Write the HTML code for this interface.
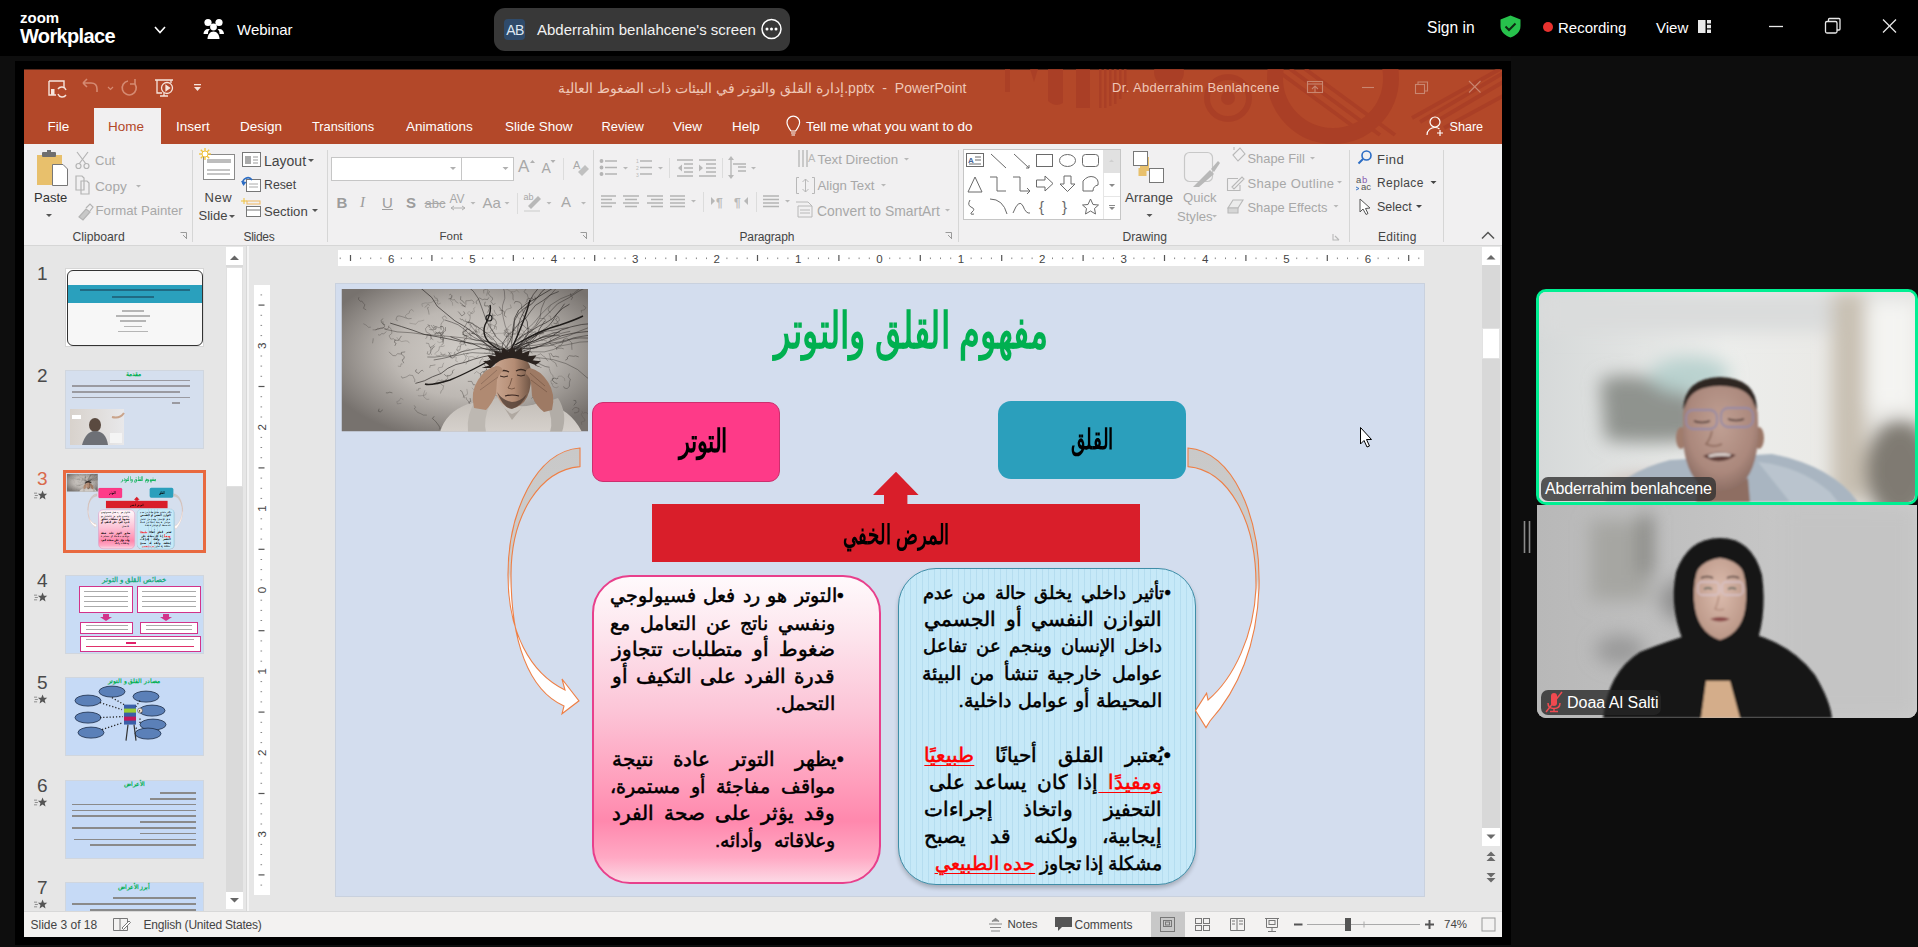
<!DOCTYPE html>
<html><head><meta charset="utf-8">
<style>
*{margin:0;padding:0;box-sizing:border-box}
html,body{width:1918px;height:947px;overflow:hidden;background:#0e0e0e;font-family:"Liberation Sans",sans-serif}
.a{position:absolute}
.t{position:absolute;white-space:nowrap;line-height:1}
svg{position:absolute;overflow:visible}
/* zoom top bar */
#top{left:0;top:0;width:1918px;height:56px;background:#000}
.zw{color:#fff}
/* share */
#share{left:15px;top:61px;width:1496px;height:884px;background:#000}
#ppt{left:24px;top:69px;width:1478px;height:868px;background:#e6e6e6;overflow:hidden}
.or{background:#b34829}
.tab{color:#fff;font-size:13.5px}
.rb{color:#444;font-size:13px}
.dis{color:#a8a8a8}
.gl{color:#444;font-size:13px}
.sep{position:absolute;width:1px;background:#d6d6d6}
.ar{position:absolute;direction:rtl;text-align:right;line-height:27px;height:27px;color:#000;white-space:nowrap;-webkit-text-stroke:0.55px currentColor;font-size:20px}
.rd{color:#f00;text-decoration:underline;text-decoration-thickness:1px;text-underline-offset:3px}
</style></head><body>
<!-- ============ ZOOM TOP BAR ============ -->
<div id="top" class="a"></div>
<div class="t zw" style="left:20px;top:10px;font-size:15px;font-weight:bold">zoom</div>
<div class="t zw" style="left:20px;top:25.5px;font-size:20px;font-weight:bold;letter-spacing:-0.65px">Workplace</div>
<svg style="left:0;top:0" width="10" height="10"><polyline points="155,27 160,32.5 165,27" fill="none" stroke="#fff" stroke-width="1.6"/></svg>
<svg style="left:0;top:0" width="10" height="10" fill="#fff">
 <circle cx="208" cy="22.5" r="3.6"/><circle cx="219" cy="22.5" r="3.6"/>
 <circle cx="213.5" cy="27" r="3.4"/>
 <path d="M203.5 34c0-3 2-5 4.5-5h2c-1 1-2 2.2-2 4v1z"/><path d="M224 34c0-3-2-5-4.5-5h-2c1 1 2 2.2 2 4v1z"/>
 <path d="M207.5 39c0-4 2.5-7.5 6-7.5s6 3.5 6 7.5z"/>
</svg>
<div class="t zw" style="left:237px;top:22px;font-size:15px;">Webinar</div>
<div class="a" style="left:494px;top:8px;width:296px;height:43px;background:#383838;border-radius:11px"></div>
<div class="a" style="left:504px;top:19px;width:21px;height:21px;background:#2f4b6b;border-radius:4px"></div>
<div class="t" style="left:505px;top:23px;font-size:14px;color:#dfe8f2;width:20px;text-align:center;letter-spacing:-0.5px">AB</div>
<div class="t zw" style="left:537px;top:22px;font-size:15px;color:#f2f2f2">Abderrahim benlahcene's screen</div>
<svg style="left:0;top:0" width="10" height="10"><circle cx="771.5" cy="29" r="9.5" fill="none" stroke="#fff" stroke-width="1.5"/><circle cx="767" cy="29" r="1.5" fill="#fff"/><circle cx="771.5" cy="29" r="1.5" fill="#fff"/><circle cx="776" cy="29" r="1.5" fill="#fff"/></svg>
<div class="t zw" style="left:1427px;top:19.5px;font-size:15.6px;">Sign in</div>
<svg style="left:0;top:0" width="10" height="10"><path d="M1510.5 15.5 L1520.5 19.5 V26 C1520.5 32 1516 35.5 1510.5 37.5 C1505 35.5 1500.5 32 1500.5 26 V19.5 Z" fill="#27c24c"/><polyline points="1505.5,26.5 1509,30 1515.5,23.5" fill="none" stroke="#0d2a12" stroke-width="2"/></svg>
<svg style="left:0;top:0" width="10" height="10"><circle cx="1548" cy="27" r="5" fill="#e8322f"/></svg>
<div class="t zw" style="left:1558px;top:20px;font-size:15px;">Recording</div>
<div class="t zw" style="left:1656px;top:20px;font-size:15px;">View</div>
<svg style="left:0;top:0" width="10" height="10" fill="#e8e8e8"><rect x="1698" y="20" width="7.5" height="13"/><rect x="1707" y="20" width="4" height="3.5"/><rect x="1707" y="24.8" width="4" height="3.5"/><rect x="1707" y="29.5" width="4" height="3.5"/></svg>
<svg style="left:0;top:0" width="10" height="10" fill="none" stroke="#e8e8e8" stroke-width="1.3">
 <line x1="1769" y1="26.5" x2="1783" y2="26.5"/>
 <rect x="1825.5" y="21.5" width="11.5" height="11.5" rx="1.5"/><path d="M1828.5 21.5 V19.5 Q1828.5 18.5 1829.5 18.5 H1839 Q1840 18.5 1840 19.5 V29 Q1840 30 1839 30 H1837"/>
 <line x1="1883" y1="19.5" x2="1896" y2="32.5"/><line x1="1896" y1="19.5" x2="1883" y2="32.5"/>
</svg>

<!-- ============ SHARE ============ -->
<div id="share" class="a"></div>
<div id="ppt" class="a"></div>
<!-- title bar + tabs -->
<div class="a or" style="left:24px;top:69px;width:1478px;height:76px;border-top:1px solid #5a2a1c"></div>
<svg style="left:0;top:0" width="10" height="10">
 <defs><clipPath id="tbclip"><rect x="24" y="69" width="1478" height="76"/></clipPath></defs>
 <g clip-path="url(#tbclip)" fill="#a83d25" opacity="0.75">
  <rect x="1005" y="69" width="5" height="23"/>
  <path d="M1030 69 H1038 L1034 82 Z"/>
  <path d="M1048 69 H1063 V103 Q1055.5 108 1048 101 Z"/>
  <rect x="1076" y="69" width="14" height="39"/>
  <rect x="1099" y="69" width="2.5" height="39"/><rect x="1104" y="69" width="2.5" height="39"/><rect x="1109" y="69" width="2.5" height="37"/><rect x="1114" y="69" width="2.5" height="35"/><rect x="1119" y="69" width="2.5" height="30"/><rect x="1124" y="69" width="2.5" height="24"/>
  <circle cx="1169" cy="72" r="15"/>
  <circle cx="1228" cy="98" r="21" fill="none" stroke="#a83d25" stroke-width="6"/>
  <circle cx="1228" cy="98" r="7"/>
  <circle cx="1333" cy="78" r="58" fill="none" stroke="#a83d25" stroke-width="16"/>
  <g stroke="#a83d25" stroke-width="4"><line x1="1275" y1="69" x2="1365" y2="135"/><line x1="1290" y1="69" x2="1380" y2="135"/><line x1="1305" y1="69" x2="1395" y2="135"/></g>
  <g stroke="#a83d25" stroke-width="4"><line x1="1510" y1="69" x2="1420" y2="122"/><line x1="1525" y1="69" x2="1432" y2="124"/><line x1="1540" y1="76" x2="1444" y2="128"/><line x1="1500" y1="69" x2="1412" y2="118"/></g>
 </g>
</svg>
<!-- QAT -->
<svg style="left:0;top:0" width="10" height="10" fill="none" stroke="#f6e4dc" stroke-width="1.4">
 <path d="M49 81 H64 V87 M49 81 V95 H56"/><rect x="51" y="89" width="3.5" height="6" fill="#f6e4dc" stroke="none"/>
 <path d="M58 89 a4.5 4.5 0 0 1 8 1 M66 95 a4.5 4.5 0 0 1 -8 -1" stroke="#f6e4dc"/>
</svg>
<svg style="left:0;top:0" width="10" height="10" fill="none" stroke="#d58a72" stroke-width="1.6">
 <path d="M83 83 L87 79 M83 83 L87 87 M83 83 H91 Q97 83 97 89 V92"/>
 <path d="M108 87 l2.5 2.5 l2.5 -2.5" stroke-width="1.2"/>
 <path d="M128 81 A7 7 0 1 0 135 84 M135 79 V84 H130"/>
</svg>
<svg style="left:0;top:0" width="10" height="10" fill="none" stroke="#f6e4dc" stroke-width="1.3">
 <path d="M155 80 H173 M157 80 V93 H162 M171 80 V83"/><circle cx="167" cy="88" r="5.5"/><path d="M166 85.5 L169.5 88 L166 90.5Z" fill="#f6e4dc"/><path d="M160 96 H168 M164 93 V96"/>
</svg>
<svg style="left:0;top:0" width="10" height="10" fill="#f6e4dc"><rect x="194" y="84" width="7" height="1.3"/><path d="M194 87 H201 L197.5 91Z"/></svg>
<div class="t" style="left:558px;top:81px;font-size:14px;color:#efc7b7;direction:ltr">إدارة القلق والتوتر في البيئات ذات الضغوط العالية.pptx&nbsp; - &nbsp;PowerPoint</div>
<div class="t" style="left:1112px;top:81px;font-size:13px;letter-spacing:0.35px;color:#efc7b7">Dr. Abderrahim Benlahcene</div>
<svg style="left:0;top:0" width="10" height="10" fill="none" stroke="#c98670" stroke-width="1.1">
 <rect x="1307.5" y="81.5" width="15" height="11"/><line x1="1307.5" y1="84" x2="1322.5" y2="84"/><path d="M1312 89 l3 -3 l3 3 M1315 86 V92"/>
 <line x1="1362" y1="87.5" x2="1374" y2="87.5"/>
 <rect x="1415.5" y="84.5" width="9" height="9"/><path d="M1418 84.5 V82 H1427.5 V91 H1424.5"/>
 <line x1="1469" y1="81" x2="1480.5" y2="92.5"/><line x1="1480.5" y1="81" x2="1469" y2="92.5"/>
</svg>
<!-- tabs -->
<div class="a" style="left:94px;top:108px;width:67px;height:37px;background:#f1f0f1"></div>
<div class="t tab" style="left:47.5px;top:119.5px">File</div>
<div class="t tab" style="left:108px;top:119.5px;color:#b34829">Home</div>
<div class="t tab" style="left:176px;top:119.5px">Insert</div>
<div class="t tab" style="left:240px;top:119.5px">Design</div>
<div class="t tab" style="left:312px;top:120.5px;font-size:12.8px">Transitions</div>
<div class="t tab" style="left:406px;top:119.5px">Animations</div>
<div class="t tab" style="left:505px;top:119.5px">Slide Show</div>
<div class="t tab" style="left:601.5px;top:120.5px;font-size:12.9px">Review</div>
<div class="t tab" style="left:673px;top:119.5px">View</div>
<div class="t tab" style="left:732px;top:119.5px">Help</div>
<svg style="left:0;top:0" width="10" height="10" fill="none" stroke="#fff" stroke-width="1.2"><path d="M791 131 C788 127 787 125 787 122.5 A6.3 6.3 0 0 1 799.6 122.5 C799.6 125 798.6 127 795.6 131 Z M791 133 H795.6 M791.5 135 H795"/></svg>
<div class="t tab" style="left:806px;top:119.5px">Tell me what you want to do</div>
<svg style="left:0;top:0" width="10" height="10" fill="none" stroke="#fff" stroke-width="1.2"><circle cx="1435" cy="122" r="5"/><path d="M1427 135 C1427 130 1431 127.5 1435 127.5 C1437 127.5 1438.5 128 1439.5 129 M1440 130 V136 M1437 133 H1443"/></svg>
<div class="t tab" style="left:1449.5px;top:120.5px;font-size:12.6px">Share</div>

<!-- ribbon -->
<div class="a" style="left:24px;top:144px;width:1478px;height:102px;background:#f1f0f1;border-bottom:1px solid #d6d6d6"></div>
<div class="sep" style="left:192px;top:150px;height:92px"></div>
<div class="sep" style="left:327px;top:150px;height:92px"></div>
<div class="sep" style="left:593px;top:150px;height:92px"></div>
<div class="sep" style="left:958px;top:150px;height:92px"></div>
<div class="sep" style="left:1349px;top:150px;height:92px"></div>
<div class="sep" style="left:1443px;top:150px;height:92px"></div>
<!-- Clipboard -->
<svg style="left:0;top:0" width="10" height="10">
 <rect x="37" y="155" width="25" height="30" fill="#e8c06c"/>
 <rect x="42" y="152" width="14" height="5" rx="1" fill="#6f6f6f"/><rect x="47" y="150" width="4" height="3" fill="#6f6f6f"/>
 <path d="M52.5 164.5 H63 L67.5 169 V185.5 H52.5 Z" fill="#fff" stroke="#777" stroke-width="1"/>
 <path d="M46 214 h6 l-3 3z" fill="#555"/>
</svg>
<div class="t rb" style="left:34px;top:190.5px;font-size:13px;color:#333">Paste</div>
<svg style="left:0;top:0" width="10" height="10" fill="none" stroke="#b4b4b4" stroke-width="1.2">
 <path d="M77 152 L86 164 M88 152 L79 164"/><circle cx="78.5" cy="166" r="2.5"/><circle cx="86.5" cy="166" r="2.5"/>
 <path d="M76 176 H82 L84 178 V190 H76Z M81 181 H87 L89 183 V194 H81Z"/>
 <path d="M79 217 L86 209 L90 212 L83 220Z" fill="#c8c8c8"/><path d="M86 208 L90 204 L93 207 L90 211" />
 <path d="M136 185 h5 l-2.5 2.5z" fill="#b4b4b4" stroke="none"/>
</svg>
<div class="t rb dis" style="left:95px;top:153.5px;font-size:13px">Cut</div>
<div class="t rb dis" style="left:95px;top:179.5px;font-size:13.6px">Copy</div>
<div class="t rb dis" style="left:95.5px;top:204px;font-size:13.2px">Format Painter</div>
<div class="t gl" style="left:72.5px;top:231px;font-size:12.2px">Clipboard</div>
<svg style="left:0;top:0" width="10" height="10" fill="none" stroke="#9a9a9a" stroke-width="1"><path d="M180.5 232.5 H186.5 V238.5 M183 235 L187 239"/></svg>
<!-- Slides -->
<svg style="left:0;top:0" width="10" height="10">
 <rect x="203.5" y="154.5" width="31" height="25" fill="#fff" stroke="#8a8a8a"/>
 <rect x="207" y="159" width="24" height="4" fill="#bdbdbd"/><line x1="207" y1="170" x2="230" y2="170" stroke="#8a8a8a"/><line x1="207" y1="174" x2="230" y2="174" stroke="#8a8a8a"/>
 <g stroke="#f0c23b" stroke-width="1.3"><line x1="205" y1="148" x2="205" y2="160"/><line x1="199" y1="154" x2="211" y2="154"/><line x1="200.8" y1="149.8" x2="209.2" y2="158.2"/><line x1="209.2" y1="149.8" x2="200.8" y2="158.2"/></g>
 <circle cx="205" cy="154" r="3" fill="#fff" stroke="#f0c23b"/>
 <path d="M229 215 h6 l-3 3z" fill="#555"/>
 <rect x="242.5" y="152.5" width="18" height="14" fill="#fff" stroke="#777"/><rect x="245" y="156" width="6" height="8" fill="#aaa"/><line x1="253" y1="157" x2="258" y2="157" stroke="#999"/><line x1="253" y1="160" x2="258" y2="160" stroke="#999"/><line x1="253" y1="163" x2="258" y2="163" stroke="#999"/>
 <path d="M308 159 h6 l-3 3z" fill="#555"/>
 <rect x="246.5" y="179.5" width="14" height="12" fill="#fff" stroke="#777"/><line x1="249" y1="184" x2="258" y2="184" stroke="#aaa"/><line x1="249" y1="187" x2="258" y2="187" stroke="#aaa"/>
 <path d="M243 184 A5 5 0 0 1 252 180" fill="none" stroke="#2b6cc4" stroke-width="1.6"/><path d="M241 181 L243.5 186 L246.5 182Z" fill="#2b6cc4"/>
 <rect x="246.5" y="206.5" width="14" height="10" fill="#fff" stroke="#777"/><line x1="246.5" y1="210" x2="260.5" y2="210" stroke="#777"/>
 <rect x="247" y="201" width="13" height="3" fill="none" stroke="#f0b860"/><g stroke="#f0c23b"><line x1="244" y1="198" x2="244" y2="204"/><line x1="241" y1="201" x2="247" y2="201"/></g>
 <path d="M312 209 h6 l-3 3z" fill="#555"/>
</svg>
<div class="t rb" style="left:204.5px;top:190.5px;font-size:13px;letter-spacing:0.6px">New</div>
<div class="t rb" style="left:198.5px;top:209px;font-size:13px">Slide</div>
<div class="t rb" style="left:264px;top:153.5px;font-size:14px">Layout</div>
<div class="t rb" style="left:264px;top:179px;font-size:12.3px">Reset</div>
<div class="t rb" style="left:264px;top:204.5px;font-size:13.1px">Section</div>
<div class="t gl" style="left:243.5px;top:231px;font-size:12px;letter-spacing:-0.3px">Slides</div>
<!-- Font -->
<div class="a" style="left:330.5px;top:156.5px;width:131px;height:24px;background:#fff;border:1px solid #c6c6c6"></div>
<div class="a" style="left:461px;top:156.5px;width:53px;height:24px;background:#fff;border:1px solid #c6c6c6"></div>
<svg style="left:0;top:0" width="10" height="10" fill="#b0b0b0">
 <path d="M450 167 h6 l-3 3z"/><path d="M502.5 167 h6 l-3 3z"/>
</svg>
<div class="t dis" style="left:518px;top:158px;font-size:17px">A</div>
<svg style="left:0;top:0" width="10" height="10" fill="#b0b0b0"><path d="M530 163 l2.5 -3 l2.5 3z"/><path d="M550.5 160 h5 l-2.5 3z"/></svg>
<div class="t dis" style="left:541.5px;top:161px;font-size:14px">A</div>
<div class="a" style="left:563px;top:158px;width:1px;height:22px;background:#dcdcdc"></div>
<div class="t dis" style="left:573px;top:160px;font-size:11px">A</div>
<svg style="left:0;top:0" width="10" height="10"><path d="M578 172 L585 165 L589 169 L582 176Z" fill="#c0c0c0"/></svg>
<div class="t dis" style="left:336.5px;top:195px;font-size:15px;font-weight:bold;color:#9c9c9c">B</div>
<div class="t dis" style="left:360px;top:195px;font-size:15px;font-style:italic;font-family:'Liberation Serif',serif;color:#9c9c9c">I</div>
<div class="t dis" style="left:382px;top:195px;font-size:15px;text-decoration:underline;color:#9c9c9c">U</div>
<div class="t dis" style="left:406px;top:195px;font-size:15px;font-weight:bold;color:#9c9c9c">S</div>
<div class="t dis" style="left:424.5px;top:197px;font-size:13px;text-decoration:line-through">abc</div>
<div class="t dis" style="left:449.5px;top:193px;font-size:12px">AV</div>
<svg style="left:0;top:0" width="10" height="10" fill="none" stroke="#b0b0b0" stroke-width="1"><path d="M451 208 H465 M451 208 l3 -2 M451 208 l3 2 M465 208 l-3 -2 M465 208 l-3 2"/></svg>
<svg style="left:0;top:0" width="10" height="10" fill="#b8b8b8"><path d="M470.5 202 h5 l-2.5 2.5z"/><path d="M504.5 202 h5 l-2.5 2.5z"/><path d="M546.5 202 h5 l-2.5 2.5z"/><path d="M581 202 h5 l-2.5 2.5z"/></svg>
<div class="t dis" style="left:482.5px;top:195px;font-size:15px">Aa</div>
<div class="a" style="left:517px;top:193px;width:1px;height:21px;background:#dcdcdc"></div>
<div class="t dis" style="left:523.5px;top:193px;font-size:9px">ab</div>
<svg style="left:0;top:0" width="10" height="10"><path d="M528 206 L538 196 L541 199 L531 209Z" fill="#b8b8b8"/><rect x="524" y="210" width="16" height="2" fill="#dedede"/></svg>
<div class="t dis" style="left:561px;top:194px;font-size:15px">A</div>
<div class="t gl" style="left:439.5px;top:231px;font-size:11.5px">Font</div>
<svg style="left:0;top:0" width="10" height="10" fill="none" stroke="#9a9a9a" stroke-width="1"><path d="M580.5 232.5 H586.5 V238.5 M583 235 L587 239"/></svg>
<!-- Paragraph -->
<svg style="left:0;top:0" width="10" height="10" fill="none" stroke="#b4b4b4" stroke-width="1.3">
 <circle cx="601.5" cy="161" r="1.3" fill="#b4b4b4"/><circle cx="601.5" cy="167.5" r="1.3" fill="#b4b4b4"/><circle cx="601.5" cy="174" r="1.3" fill="#b4b4b4"/>
 <path d="M605 161 H617 M605 167.5 H617 M605 174 H617"/>
 <path d="M640 161 H652 M640 167.5 H652 M640 174 H652"/>
 <path d="M677 160 H693 M684 164 H693 M684 168 H693 M684 172 H693 M677 176 H693"/>
 <path d="M699 160 H716 M706 164 H716 M706 168 H716 M706 172 H716 M699 176 H716"/>
 <path d="M731 158 V177 M733 164 H746 M738 167 H746 M738 171 H746"/>
 <path d="M601 196 H616 M601 199.5 H612 M601 203 H616 M601 206.5 H612"/>
 <path d="M623 196 H639 M625 199.5 H637 M623 203 H639 M625 206.5 H637"/>
 <path d="M647 196 H663 M651 199.5 H663 M647 203 H663 M651 206.5 H663"/>
 <path d="M670 196 H685 M670 199.5 H685 M670 203 H685 M670 206.5 H685"/>
 <path d="M763 196 H779 M763 199.5 H779 M763 203 H779 M763 206.5 H779"/>
 <path d="M799 150 V167 M803 150 V167 M807 150 V167"/>
</svg>
<svg style="left:0;top:0" width="10" height="10" fill="#b8b8b8">
 <text x="636" y="163" font-size="5">1</text><text x="636" y="170" font-size="5">2</text><text x="636" y="177" font-size="5">3</text>
 <path d="M623 167 h5 l-2.5 2.5z"/><path d="M658 167 h5 l-2.5 2.5z"/><path d="M751 167 h5 l-2.5 2.5z"/>
 <path d="M678 168 l4 -3.5 v7z"/><path d="M703 168 l-4 -3.5 v7z"/>
 <path d="M731 156 l-3 4 h6z"/><path d="M731 179 l-3 -4 h6z"/>
 <path d="M691 200 h5 l-2.5 2.5z"/><path d="M785 200 h5 l-2.5 2.5z"/>
 <path d="M711 197 l4 4 l-4 4z"/><path d="M748 197 l-4 4 l4 4z"/>
 <text x="716" y="207" font-size="12" font-weight="bold">¶</text><text x="734" y="207" font-size="12" font-weight="bold">¶</text>
 <text x="808" y="162" font-size="11">A</text>
 <path d="M904 158 h5 l-2.5 2.5z"/><path d="M881 184 h5 l-2.5 2.5z"/><path d="M945 209 h5 l-2.5 2.5z"/>
</svg>
<div class="a" style="left:669px;top:158px;width:1px;height:20px;background:#dcdcdc"></div>
<div class="a" style="left:722px;top:158px;width:1px;height:20px;background:#dcdcdc"></div>
<div class="a" style="left:703px;top:192px;width:1px;height:20px;background:#dcdcdc"></div>
<div class="a" style="left:756px;top:192px;width:1px;height:20px;background:#dcdcdc"></div>
<svg style="left:0;top:0" width="10" height="10" fill="none" stroke="#b8b8b8" stroke-width="1">
 <path d="M796.5 177.5 V193.5 H799 M796.5 177.5 H799 M814.5 177.5 V193.5 H812 M814.5 177.5 H812 M805.5 179 V192 M802.5 182 l3 -3 l3 3 M802.5 189 l3 3 l3 -3"/>
 <path d="M796 202 H808 L812 206 M798 206 H812 V217 H798Z M800 210 H810 M800 213 H810"/>
</svg>
<div class="t rb dis" style="left:817.5px;top:153px;font-size:13.3px">Text Direction</div>
<div class="t rb dis" style="left:817.5px;top:179px;font-size:13.2px">Align Text</div>
<div class="t rb dis" style="left:817px;top:204.5px;font-size:13.9px">Convert to SmartArt</div>
<div class="t gl" style="left:739.5px;top:231px;font-size:12px;letter-spacing:-0.15px">Paragraph</div>
<svg style="left:0;top:0" width="10" height="10" fill="none" stroke="#9a9a9a" stroke-width="1"><path d="M945.5 232.5 H951.5 V238.5 M948 235 L952 239"/></svg>
<!-- Drawing -->
<div class="a" style="left:963px;top:149px;width:158px;height:71px;background:#fff;border:1px solid #c6c6c6"></div>
<div class="a" style="left:1103px;top:150px;width:17px;height:23px;background:#e1e1e1"></div>
<div class="a" style="left:1103px;top:173px;width:1px;height:46px;background:#e6e6e6"></div>
<div class="a" style="left:1103px;top:196px;width:17px;height:1px;background:#e6e6e6"></div>
<svg style="left:0;top:0" width="10" height="10" fill="none" stroke="#6a6a6a" stroke-width="1">
 <rect x="966.5" y="153.5" width="17" height="13"/><text x="968" y="163" font-size="8" fill="#4a6a9a" stroke="none" font-weight="bold">A</text><path d="M975 157 H981 M975 160 H981 M969 164 H981"/>
 <line x1="991" y1="154" x2="1006" y2="168"/>
 <line x1="1014" y1="154" x2="1029" y2="168"/><path d="M1026 168 L1029 168 L1029 165" />
 <rect x="1036.5" y="154.5" width="16" height="12"/>
 <ellipse cx="1067.5" cy="160.5" rx="8" ry="6"/>
 <rect x="1082.5" y="154.5" width="16" height="12" rx="3"/>
 <path d="M975 177 L968 192 H982Z"/>
 <path d="M990 177 H997 V191 H1006"/>
 <path d="M1013 177 H1020 V191 H1030 M1027 188 L1030 191 L1027 194"/>
 <path d="M1036.5 180 H1045 V176 L1053 183.5 L1045 191 V187 H1036.5Z"/>
 <path d="M1064 176 H1071 V184 H1075 L1067.5 191.5 L1060 184 H1064Z"/>
 <path d="M1083 181 Q1088 175 1094 177 Q1099 179 1098 185 Q1093 186 1093 191 H1083Z"/>
 <path d="M970 200 Q967 205 971 207 Q976 209 972 212 Q969 215 974 214"/>
 <path d="M990 199 Q1003 199 1007 214"/>
 <path d="M1013 213 Q1019 198 1023 206 Q1026 214 1030 213"/>
 <text x="1039" y="212" font-size="15" fill="#6a6a6a" stroke="none">{</text><text x="1062" y="212" font-size="15" fill="#6a6a6a" stroke="none">}</text>
 <path d="M1090.5 199 L1093 204.5 L1098.5 205 L1094.5 208.5 L1095.5 214 L1090.5 211 L1085.5 214 L1086.5 208.5 L1082.5 205 L1088 204.5Z"/>
</svg>
<svg style="left:0;top:0" width="10" height="10" fill="#8a8a8a"><path d="M1109 162 h5 l-2.5 -2.5z" fill="#cfcfcf"/><path d="M1109 184 h6 l-3 3z"/><rect x="1109" y="205" width="6" height="1"/><path d="M1109 207 h6 l-3 3z"/></svg>
<svg style="left:0;top:0" width="10" height="10">
 <rect x="1140" y="157" width="9" height="14" fill="#e8c06c"/><rect x="1138.5" y="168" width="8" height="8" fill="#e8c06c"/>
 <rect x="1133.5" y="151.5" width="14" height="14" fill="#fff" stroke="#777"/>
 <rect x="1149.5" y="168.5" width="14" height="14" fill="#fff" stroke="#777"/>
 <path d="M1146.5 214 h6 l-3 3z" fill="#555"/>
 <rect x="1184.5" y="152.5" width="28" height="29" rx="5" fill="none" stroke="#c8c8c8" stroke-width="1.2"/>
 <path d="M1193 187 L1210 170 L1214 174 L1199 187Z" fill="#b8b8b8"/><path d="M1211 169 L1218 161 L1220 163 L1214 172Z" fill="#b8b8b8"/>
 <path d="M1212 215 h5 l-2.5 2.5z" fill="#b8b8b8"/>
</svg>
<div class="t rb" style="left:1125px;top:191px;font-size:13.5px">Arrange</div>
<div class="t rb dis" style="left:1183px;top:190.5px;font-size:13.1px">Quick</div>
<div class="t rb dis" style="left:1177px;top:209.5px;font-size:13.1px">Styles</div>
<div class="t gl" style="left:1122.5px;top:231px;font-size:12.1px">Drawing</div>
<svg style="left:0;top:0" width="10" height="10" fill="none" stroke="#b8b8b8" stroke-width="1.1">
 <path d="M1233 155 L1240 148 L1245 154 L1238 161Z M1234 150 V147"/>
 <path d="M1227.5 178.5 H1238 M1227.5 178.5 V190.5 H1240 V185 M1232 187 L1242 177 L1244 179 L1234 189Z"/>
 <path d="M1228 208 L1233 200 H1243 L1238 208Z" fill="#ececec"/><path d="M1228 208 H1238 V213 H1228Z" fill="#d6d6d6"/>
 <path d="M1339 240 h-6 v-6 M1335 236 l4 4"/>
</svg>
<svg style="left:0;top:0" width="10" height="10" fill="#b8b8b8"><path d="M1310 157 h5 l-2.5 2.5z"/><path d="M1337 181 h5 l-2.5 2.5z"/><path d="M1333.5 205 h5 l-2.5 2.5z"/></svg>
<div class="t rb dis" style="left:1247.5px;top:153px;font-size:12.9px">Shape Fill</div>
<div class="t rb dis" style="left:1247.5px;top:177px;font-size:13px;letter-spacing:0.35px">Shape Outline</div>
<div class="t rb dis" style="left:1247.5px;top:201.5px;font-size:12.9px">Shape Effects</div>
<!-- Editing -->
<svg style="left:0;top:0" width="10" height="10" fill="none">
 <circle cx="1366.5" cy="155.5" r="4.5" stroke="#2b6cc4" stroke-width="1.6"/><line x1="1363" y1="159" x2="1358.5" y2="163.5" stroke="#2b6cc4" stroke-width="2"/>
 <text x="1356" y="183" font-size="9.5" fill="#555">a</text><text x="1362" y="183" font-size="9.5" fill="#8a5ab0">b</text><text x="1361" y="190" font-size="9.5" fill="#555">ac</text><path d="M1356 187 l3 1.5 l-3 1.5" stroke="#2b6cc4" stroke-width="0.9"/>
 <path d="M1360 199 V212 L1363 209 L1366 214.5 L1368 213.5 L1365.5 208.5 L1370 208Z" stroke="#555" stroke-width="1" fill="#fff"/>
 <path d="M1430.5 181 h6 l-3 3z" fill="#444"/><path d="M1416 205 h6 l-3 3z" fill="#444"/>
 <path d="M1482 238.5 L1488 232.5 L1494 238.5" stroke="#555" stroke-width="1.5"/>
</svg>
<div class="t rb" style="left:1377px;top:153px;font-size:13px;letter-spacing:0.5px">Find</div>
<div class="t rb" style="left:1377px;top:176.5px;font-size:12px;letter-spacing:0.4px">Replace</div>
<div class="t rb" style="left:1377px;top:201px;font-size:12.5px">Select</div>
<div class="t gl" style="left:1378px;top:231px;font-size:12px;letter-spacing:0.3px">Editing</div>

<!-- pane + edit area -->
<div class="a" style="left:24px;top:246px;width:1478px;height:666px;background:#e6e6e6"></div>
<div class="a" style="left:246.5px;top:246px;width:2px;height:665px;background:#f4f4f4"></div>
<div class="a" style="left:245.5px;top:246px;width:1px;height:665px;background:#d8d8d8"></div>
<!-- thumbnail scrollbar -->
<div class="a" style="left:226px;top:247px;width:17px;height:662px;background:#dadada"></div>
<div class="a" style="left:226px;top:247px;width:17px;height:18px;background:#fff"></div>
<div class="a" style="left:226px;top:266.5px;width:17px;height:220px;background:#fff;border:1px solid #e0e0e0"></div>
<div class="a" style="left:226px;top:892px;width:17px;height:17px;background:#fff"></div>
<svg style="left:0;top:0" width="10" height="10" fill="#666"><path d="M230 260 h9 l-4.5 -4.5z"/><path d="M230 898 h9 l-4.5 4.5z"/></svg>
<!-- main scrollbar -->
<div class="a" style="left:1482px;top:247px;width:18px;height:599px;background:#d8d8d8"></div>
<div class="a" style="left:1482px;top:247px;width:18px;height:18px;background:#fff"></div>
<div class="a" style="left:1482px;top:328px;width:18px;height:31px;background:#fff;border:1px solid #e2e2e2"></div>
<div class="a" style="left:1482px;top:828px;width:18px;height:18px;background:#fff"></div>
<svg style="left:0;top:0" width="10" height="10" fill="#6a6a6a"><path d="M1486.5 259.5 h9 l-4.5 -4.5z"/><path d="M1486.5 834.5 h9 l-4.5 4.5z"/>
 <path d="M1486.5 856 h9 l-4.5 -4.5z"/><path d="M1486.5 861 h9 l-4.5 -4.5z"/>
 <path d="M1486.5 873 h9 l-4.5 4.5z"/><path d="M1486.5 878 h9 l-4.5 4.5z"/>
</svg>
<!-- rulers -->
<div class="a" style="left:337.5px;top:250px;width:1086px;height:16px;background:#fff"></div>
<div class="a" style="left:253.5px;top:285px;width:16px;height:610px;background:#fff"></div>
<svg style="left:0;top:0" width="10" height="10" id="rulers" font-family="Liberation Sans, sans-serif"><rect x="339.7" y="257.5" width="1" height="1.6" fill="#888"/><rect x="349.9" y="255" width="1.2" height="6" fill="#555"/><rect x="360.1" y="257.5" width="1" height="1.6" fill="#888"/><rect x="370.2" y="257.5" width="1" height="1.6" fill="#888"/><rect x="380.4" y="257.5" width="1" height="1.6" fill="#888"/><text x="391.1" y="262.5" font-size="11.5" text-anchor="middle" fill="#444">6</text><rect x="400.8" y="257.5" width="1" height="1.6" fill="#888"/><rect x="410.9" y="257.5" width="1" height="1.6" fill="#888"/><rect x="421.1" y="257.5" width="1" height="1.6" fill="#888"/><rect x="431.3" y="255" width="1.2" height="6" fill="#555"/><rect x="441.5" y="257.5" width="1" height="1.6" fill="#888"/><rect x="451.6" y="257.5" width="1" height="1.6" fill="#888"/><rect x="461.8" y="257.5" width="1" height="1.6" fill="#888"/><text x="472.5" y="262.5" font-size="11.5" text-anchor="middle" fill="#444">5</text><rect x="482.2" y="257.5" width="1" height="1.6" fill="#888"/><rect x="492.3" y="257.5" width="1" height="1.6" fill="#888"/><rect x="502.5" y="257.5" width="1" height="1.6" fill="#888"/><rect x="512.7" y="255" width="1.2" height="6" fill="#555"/><rect x="522.9" y="257.5" width="1" height="1.6" fill="#888"/><rect x="533.0" y="257.5" width="1" height="1.6" fill="#888"/><rect x="543.2" y="257.5" width="1" height="1.6" fill="#888"/><text x="553.9" y="262.5" font-size="11.5" text-anchor="middle" fill="#444">4</text><rect x="563.6" y="257.5" width="1" height="1.6" fill="#888"/><rect x="573.8" y="257.5" width="1" height="1.6" fill="#888"/><rect x="583.9" y="257.5" width="1" height="1.6" fill="#888"/><rect x="594.1" y="255" width="1.2" height="6" fill="#555"/><rect x="604.3" y="257.5" width="1" height="1.6" fill="#888"/><rect x="614.5" y="257.5" width="1" height="1.6" fill="#888"/><rect x="624.6" y="257.5" width="1" height="1.6" fill="#888"/><text x="635.3" y="262.5" font-size="11.5" text-anchor="middle" fill="#444">3</text><rect x="645.0" y="257.5" width="1" height="1.6" fill="#888"/><rect x="655.1" y="257.5" width="1" height="1.6" fill="#888"/><rect x="665.3" y="257.5" width="1" height="1.6" fill="#888"/><rect x="675.5" y="255" width="1.2" height="6" fill="#555"/><rect x="685.7" y="257.5" width="1" height="1.6" fill="#888"/><rect x="695.9" y="257.5" width="1" height="1.6" fill="#888"/><rect x="706.0" y="257.5" width="1" height="1.6" fill="#888"/><text x="716.7" y="262.5" font-size="11.5" text-anchor="middle" fill="#444">2</text><rect x="726.4" y="257.5" width="1" height="1.6" fill="#888"/><rect x="736.5" y="257.5" width="1" height="1.6" fill="#888"/><rect x="746.7" y="257.5" width="1" height="1.6" fill="#888"/><rect x="756.9" y="255" width="1.2" height="6" fill="#555"/><rect x="767.1" y="257.5" width="1" height="1.6" fill="#888"/><rect x="777.2" y="257.5" width="1" height="1.6" fill="#888"/><rect x="787.4" y="257.5" width="1" height="1.6" fill="#888"/><text x="798.1" y="262.5" font-size="11.5" text-anchor="middle" fill="#444">1</text><rect x="807.8" y="257.5" width="1" height="1.6" fill="#888"/><rect x="818.0" y="257.5" width="1" height="1.6" fill="#888"/><rect x="828.1" y="257.5" width="1" height="1.6" fill="#888"/><rect x="838.3" y="255" width="1.2" height="6" fill="#555"/><rect x="848.5" y="257.5" width="1" height="1.6" fill="#888"/><rect x="858.6" y="257.5" width="1" height="1.6" fill="#888"/><rect x="868.8" y="257.5" width="1" height="1.6" fill="#888"/><text x="879.5" y="262.5" font-size="11.5" text-anchor="middle" fill="#444">0</text><rect x="889.2" y="257.5" width="1" height="1.6" fill="#888"/><rect x="899.4" y="257.5" width="1" height="1.6" fill="#888"/><rect x="909.5" y="257.5" width="1" height="1.6" fill="#888"/><rect x="919.7" y="255" width="1.2" height="6" fill="#555"/><rect x="929.9" y="257.5" width="1" height="1.6" fill="#888"/><rect x="940.0" y="257.5" width="1" height="1.6" fill="#888"/><rect x="950.2" y="257.5" width="1" height="1.6" fill="#888"/><text x="960.9" y="262.5" font-size="11.5" text-anchor="middle" fill="#444">1</text><rect x="970.6" y="257.5" width="1" height="1.6" fill="#888"/><rect x="980.8" y="257.5" width="1" height="1.6" fill="#888"/><rect x="990.9" y="257.5" width="1" height="1.6" fill="#888"/><rect x="1001.1" y="255" width="1.2" height="6" fill="#555"/><rect x="1011.3" y="257.5" width="1" height="1.6" fill="#888"/><rect x="1021.5" y="257.5" width="1" height="1.6" fill="#888"/><rect x="1031.6" y="257.5" width="1" height="1.6" fill="#888"/><text x="1042.3" y="262.5" font-size="11.5" text-anchor="middle" fill="#444">2</text><rect x="1052.0" y="257.5" width="1" height="1.6" fill="#888"/><rect x="1062.2" y="257.5" width="1" height="1.6" fill="#888"/><rect x="1072.3" y="257.5" width="1" height="1.6" fill="#888"/><rect x="1082.5" y="255" width="1.2" height="6" fill="#555"/><rect x="1092.7" y="257.5" width="1" height="1.6" fill="#888"/><rect x="1102.8" y="257.5" width="1" height="1.6" fill="#888"/><rect x="1113.0" y="257.5" width="1" height="1.6" fill="#888"/><text x="1123.7" y="262.5" font-size="11.5" text-anchor="middle" fill="#444">3</text><rect x="1133.4" y="257.5" width="1" height="1.6" fill="#888"/><rect x="1143.5" y="257.5" width="1" height="1.6" fill="#888"/><rect x="1153.7" y="257.5" width="1" height="1.6" fill="#888"/><rect x="1163.9" y="255" width="1.2" height="6" fill="#555"/><rect x="1174.1" y="257.5" width="1" height="1.6" fill="#888"/><rect x="1184.2" y="257.5" width="1" height="1.6" fill="#888"/><rect x="1194.4" y="257.5" width="1" height="1.6" fill="#888"/><text x="1205.1" y="262.5" font-size="11.5" text-anchor="middle" fill="#444">4</text><rect x="1214.8" y="257.5" width="1" height="1.6" fill="#888"/><rect x="1225.0" y="257.5" width="1" height="1.6" fill="#888"/><rect x="1235.1" y="257.5" width="1" height="1.6" fill="#888"/><rect x="1245.3" y="255" width="1.2" height="6" fill="#555"/><rect x="1255.5" y="257.5" width="1" height="1.6" fill="#888"/><rect x="1265.7" y="257.5" width="1" height="1.6" fill="#888"/><rect x="1275.8" y="257.5" width="1" height="1.6" fill="#888"/><text x="1286.5" y="262.5" font-size="11.5" text-anchor="middle" fill="#444">5</text><rect x="1296.2" y="257.5" width="1" height="1.6" fill="#888"/><rect x="1306.3" y="257.5" width="1" height="1.6" fill="#888"/><rect x="1316.5" y="257.5" width="1" height="1.6" fill="#888"/><rect x="1326.7" y="255" width="1.2" height="6" fill="#555"/><rect x="1336.9" y="257.5" width="1" height="1.6" fill="#888"/><rect x="1347.0" y="257.5" width="1" height="1.6" fill="#888"/><rect x="1357.2" y="257.5" width="1" height="1.6" fill="#888"/><text x="1367.9" y="262.5" font-size="11.5" text-anchor="middle" fill="#444">6</text><rect x="1377.6" y="257.5" width="1" height="1.6" fill="#888"/><rect x="1387.8" y="257.5" width="1" height="1.6" fill="#888"/><rect x="1397.9" y="257.5" width="1" height="1.6" fill="#888"/><rect x="1408.1" y="255" width="1.2" height="6" fill="#555"/><rect x="1418.3" y="257.5" width="1" height="1.6" fill="#888"/><rect x="260.5" y="294.4" width="1.6" height="1" fill="#888"/><rect x="258.5" y="304.5" width="6" height="1.2" fill="#555"/><rect x="260.5" y="314.8" width="1.6" height="1" fill="#888"/><rect x="260.5" y="324.9" width="1.6" height="1" fill="#888"/><rect x="260.5" y="335.1" width="1.6" height="1" fill="#888"/><text x="261.5" y="350.0" font-size="11.5" text-anchor="middle" fill="#444" transform="rotate(-90 261.5 345.8)">3</text><rect x="260.5" y="355.5" width="1.6" height="1" fill="#888"/><rect x="260.5" y="365.6" width="1.6" height="1" fill="#888"/><rect x="260.5" y="375.8" width="1.6" height="1" fill="#888"/><rect x="258.5" y="385.9" width="6" height="1.2" fill="#555"/><rect x="260.5" y="396.2" width="1.6" height="1" fill="#888"/><rect x="260.5" y="406.4" width="1.6" height="1" fill="#888"/><rect x="260.5" y="416.5" width="1.6" height="1" fill="#888"/><text x="261.5" y="431.4" font-size="11.5" text-anchor="middle" fill="#444" transform="rotate(-90 261.5 427.2)">2</text><rect x="260.5" y="436.9" width="1.6" height="1" fill="#888"/><rect x="260.5" y="447.0" width="1.6" height="1" fill="#888"/><rect x="260.5" y="457.2" width="1.6" height="1" fill="#888"/><rect x="258.5" y="467.3" width="6" height="1.2" fill="#555"/><rect x="260.5" y="477.6" width="1.6" height="1" fill="#888"/><rect x="260.5" y="487.8" width="1.6" height="1" fill="#888"/><rect x="260.5" y="497.9" width="1.6" height="1" fill="#888"/><text x="261.5" y="512.8" font-size="11.5" text-anchor="middle" fill="#444" transform="rotate(-90 261.5 508.6)">1</text><rect x="260.5" y="518.3" width="1.6" height="1" fill="#888"/><rect x="260.5" y="528.5" width="1.6" height="1" fill="#888"/><rect x="260.5" y="538.6" width="1.6" height="1" fill="#888"/><rect x="258.5" y="548.7" width="6" height="1.2" fill="#555"/><rect x="260.5" y="559.0" width="1.6" height="1" fill="#888"/><rect x="260.5" y="569.1" width="1.6" height="1" fill="#888"/><rect x="260.5" y="579.3" width="1.6" height="1" fill="#888"/><text x="261.5" y="594.2" font-size="11.5" text-anchor="middle" fill="#444" transform="rotate(-90 261.5 590.0)">0</text><rect x="260.5" y="599.7" width="1.6" height="1" fill="#888"/><rect x="260.5" y="609.9" width="1.6" height="1" fill="#888"/><rect x="260.5" y="620.0" width="1.6" height="1" fill="#888"/><rect x="258.5" y="630.1" width="6" height="1.2" fill="#555"/><rect x="260.5" y="640.4" width="1.6" height="1" fill="#888"/><rect x="260.5" y="650.5" width="1.6" height="1" fill="#888"/><rect x="260.5" y="660.7" width="1.6" height="1" fill="#888"/><text x="261.5" y="675.6" font-size="11.5" text-anchor="middle" fill="#444" transform="rotate(-90 261.5 671.4)">1</text><rect x="260.5" y="681.1" width="1.6" height="1" fill="#888"/><rect x="260.5" y="691.2" width="1.6" height="1" fill="#888"/><rect x="260.5" y="701.4" width="1.6" height="1" fill="#888"/><rect x="258.5" y="711.5" width="6" height="1.2" fill="#555"/><rect x="260.5" y="721.8" width="1.6" height="1" fill="#888"/><rect x="260.5" y="732.0" width="1.6" height="1" fill="#888"/><rect x="260.5" y="742.1" width="1.6" height="1" fill="#888"/><text x="261.5" y="757.0" font-size="11.5" text-anchor="middle" fill="#444" transform="rotate(-90 261.5 752.8)">2</text><rect x="260.5" y="762.5" width="1.6" height="1" fill="#888"/><rect x="260.5" y="772.6" width="1.6" height="1" fill="#888"/><rect x="260.5" y="782.8" width="1.6" height="1" fill="#888"/><rect x="258.5" y="792.9" width="6" height="1.2" fill="#555"/><rect x="260.5" y="803.2" width="1.6" height="1" fill="#888"/><rect x="260.5" y="813.4" width="1.6" height="1" fill="#888"/><rect x="260.5" y="823.5" width="1.6" height="1" fill="#888"/><text x="261.5" y="838.4" font-size="11.5" text-anchor="middle" fill="#444" transform="rotate(-90 261.5 834.2)">3</text><rect x="260.5" y="843.9" width="1.6" height="1" fill="#888"/><rect x="260.5" y="854.0" width="1.6" height="1" fill="#888"/><rect x="260.5" y="864.2" width="1.6" height="1" fill="#888"/><rect x="258.5" y="874.3" width="6" height="1.2" fill="#555"/><rect x="260.5" y="884.6" width="1.6" height="1" fill="#888"/></svg>
<!-- slide -->
<div class="a" style="left:335px;top:283px;width:1090px;height:614px;background:#d3ddee;border:1px solid #c9d1de"></div>
<!-- slide content -->
<svg style="left:0;top:0" width="10" height="10" id="photo"><defs><radialGradient id="pbg" cx="0.52" cy="0.45" r="0.62"><stop offset="0" stop-color="#d2cec9"/><stop offset="0.5" stop-color="#bdb8b3"/><stop offset="1" stop-color="#77726e"/></radialGradient><clipPath id="pclip"><rect x="341.5" y="289" width="246.5" height="142.5"/></clipPath><radialGradient id="skin" cx="0.5" cy="0.4" r="0.6"><stop offset="0" stop-color="#c9a28a"/><stop offset="1" stop-color="#8f6f5c"/></radialGradient><linearGradient id="shirt" x1="0" y1="0" x2="0" y2="1"><stop offset="0" stop-color="#c2bdb7"/><stop offset="1" stop-color="#d6d1cc"/></linearGradient></defs><g clip-path="url(#pclip)"><rect x="341.5" y="289" width="246.5" height="142.5" fill="url(#pbg)"/><path d="M465.9 364.4 L466.6 362.8 L469.0 359.9 L468.5 358.2" fill="none" stroke="#3a3633" stroke-width="0.6" opacity="0.49"/><path d="M484.1 393.0 L485.5 391.5 L489.0 389.9 L491.4 389.5 L491.8 391.0 L490.0 392.4 L490.4 394.1 L493.0 396.5" fill="none" stroke="#3a3633" stroke-width="0.6" opacity="0.38"/><path d="M411.6 318.4 L408.7 318.8 L406.1 318.1 L402.8 316.8 L399.1 315.9 L397.1 316.3 L395.9 319.5 L397.7 320.8" fill="none" stroke="#3a3633" stroke-width="0.6" opacity="0.52"/><path d="M446.7 379.5 L444.5 380.8 L442.7 380.3 L441.2 379.9" fill="none" stroke="#3a3633" stroke-width="0.6" opacity="0.60"/><path d="M486.6 295.6 L487.2 293.3 L488.1 290.0 L486.6 289.2 L483.5 290.1 L483.8 293.4" fill="none" stroke="#3a3633" stroke-width="0.6" opacity="0.44"/><path d="M406.6 318.0 L405.1 316.1 L406.7 314.3 L409.2 313.1 L409.6 310.9 L411.6 309.5 L413.7 311.3" fill="none" stroke="#3a3633" stroke-width="0.6" opacity="0.37"/><path d="M443.8 362.8 L442.9 364.7 L442.4 367.1 L438.6 367.7 L438.0 369.6 L439.1 371.3 L440.8 373.8" fill="none" stroke="#3a3633" stroke-width="0.6" opacity="0.42"/><path d="M537.3 346.0 L537.0 347.8 L533.2 348.8 L530.0 348.0 L526.3 347.6 L526.3 344.4 L526.7 341.9 L526.2 339.3" fill="none" stroke="#3a3633" stroke-width="0.6" opacity="0.48"/><path d="M455.3 351.7 L454.2 353.2 L455.7 355.1 L458.7 353.0" fill="none" stroke="#3a3633" stroke-width="0.6" opacity="0.58"/><path d="M505.0 368.3 L504.1 369.8 L502.2 373.3 L501.2 375.4 L503.4 377.9 L503.3 380.6" fill="none" stroke="#3a3633" stroke-width="0.6" opacity="0.61"/><path d="M442.9 342.4 L443.3 339.5 L440.5 339.0 L441.1 335.4 L442.6 333.8 L443.3 332.0" fill="none" stroke="#3a3633" stroke-width="0.6" opacity="0.65"/><path d="M386.4 331.6 L383.8 333.8 L381.8 333.6 L379.9 335.2 L378.0 334.7" fill="none" stroke="#3a3633" stroke-width="0.6" opacity="0.52"/><path d="M495.5 303.4 L493.2 304.6 L490.8 301.4 L492.6 299.7 L492.4 297.7 L490.7 296.7 L488.4 293.7 L489.6 291.2" fill="none" stroke="#3a3633" stroke-width="0.6" opacity="0.59"/><path d="M487.1 329.8 L488.2 326.6 L488.8 324.7 L490.9 323.9 L494.2 326.0 L496.6 326.7 L496.2 330.0" fill="none" stroke="#3a3633" stroke-width="0.6" opacity="0.38"/><path d="M502.0 360.6 L504.9 359.9 L508.5 358.6 L508.9 355.8 L505.5 355.2" fill="none" stroke="#3a3633" stroke-width="0.6" opacity="0.63"/><path d="M553.1 383.0 L552.4 385.0 L553.4 387.0 L556.2 387.8 L558.5 386.7" fill="none" stroke="#3a3633" stroke-width="0.6" opacity="0.36"/><path d="M523.4 326.0 L521.3 324.1 L522.2 320.5 L520.6 319.4 L517.7 317.2 L517.5 314.2 L518.9 312.9 L518.0 310.0" fill="none" stroke="#3a3633" stroke-width="0.6" opacity="0.35"/><path d="M557.1 366.8 L556.3 365.2 L555.7 363.2 L552.9 361.3 L550.5 359.6 L550.0 355.9 L549.0 353.0" fill="none" stroke="#3a3633" stroke-width="0.6" opacity="0.53"/><path d="M395.8 340.5 L393.6 338.8 L390.8 339.1 L389.0 335.8 L391.9 333.3 L391.6 330.7 L390.8 328.4 L388.2 326.5" fill="none" stroke="#3a3633" stroke-width="0.6" opacity="0.49"/><path d="M490.9 376.4 L489.1 378.9 L488.7 381.0 L490.9 382.5 L491.3 384.2" fill="none" stroke="#3a3633" stroke-width="0.6" opacity="0.70"/><path d="M522.5 393.2 L520.1 393.5 L517.9 394.5 L518.2 396.9 L519.8 399.0 L519.8 401.4 L519.7 403.7" fill="none" stroke="#3a3633" stroke-width="0.6" opacity="0.73"/><path d="M573.5 400.4 L575.7 400.6 L576.0 402.6 L573.8 405.4" fill="none" stroke="#3a3633" stroke-width="0.6" opacity="0.68"/><path d="M423.4 371.3 L422.1 370.1 L419.6 372.1 L418.6 373.5 L415.8 372.0 L415.6 370.3 L417.0 369.5" fill="none" stroke="#3a3633" stroke-width="0.6" opacity="0.69"/><path d="M432.0 354.9 L430.8 353.8 L430.2 350.1 L432.2 349.5 L433.4 345.9 L435.2 343.7" fill="none" stroke="#3a3633" stroke-width="0.6" opacity="0.39"/><path d="M402.6 364.0 L401.0 363.8 L400.6 366.5 L397.8 366.1" fill="none" stroke="#3a3633" stroke-width="0.6" opacity="0.41"/><path d="M403.8 363.2 L402.1 359.9 L404.0 358.7 L404.3 356.6 L401.5 354.2 L401.3 352.4 L405.2 351.9" fill="none" stroke="#3a3633" stroke-width="0.6" opacity="0.68"/><path d="M556.8 349.8 L556.3 348.1 L559.0 345.6 L561.2 345.2 L562.4 343.3 L563.1 341.6 L563.7 339.5" fill="none" stroke="#3a3633" stroke-width="0.6" opacity="0.73"/><path d="M548.2 336.8 L549.8 338.0 L551.5 338.2 L554.1 336.4 L554.6 333.0 L551.4 331.5" fill="none" stroke="#3a3633" stroke-width="0.6" opacity="0.36"/><path d="M432.9 325.3 L436.3 327.3 L436.0 329.2 L432.7 329.9 L429.3 329.5" fill="none" stroke="#3a3633" stroke-width="0.6" opacity="0.62"/><path d="M435.1 346.1 L432.3 348.5 L429.7 346.9 L428.7 343.5 L425.9 343.1" fill="none" stroke="#3a3633" stroke-width="0.6" opacity="0.53"/><path d="M513.6 300.4 L513.0 298.9 L513.0 295.0 L512.0 292.6 L510.5 293.0" fill="none" stroke="#3a3633" stroke-width="0.6" opacity="0.54"/><path d="M481.5 374.7 L479.1 373.3 L476.6 371.5 L474.1 373.8" fill="none" stroke="#3a3633" stroke-width="0.6" opacity="0.41"/><path d="M518.6 358.5 L516.0 356.8 L512.7 355.2 L510.4 358.1 L510.4 359.8" fill="none" stroke="#3a3633" stroke-width="0.6" opacity="0.58"/><path d="M503.8 393.7 L502.3 394.9 L500.3 396.7 L499.1 395.4 L496.3 395.7 L494.5 394.6" fill="none" stroke="#3a3633" stroke-width="0.6" opacity="0.51"/><path d="M434.7 335.0 L436.1 332.8 L440.0 332.9 L442.2 332.6 L444.0 329.2 L442.8 326.5 L440.0 326.5" fill="none" stroke="#3a3633" stroke-width="0.6" opacity="0.73"/><path d="M548.5 397.1 L546.9 395.8 L548.0 393.3 L546.7 392.6" fill="none" stroke="#3a3633" stroke-width="0.6" opacity="0.52"/><path d="M435.6 354.8 L437.2 355.7 L439.5 355.5 L441.6 354.2 L442.9 355.7 L445.4 353.4" fill="none" stroke="#3a3633" stroke-width="0.6" opacity="0.41"/><path d="M530.2 360.0 L531.0 357.6 L530.3 356.1 L526.8 356.5" fill="none" stroke="#3a3633" stroke-width="0.6" opacity="0.43"/><path d="M518.3 333.7 L519.9 336.7 L518.9 339.0 L521.9 340.6 L525.5 341.2 L527.4 341.9 L529.5 338.7 L530.3 335.7" fill="none" stroke="#3a3633" stroke-width="0.6" opacity="0.36"/><path d="M523.3 313.0 L522.8 310.3 L521.4 308.6 L521.7 304.6 L519.8 302.2 L517.0 301.5 L515.1 301.6 L514.3 303.5" fill="none" stroke="#3a3633" stroke-width="0.6" opacity="0.71"/><path d="M441.2 345.5 L443.2 343.4 L443.1 341.5 L443.3 339.2 L442.2 335.8 L440.7 335.4 L440.6 332.9" fill="none" stroke="#3a3633" stroke-width="0.6" opacity="0.64"/><path d="M490.9 374.2 L488.3 371.2 L485.7 372.1 L482.1 371.8 L480.6 373.4 L480.7 375.9 L481.6 379.6" fill="none" stroke="#3a3633" stroke-width="0.6" opacity="0.68"/><path d="M488.1 339.3 L487.7 342.0 L491.3 343.2 L490.9 346.0 L490.9 348.7 L489.2 349.9 L489.9 353.7" fill="none" stroke="#3a3633" stroke-width="0.6" opacity="0.35"/><path d="M519.0 292.5 L516.7 289.9 L515.4 291.1 L514.0 291.9 L510.2 291.3 L507.8 289.7 L504.6 288.5" fill="none" stroke="#3a3633" stroke-width="0.6" opacity="0.34"/><path d="M495.3 372.6 L493.1 372.0 L489.3 371.5 L486.2 369.4" fill="none" stroke="#3a3633" stroke-width="0.6" opacity="0.51"/><path d="M484.0 373.5 L483.8 371.5 L486.6 370.2 L486.2 368.2 L485.1 366.0 L483.6 363.1" fill="none" stroke="#3a3633" stroke-width="0.6" opacity="0.62"/><path d="M444.2 374.1 L446.1 376.1 L450.0 375.5 L452.6 373.1 L452.5 371.1 L454.1 369.5" fill="none" stroke="#3a3633" stroke-width="0.6" opacity="0.73"/><path d="M444.6 345.7 L443.1 346.3 L439.3 346.8 L439.3 348.3 L438.5 350.7 L436.8 351.8 L434.4 354.0" fill="none" stroke="#3a3633" stroke-width="0.6" opacity="0.44"/><path d="M496.9 355.1 L500.8 355.2 L501.9 356.4 L502.4 358.8 L503.8 360.7" fill="none" stroke="#3a3633" stroke-width="0.6" opacity="0.38"/><path d="M524.6 345.6 L522.0 347.8 L520.6 350.9 L521.1 354.4" fill="none" stroke="#3a3633" stroke-width="0.6" opacity="0.34"/><path d="M469.9 320.9 L468.1 322.5 L466.8 321.7 L463.4 320.8 L462.7 319.3 L461.1 319.9 L459.9 318.1" fill="none" stroke="#3a3633" stroke-width="0.6" opacity="0.64"/><path d="M520.2 324.4 L523.5 325.3 L526.0 328.1 L529.2 328.8 L532.3 330.5 L531.7 332.1 L529.9 332.4 L527.6 331.0" fill="none" stroke="#3a3633" stroke-width="0.6" opacity="0.65"/><path d="M491.6 326.4 L489.7 323.7 L491.0 320.5 L492.6 318.8" fill="none" stroke="#3a3633" stroke-width="0.6" opacity="0.44"/><path d="M417.9 395.6 L419.8 395.9 L422.9 395.5 L425.7 394.9 L426.4 392.4" fill="none" stroke="#3a3633" stroke-width="0.6" opacity="0.35"/><path d="M549.2 368.3 L550.1 371.5 L551.0 373.4 L552.9 375.7 L553.4 379.0 L550.8 380.8 L551.7 384.3" fill="none" stroke="#3a3633" stroke-width="0.6" opacity="0.43"/><path d="M431.5 330.0 L431.0 328.1 L429.0 327.2 L429.4 325.2 L427.4 324.5" fill="none" stroke="#3a3633" stroke-width="0.6" opacity="0.41"/><path d="M401.4 335.9 L400.4 337.4 L398.5 340.4 L394.8 340.1 L394.4 342.3 L396.1 343.3 L394.8 345.9" fill="none" stroke="#3a3633" stroke-width="0.6" opacity="0.72"/><path d="M403.4 399.8 L400.7 398.1 L399.1 400.8 L396.8 401.6 L397.4 403.9 L401.4 403.3" fill="none" stroke="#3a3633" stroke-width="0.6" opacity="0.32"/><path d="M435.4 364.8 L432.0 365.5 L430.3 365.5 L429.7 367.9" fill="none" stroke="#3a3633" stroke-width="0.6" opacity="0.55"/><path d="M464.6 332.3 L466.2 333.7 L470.1 334.2 L472.7 332.9 L474.2 330.8 L478.0 331.8" fill="none" stroke="#3a3633" stroke-width="0.6" opacity="0.46"/><path d="M508.9 403.0 L509.8 404.6 L511.5 404.3 L513.9 404.5" fill="none" stroke="#3a3633" stroke-width="0.6" opacity="0.65"/><path d="M492.3 354.0 L495.1 352.8 L496.9 350.7 L496.1 348.7 L494.8 345.1 L492.1 345.1 L489.9 341.9" fill="none" stroke="#3a3633" stroke-width="0.6" opacity="0.39"/><path d="M572.1 410.0 L574.4 407.9 L576.0 407.4 L579.0 408.6 L578.8 411.7 L576.0 412.8 L574.0 412.8" fill="none" stroke="#3a3633" stroke-width="0.6" opacity="0.51"/><path d="M465.3 340.6 L466.6 339.3 L466.6 336.0 L468.1 335.5 L471.5 335.2" fill="none" stroke="#3a3633" stroke-width="0.6" opacity="0.32"/><path d="M494.5 328.8 L495.1 325.4 L496.4 323.6 L496.1 321.2 L494.6 318.9 L493.0 318.9 L492.9 316.3 L492.2 313.3" fill="none" stroke="#3a3633" stroke-width="0.6" opacity="0.67"/><path d="M463.4 353.3 L464.9 355.4 L465.8 356.7 L466.1 358.4 L464.1 361.3 L463.2 362.6" fill="none" stroke="#3a3633" stroke-width="0.6" opacity="0.53"/><path d="M382.8 409.8 L380.3 411.9 L378.4 411.3 L379.1 408.7" fill="none" stroke="#3a3633" stroke-width="0.6" opacity="0.73"/><path d="M508.5 333.5 L506.4 332.5 L505.8 330.7 L507.5 329.4 L509.3 330.1" fill="none" stroke="#3a3633" stroke-width="0.6" opacity="0.53"/><path d="M512.9 332.5 L514.6 334.2 L517.1 333.9 L519.2 334.5 L521.5 333.8 L523.2 335.2 L523.3 336.8 L519.8 338.6" fill="none" stroke="#3a3633" stroke-width="0.6" opacity="0.50"/><path d="M396.7 337.2 L398.6 339.7 L401.5 341.6 L405.4 340.9 L407.8 341.1 L409.4 343.2" fill="none" stroke="#3a3633" stroke-width="0.6" opacity="0.38"/><path d="M479.3 333.1 L478.6 329.2 L481.9 327.2 L484.4 329.4 L484.6 331.4 L486.6 333.7" fill="none" stroke="#3a3633" stroke-width="0.6" opacity="0.49"/><path d="M468.7 354.0 L467.3 353.3 L466.3 355.5 L468.2 357.1 L471.1 356.6 L473.1 356.8 L475.4 358.1 L478.5 355.7" fill="none" stroke="#3a3633" stroke-width="0.6" opacity="0.41"/><path d="M494.6 358.8 L492.8 357.6 L491.1 360.2 L489.5 362.0 L487.0 362.8 L485.4 359.9" fill="none" stroke="#3a3633" stroke-width="0.6" opacity="0.41"/><path d="M493.6 338.5 L492.2 339.9 L490.7 339.0 L488.7 336.6 L486.2 336.9 L483.1 337.0 L480.8 335.9" fill="none" stroke="#3a3633" stroke-width="0.6" opacity="0.58"/><path d="M460.1 344.3 L459.9 342.7 L462.8 341.0 L465.4 338.9 L466.8 337.4 L465.8 335.6 L463.7 336.5" fill="none" stroke="#3a3633" stroke-width="0.6" opacity="0.64"/><path d="M469.7 316.0 L467.4 312.9 L469.1 311.5 L472.1 313.8 L474.3 312.1 L473.7 308.4 L475.4 307.2" fill="none" stroke="#3a3633" stroke-width="0.6" opacity="0.37"/><path d="M510.9 332.4 L510.8 336.1 L509.3 339.0 L506.1 341.2 L503.3 343.5 L499.6 343.7 L496.4 344.5 L494.2 344.6" fill="none" stroke="#3a3633" stroke-width="0.6" opacity="0.40"/><path d="M464.1 334.3 L463.3 332.8 L463.1 330.9 L466.3 330.4 L466.2 328.6" fill="none" stroke="#3a3633" stroke-width="0.6" opacity="0.59"/><path d="M499.9 348.8 L500.7 350.6 L498.3 352.1 L494.6 352.2 L492.3 349.9 L490.4 349.0 L489.0 349.8 L486.7 346.8" fill="none" stroke="#3a3633" stroke-width="0.6" opacity="0.64"/><path d="M558.3 378.1 L556.7 378.9 L554.8 378.1 L552.3 378.7 L552.7 380.8 L555.2 382.9 L557.4 383.6" fill="none" stroke="#3a3633" stroke-width="0.6" opacity="0.73"/><path d="M372.6 343.3 L372.8 341.7 L373.1 340.0 L373.2 338.3" fill="none" stroke="#3a3633" stroke-width="0.6" opacity="0.55"/><path d="M439.6 330.9 L438.9 334.2 L437.4 334.0 L434.7 333.6 L433.8 331.8 L432.7 329.7 L433.8 327.9 L435.9 328.8" fill="none" stroke="#3a3633" stroke-width="0.6" opacity="0.40"/><path d="M459.8 302.6 L463.0 305.0 L464.1 306.4 L465.8 306.9" fill="none" stroke="#3a3633" stroke-width="0.6" opacity="0.72"/><path d="M550.7 305.5 L549.3 307.3 L548.1 309.9 L550.4 313.1" fill="none" stroke="#3a3633" stroke-width="0.6" opacity="0.58"/><path d="M506.9 338.2 L505.7 336.1 L504.1 335.2 L504.2 332.0 L505.6 330.7 L507.5 327.9 L508.9 326.7 L511.4 324.0" fill="none" stroke="#3a3633" stroke-width="0.6" opacity="0.41"/><path d="M496.7 375.0 L494.9 374.7 L493.0 376.1 L491.4 377.1 L490.5 378.9 L487.5 377.6 L485.0 380.6 L486.3 382.6" fill="none" stroke="#3a3633" stroke-width="0.6" opacity="0.74"/><path d="M446.6 355.0 L443.0 354.4 L441.5 354.3 L440.5 351.9" fill="none" stroke="#3a3633" stroke-width="0.6" opacity="0.40"/><path d="M525.8 341.2 L528.0 342.3 L529.2 345.9 L530.8 348.4 L530.1 350.9 L532.1 353.5" fill="none" stroke="#3a3633" stroke-width="0.6" opacity="0.70"/><path d="M529.8 299.1 L528.1 297.8 L527.2 294.2 L525.0 293.0 L524.2 291.3 L526.0 289.2 L523.4 286.7" fill="none" stroke="#3a3633" stroke-width="0.6" opacity="0.53"/><path d="M518.7 324.1 L519.0 325.9 L520.7 327.0 L521.9 330.7 L524.1 331.4 L524.5 334.0 L526.9 335.3" fill="none" stroke="#3a3633" stroke-width="0.6" opacity="0.31"/><path d="M494.0 309.8 L495.1 312.8 L497.2 315.4 L501.0 314.2 L502.1 313.0 L502.3 310.5 L499.7 310.3" fill="none" stroke="#3a3633" stroke-width="0.6" opacity="0.49"/><path d="M463.6 311.4 L464.9 313.6 L461.8 316.0 L459.4 312.9 L458.1 311.5" fill="none" stroke="#3a3633" stroke-width="0.6" opacity="0.72"/><path d="M569.4 373.5 L568.1 376.9 L570.4 379.1 L569.4 382.5 L569.4 386.4 L567.1 388.6 L564.5 388.1 L563.5 386.3" fill="none" stroke="#3a3633" stroke-width="0.6" opacity="0.62"/><path d="M452.7 305.7 L452.4 302.6 L450.7 300.5 L450.2 298.9 L451.8 297.8 L452.6 295.5" fill="none" stroke="#3a3633" stroke-width="0.6" opacity="0.34"/><path d="M435.2 331.7 L437.6 333.7 L438.6 332.5 L441.2 334.3 L442.9 333.9 L443.4 331.9 L445.5 330.8 L445.5 327.1" fill="none" stroke="#3a3633" stroke-width="0.6" opacity="0.66"/><path d="M537.1 414.6 L535.8 411.1 L537.8 408.1 L536.5 405.1" fill="none" stroke="#3a3633" stroke-width="0.6" opacity="0.54"/><path d="M477.0 304.2 L476.0 301.9 L477.7 299.7 L479.7 297.9 L482.4 299.7 L484.3 299.2 L487.6 299.5 L488.8 297.5" fill="none" stroke="#3a3633" stroke-width="0.6" opacity="0.61"/><path d="M433.8 345.5 L430.4 347.3 L431.2 350.2 L430.9 351.8 L429.3 354.6 L427.1 353.8 L427.9 351.2" fill="none" stroke="#3a3633" stroke-width="0.6" opacity="0.52"/><path d="M491.6 339.0 L489.2 336.3 L486.7 335.1 L483.7 333.5 L481.3 334.5" fill="none" stroke="#3a3633" stroke-width="0.6" opacity="0.49"/><path d="M382.9 321.3 L383.0 324.1 L384.9 326.1 L382.8 328.3 L380.5 328.1 L378.5 329.1 L375.4 329.7" fill="none" stroke="#3a3633" stroke-width="0.6" opacity="0.65"/><path d="M565.3 360.2 L567.5 359.0 L567.3 357.4 L569.3 355.7 L570.9 355.9 L573.8 356.3 L575.6 355.9 L578.7 356.9" fill="none" stroke="#3a3633" stroke-width="0.6" opacity="0.69"/><path d="M493.5 350.4 L491.8 351.2 L492.9 354.4 L490.3 356.2 L488.4 359.2" fill="none" stroke="#3a3633" stroke-width="0.6" opacity="0.65"/><path d="M440.7 333.8 L442.1 334.4 L444.5 336.2 L443.5 338.7 L442.0 341.9 L439.5 342.6 L437.2 341.6" fill="none" stroke="#3a3633" stroke-width="0.6" opacity="0.33"/><path d="M448.5 298.8 L451.1 298.5 L451.6 295.5 L450.3 294.1 L449.2 295.1" fill="none" stroke="#3a3633" stroke-width="0.6" opacity="0.61"/><path d="M583.4 413.5 L584.6 412.6 L586.7 412.7 L588.1 414.2" fill="none" stroke="#3a3633" stroke-width="0.6" opacity="0.32"/><path d="M534.7 296.5 L535.7 299.0 L533.9 300.2 L531.9 297.5 L530.7 298.4 L527.2 299.0 L527.0 301.2 L525.6 302.6" fill="none" stroke="#3a3633" stroke-width="0.6" opacity="0.69"/><path d="M460.8 346.1 L458.1 346.4 L456.6 350.0 L459.4 352.7 L462.7 351.5 L465.9 350.2 L467.8 349.0 L470.0 349.6" fill="none" stroke="#3a3633" stroke-width="0.6" opacity="0.43"/><path d="M422.5 306.8 L421.8 303.8 L425.3 302.9 L427.6 303.1 L431.2 302.5 L434.0 300.8 L437.6 300.0 L439.2 301.5" fill="none" stroke="#3a3633" stroke-width="0.6" opacity="0.30"/><path d="M475.3 384.7 L473.4 384.9 L471.7 381.4 L467.8 381.4" fill="none" stroke="#3a3633" stroke-width="0.6" opacity="0.66"/><path d="M389.0 325.5 L388.3 328.3 L386.4 329.0 L382.9 327.5 L380.2 328.7 L377.6 328.3 L376.1 329.9 L372.6 329.8" fill="none" stroke="#3a3633" stroke-width="0.6" opacity="0.51"/><path d="M564.9 381.1 L564.4 378.3 L561.5 376.2 L558.7 376.1 L557.5 377.7" fill="none" stroke="#3a3633" stroke-width="0.6" opacity="0.34"/><path d="M495.6 315.5 L492.9 315.0 L492.0 316.3 L490.0 314.8 L487.5 316.6 L485.7 316.0" fill="none" stroke="#3a3633" stroke-width="0.6" opacity="0.57"/><path d="M442.6 383.1 L445.1 380.4 L447.6 378.7 L447.7 374.9" fill="none" stroke="#3a3633" stroke-width="0.6" opacity="0.43"/><path d="M529.1 368.7 L530.1 366.8 L528.4 365.7 L526.9 366.4 L527.7 369.2 L525.7 370.9 L522.9 368.3 L520.5 370.1" fill="none" stroke="#3a3633" stroke-width="0.6" opacity="0.48"/><path d="M581.5 410.8 L582.7 412.0 L581.3 414.4 L583.0 417.6 L584.6 418.9 L585.0 420.8 L581.3 422.1 L581.9 424.9" fill="none" stroke="#3a3633" stroke-width="0.6" opacity="0.31"/><path d="M517.1 330.7 L516.7 332.5 L513.3 334.4 L511.1 334.3 L507.9 333.2 L506.5 335.1 L506.7 336.9" fill="none" stroke="#3a3633" stroke-width="0.6" opacity="0.52"/><path d="M499.9 369.5 L502.5 372.2 L502.2 374.0 L500.6 374.6" fill="none" stroke="#3a3633" stroke-width="0.6" opacity="0.58"/><path d="M416.1 390.2 L418.6 390.1 L418.6 388.5 L420.9 388.3" fill="none" stroke="#3a3633" stroke-width="0.6" opacity="0.41"/><path d="M519.3 369.1 L520.5 371.4 L518.8 373.3 L519.7 375.7" fill="none" stroke="#3a3633" stroke-width="0.6" opacity="0.41"/><path d="M550.6 352.9 L551.5 354.4 L553.0 356.7 L555.8 356.2 L559.1 357.1" fill="none" stroke="#3a3633" stroke-width="0.6" opacity="0.72"/><path d="M382.9 318.5 L381.2 320.5 L381.4 322.5 L383.4 324.1 L385.1 324.8" fill="none" stroke="#3a3633" stroke-width="0.6" opacity="0.67"/><path d="M510.4 342.1 L511.1 339.9 L510.0 338.9 L510.5 336.2 L508.7 334.4 L509.7 332.6 L510.9 331.2" fill="none" stroke="#3a3633" stroke-width="0.6" opacity="0.38"/><path d="M487.3 359.6 L488.3 362.9 L490.1 363.3 L492.2 365.5 L494.5 365.1 L493.9 361.9 L493.4 358.3 L496.0 357.3" fill="none" stroke="#3a3633" stroke-width="0.6" opacity="0.46"/><path d="M464.4 398.2 L463.2 394.6 L461.8 391.2 L460.0 390.4" fill="none" stroke="#3a3633" stroke-width="0.6" opacity="0.67"/><path d="M457.9 361.8 L455.7 361.0 L456.3 357.2 L454.0 356.4 L450.8 358.0 L448.6 355.4 L449.9 352.7 L452.1 353.1" fill="none" stroke="#3a3633" stroke-width="0.6" opacity="0.35"/><path d="M472.9 304.0 L474.0 302.2 L471.9 300.0 L469.7 300.5 L465.8 300.8 L465.9 304.6 L464.5 306.2 L461.5 305.5" fill="none" stroke="#3a3633" stroke-width="0.6" opacity="0.51"/><path d="M484.4 386.1 L482.8 386.5 L482.5 389.2 L482.2 391.4" fill="none" stroke="#3a3633" stroke-width="0.6" opacity="0.35"/><path d="M455.2 356.5 L452.7 358.1 L450.9 357.6 L449.8 353.9 L448.3 351.9" fill="none" stroke="#3a3633" stroke-width="0.6" opacity="0.68"/><path d="M425.5 338.9 L426.8 337.3 L427.3 334.7 L430.7 335.1 L431.2 338.7 L429.8 339.6" fill="none" stroke="#3a3633" stroke-width="0.6" opacity="0.53"/><path d="M480.3 384.8 L478.5 385.6 L477.3 387.3 L475.5 388.1 L473.6 389.7 L471.9 387.7" fill="none" stroke="#3a3633" stroke-width="0.6" opacity="0.32"/><path d="M424.8 307.6 L426.2 306.0 L428.1 304.2 L429.8 305.6" fill="none" stroke="#3a3633" stroke-width="0.6" opacity="0.44"/><path d="M463.3 329.6 L463.8 328.0 L465.9 324.8 L467.0 322.2 L470.8 322.5 L472.9 323.2 L474.5 326.1 L476.9 327.1" fill="none" stroke="#3a3633" stroke-width="0.6" opacity="0.61"/><path d="M489.6 382.0 L486.8 381.5 L484.5 380.1 L482.4 380.2 L480.8 382.5 L480.1 385.4" fill="none" stroke="#3a3633" stroke-width="0.6" opacity="0.31"/><path d="M414.2 405.4 L415.5 407.2 L414.4 408.9 L415.5 409.9 L417.4 412.3 L420.3 413.5 L423.5 415.1 L426.9 415.1" fill="none" stroke="#3a3633" stroke-width="0.6" opacity="0.53"/><path d="M562.6 341.2 L564.0 339.2 L566.8 338.1 L569.4 340.5 L571.8 342.9 L571.7 346.3 L572.0 349.8" fill="none" stroke="#3a3633" stroke-width="0.6" opacity="0.62"/><path d="M504.7 334.9 L506.0 332.3 L504.3 330.5 L505.7 329.2" fill="none" stroke="#3a3633" stroke-width="0.6" opacity="0.68"/><path d="M466.0 397.1 L466.5 399.2 L468.1 401.0 L469.9 403.4 L470.2 404.9 L467.9 408.1 L467.3 410.3" fill="none" stroke="#3a3633" stroke-width="0.6" opacity="0.54"/><path d="M499.2 306.6 L501.1 309.9 L504.3 311.6 L504.3 315.5 L506.4 317.0" fill="none" stroke="#3a3633" stroke-width="0.6" opacity="0.71"/><path d="M497.1 345.8 L494.3 346.5 L492.3 348.7 L490.5 351.8 L488.0 352.5 L486.6 353.2 L483.9 352.8" fill="none" stroke="#3a3633" stroke-width="0.6" opacity="0.30"/><path d="M516.1 356.4 L514.3 358.7 L511.3 360.9 L509.5 358.9 L507.0 357.0 L508.5 355.2 L510.9 352.6 L510.3 350.4" fill="none" stroke="#3a3633" stroke-width="0.6" opacity="0.74"/><path d="M510.3 304.5 L511.3 308.0 L507.7 309.0 L506.0 309.9 L505.0 312.5 L504.3 314.3" fill="none" stroke="#3a3633" stroke-width="0.6" opacity="0.38"/><path d="M428.8 307.3 L427.4 307.8 L428.5 310.9 L429.1 314.6" fill="none" stroke="#3a3633" stroke-width="0.6" opacity="0.48"/><path d="M487.9 348.9 L490.7 349.4 L493.4 347.7 L496.9 345.9 L499.4 345.3" fill="none" stroke="#3a3633" stroke-width="0.6" opacity="0.35"/><path d="M531.3 398.5 L534.3 396.0 L536.3 394.3 L538.4 391.4" fill="none" stroke="#3a3633" stroke-width="0.6" opacity="0.59"/><path d="M451.1 299.2 L452.8 300.0 L454.5 299.5 L456.1 301.9 L458.4 303.2" fill="none" stroke="#3a3633" stroke-width="0.6" opacity="0.47"/><path d="M359.0 297.2 L358.3 299.1 L360.3 301.3 L361.8 301.0 L363.3 303.2 L364.9 304.6 L363.5 308.3 L366.2 309.9" fill="none" stroke="#3a3633" stroke-width="0.6" opacity="0.60"/><path d="M431.1 325.1 L433.1 328.1 L434.9 327.4 L436.1 326.4 L438.3 327.6 L440.6 327.7 L441.3 330.0" fill="none" stroke="#3a3633" stroke-width="0.6" opacity="0.59"/><path d="M535.9 335.4 L536.3 333.5 L535.3 331.6 L532.4 332.8 L531.3 334.3 L529.6 334.8 L527.6 337.8 L529.1 339.9" fill="none" stroke="#3a3633" stroke-width="0.6" opacity="0.68"/><path d="M491.0 323.9 L490.0 327.7 L492.4 330.7 L493.7 332.4 L495.0 333.6 L495.4 335.7 L492.7 337.0" fill="none" stroke="#3a3633" stroke-width="0.6" opacity="0.47"/><path d="M481.8 397.0 L481.2 398.6 L477.9 399.0 L476.7 398.0" fill="none" stroke="#3a3633" stroke-width="0.6" opacity="0.62"/><path d="M485.9 350.2 L487.1 348.6 L485.8 345.1 L482.0 345.7 L479.7 343.3" fill="none" stroke="#3a3633" stroke-width="0.6" opacity="0.39"/><path d="M475.4 329.0 L476.5 331.3 L473.9 333.5 L470.7 331.7 L469.0 333.1 L470.8 335.7 L471.0 338.1" fill="none" stroke="#3a3633" stroke-width="0.6" opacity="0.49"/><path d="M433.9 295.5 L435.3 298.2 L437.1 298.3 L437.7 301.6 L436.9 303.0 L438.5 304.1 L440.6 303.2" fill="none" stroke="#3a3633" stroke-width="0.6" opacity="0.47"/><path d="M526.0 353.0 L525.0 351.2 L523.7 348.7 L526.1 346.7 L529.5 344.9" fill="none" stroke="#3a3633" stroke-width="0.6" opacity="0.35"/><path d="M571.2 299.9 L572.7 297.0 L570.8 295.8 L570.5 293.4" fill="none" stroke="#3a3633" stroke-width="0.6" opacity="0.71"/><path d="M401.2 376.2 L402.3 378.1 L406.1 377.0 L409.4 375.1 L412.7 375.5 L414.0 378.3 L414.8 379.7 L414.7 382.2" fill="none" stroke="#3a3633" stroke-width="0.6" opacity="0.53"/><path d="M505.9 336.3 L509.4 336.2 L511.3 336.4 L513.4 333.7" fill="none" stroke="#3a3633" stroke-width="0.6" opacity="0.41"/><path d="M505.0 375.5 L507.7 373.8 L509.9 372.2 L511.4 372.3 L512.9 373.4 L514.4 376.3" fill="none" stroke="#3a3633" stroke-width="0.6" opacity="0.36"/><path d="M460.8 296.2 L460.5 299.6 L463.1 301.4 L464.6 303.5" fill="none" stroke="#3a3633" stroke-width="0.6" opacity="0.64"/><path d="M493.2 328.6 L492.9 330.2 L490.7 330.4 L490.2 332.7 L488.3 332.4 L485.4 332.5" fill="none" stroke="#3a3633" stroke-width="0.6" opacity="0.43"/><path d="M464.3 340.9 L464.1 344.2 L461.2 344.2 L460.4 346.7 L460.1 348.7 L459.8 350.2 L456.6 350.1" fill="none" stroke="#3a3633" stroke-width="0.6" opacity="0.58"/><path d="M553.5 323.1 L556.7 323.9 L557.4 321.5 L555.6 319.9 L557.2 317.6" fill="none" stroke="#3a3633" stroke-width="0.6" opacity="0.70"/><path d="M469.4 328.9 L470.7 327.0 L469.2 323.8 L467.2 322.5 L465.4 320.8 L465.8 318.8" fill="none" stroke="#3a3633" stroke-width="0.6" opacity="0.32"/><path d="M409.4 323.2 L413.2 323.8 L415.9 324.2 L417.2 322.4 L418.5 321.3 L420.4 321.1 L424.2 320.1" fill="none" stroke="#3a3633" stroke-width="0.6" opacity="0.34"/><path d="M537.3 355.2 L540.7 353.8 L543.2 356.1 L545.1 357.2 L546.6 359.6 L548.3 361.2" fill="none" stroke="#3a3633" stroke-width="0.6" opacity="0.50"/><path d="M507.2 332.1 L504.1 333.1 L501.5 333.3 L498.7 333.2 L495.9 333.7 L494.0 333.3 L491.0 333.6" fill="none" stroke="#3a3633" stroke-width="0.6" opacity="0.34"/><path d="M440.5 393.5 L441.2 391.0 L442.8 389.3 L443.7 385.7 L441.9 385.1 L440.2 383.1 L437.4 384.4" fill="none" stroke="#3a3633" stroke-width="0.6" opacity="0.47"/><path d="M430.1 325.8 L428.0 325.8 L425.4 328.8 L426.3 332.1 L429.6 333.6 L430.8 335.1 L431.2 338.4 L433.4 339.8" fill="none" stroke="#3a3633" stroke-width="0.6" opacity="0.54"/><path d="M539.9 318.5 L541.7 318.5 L544.5 318.6 L546.2 322.1" fill="none" stroke="#3a3633" stroke-width="0.6" opacity="0.58"/><path d="M544.1 333.7 L540.2 334.2 L539.0 336.6 L540.8 338.2 L541.9 340.5 L543.4 340.0 L547.1 341.2" fill="none" stroke="#3a3633" stroke-width="0.6" opacity="0.51"/><path d="M501.6 359.1 L505.2 358.4 L509.0 358.5 L509.7 360.3" fill="none" stroke="#3a3633" stroke-width="0.6" opacity="0.64"/><path d="M429.3 399.2 L426.8 399.4 L423.8 396.9 L423.6 395.3 L423.8 393.6 L424.9 390.3" fill="none" stroke="#3a3633" stroke-width="0.6" opacity="0.35"/><path d="M553.6 319.2 L552.6 320.5 L550.6 318.9 L550.6 316.2 L548.5 315.8" fill="none" stroke="#3a3633" stroke-width="0.6" opacity="0.37"/><path d="M581.6 312.6 L581.1 310.5 L584.4 309.8 L586.0 307.7 L582.9 305.2" fill="none" stroke="#3a3633" stroke-width="0.6" opacity="0.52"/><path d="M466.1 346.0 L464.5 342.8 L464.8 340.3 L464.8 338.4" fill="none" stroke="#3a3633" stroke-width="0.6" opacity="0.68"/><path d="M392.4 392.9 L389.7 392.2 L387.9 392.9 L385.9 392.8" fill="none" stroke="#3a3633" stroke-width="0.6" opacity="0.67"/><path d="M473.0 311.3 L471.3 312.9 L470.0 314.5 L470.2 318.1 L469.4 321.1 L467.9 322.1" fill="none" stroke="#3a3633" stroke-width="0.6" opacity="0.47"/><path d="M435.3 383.8 L436.1 382.5 L438.4 379.9 L441.7 381.1 L443.9 383.3" fill="none" stroke="#3a3633" stroke-width="0.6" opacity="0.46"/><path d="M460.7 411.4 L462.9 410.9 L465.6 412.8 L468.1 414.7 L470.9 415.2" fill="none" stroke="#3a3633" stroke-width="0.6" opacity="0.48"/><path d="M526.3 357.8 L524.6 361.1 L520.7 361.5 L520.0 363.4 L516.8 363.4 L514.4 364.1 L511.2 362.0" fill="none" stroke="#3a3633" stroke-width="0.6" opacity="0.56"/><path d="M534.3 392.6 L533.6 396.4 L534.9 400.0 L535.0 401.7 L537.6 403.0 L536.5 405.2 L534.0 405.8 L533.0 404.4" fill="none" stroke="#3a3633" stroke-width="0.6" opacity="0.52"/><path d="M515.6 326.9 L513.3 328.9 L513.2 330.4 L515.8 330.8" fill="none" stroke="#3a3633" stroke-width="0.6" opacity="0.70"/><path d="M466.8 388.9 L467.5 392.8 L467.3 394.4 L464.0 396.1 L463.0 397.6" fill="none" stroke="#3a3633" stroke-width="0.6" opacity="0.38"/><path d="M370.8 327.2 L368.4 327.3 L366.2 325.1 L363.3 323.7" fill="none" stroke="#3a3633" stroke-width="0.6" opacity="0.45"/><path d="M533.2 358.9 L535.9 358.2 L538.0 358.4 L539.5 358.3 L540.3 361.1 L538.7 361.5 L535.4 361.2 L533.9 362.0" fill="none" stroke="#3a3633" stroke-width="0.6" opacity="0.37"/><path d="M538.6 395.7 L541.3 396.6 L543.7 398.2 L545.1 400.9 L547.9 402.7 L551.1 402.0" fill="none" stroke="#3a3633" stroke-width="0.6" opacity="0.64"/><path d="M487.7 312.7 L488.5 310.5 L489.4 308.5 L488.3 305.8 L484.8 306.0 L484.6 304.2 L485.3 301.8" fill="none" stroke="#3a3633" stroke-width="0.6" opacity="0.74"/><path d="M551.0 324.5 L553.1 326.5 L556.8 325.6 L558.3 324.4 L557.8 321.1 L559.6 320.4 L558.6 317.1 L555.1 315.4" fill="none" stroke="#3a3633" stroke-width="0.6" opacity="0.52"/><path d="M446.9 318.7 L444.9 315.8 L442.2 317.4 L444.0 320.5 L441.7 322.7 L441.0 324.7 L441.3 328.4" fill="none" stroke="#3a3633" stroke-width="0.6" opacity="0.47"/><path d="M491.1 346.5 L489.3 345.6 L488.4 342.6 L485.2 340.3 L482.4 341.0" fill="none" stroke="#3a3633" stroke-width="0.6" opacity="0.37"/><path d="M470.1 408.0 L468.9 407.1 L469.6 405.0 L468.9 402.1 L470.8 401.4 L470.0 398.0" fill="none" stroke="#3a3633" stroke-width="0.6" opacity="0.68"/><path d="M478.5 333.4 L475.7 331.0 L477.1 329.3 L475.9 328.1 L476.9 326.9 L478.5 327.7 L479.2 329.4" fill="none" stroke="#3a3633" stroke-width="0.6" opacity="0.38"/><path d="M470.2 329.9 L466.3 329.1 L465.7 331.1 L462.7 332.2 L463.4 334.9 L465.7 336.0 L466.8 334.9" fill="none" stroke="#3a3633" stroke-width="0.6" opacity="0.75"/><path d="M434.2 416.3 L432.4 418.5 L434.0 419.8 L436.1 422.0 L438.5 425.2 L440.3 428.3 L438.9 429.3" fill="none" stroke="#3a3633" stroke-width="0.6" opacity="0.74"/><path d="M483.5 359.5 L482.0 358.7 L480.4 360.9 L479.4 363.7" fill="none" stroke="#3a3633" stroke-width="0.6" opacity="0.46"/><path d="M563.8 348.9 L561.5 348.2 L557.5 348.3 L556.0 346.8 L553.5 345.4 L551.6 345.2 L549.6 342.1 L550.9 338.6" fill="none" stroke="#3a3633" stroke-width="0.6" opacity="0.59"/><path d="M484.4 389.7 L487.6 392.2 L487.1 395.3 L490.0 396.4 L491.4 393.5 L491.9 390.6 L493.7 388.7 L496.2 388.0" fill="none" stroke="#3a3633" stroke-width="0.6" opacity="0.56"/><path d="M401.7 354.1 L397.7 353.7 L395.5 355.7 L393.0 355.6 L391.1 354.0 L389.0 351.8" fill="none" stroke="#3a3633" stroke-width="0.6" opacity="0.60"/><path d="M508.7 350.3 L503.1 343.3 L496.1 337.0 L491.7 329.5 L487.1 322.1 L484.1 314.2 L481.3 306.3 L478.3 298.5 L473.3 291.2 L466.0 285.0 L461.5 277.6" fill="none" stroke="#2a2624" stroke-width="0.66" opacity="0.8"/><path d="M513.0 350.4 L511.6 343.2 L512.4 335.8 L512.9 328.5 L514.3 321.2 L517.9 314.4 L523.9 308.6 L531.6 304.1 L537.1 298.0 L541.9 291.5 L548.5 286.1" fill="none" stroke="#2a2624" stroke-width="0.81" opacity="0.8"/><path d="M504.0 349.6 L498.4 348.9 L493.1 347.3 L487.9 345.7 L482.5 344.2 L476.9 343.9 L471.2 343.9 L465.8 342.4 L460.8 340.4 L455.7 338.6 L450.5 336.8" fill="none" stroke="#2a2624" stroke-width="0.80" opacity="0.8"/><path d="M510.9 351.2 L515.3 348.6 L519.1 345.4 L522.4 342.0 L525.3 338.3 L527.7 334.5 L528.2 330.3 L527.6 326.1 L527.3 321.9 L525.3 317.9 L522.1 314.4" fill="none" stroke="#2a2624" stroke-width="0.76" opacity="0.8"/><path d="M503.9 354.0 L497.3 351.3 L491.0 348.0 L486.0 343.8 L480.0 340.4 L473.7 337.2 L468.4 333.2 L463.6 328.8 L458.2 324.8 L451.5 322.2 L444.6 319.9" fill="none" stroke="#2a2624" stroke-width="0.58" opacity="0.8"/><path d="M506.5 352.9 L512.4 349.7 L517.9 346.1 L522.9 342.2 L528.2 338.5 L534.8 336.2 L540.5 332.8 L547.3 331.0 L554.4 330.0 L561.4 328.5 L568.5 327.7" fill="none" stroke="#2a2624" stroke-width="0.56" opacity="0.8"/><path d="M506.1 352.2 L493.8 351.4 L482.3 348.1 L471.8 343.3 L459.7 341.3 L447.9 338.8 L436.0 336.5 L424.0 334.4 L413.0 330.3 L401.6 326.6 L390.2 323.1" fill="none" stroke="#2a2624" stroke-width="0.85" opacity="0.8"/><path d="M508.2 353.9 L507.4 346.9 L508.1 339.9 L508.2 332.8 L505.3 326.1 L503.6 319.2 L502.2 312.2 L502.6 305.2 L504.8 298.3 L504.4 291.3 L502.2 284.4" fill="none" stroke="#2a2624" stroke-width="0.44" opacity="0.8"/><path d="M501.4 353.5 L506.1 351.9 L509.8 349.3 L514.0 347.1 L518.6 345.4 L523.2 343.6 L526.8 340.9 L530.8 338.6 L534.7 336.1 L538.7 333.7 L543.6 332.6" fill="none" stroke="#2a2624" stroke-width="0.81" opacity="0.8"/><path d="M505.3 352.1 L509.9 349.6 L515.2 348.4 L520.3 346.6 L524.9 344.2 L529.0 341.4 L532.4 338.0 L536.8 335.4 L541.4 333.0 L545.9 330.5 L550.3 327.9" fill="none" stroke="#2a2624" stroke-width="0.43" opacity="0.8"/><path d="M512.8 354.1 L502.7 347.4 L490.9 342.4 L477.7 340.3 L464.5 338.0 L451.1 336.6 L437.6 335.5 L424.2 334.4 L410.8 332.7 L397.3 331.9 L384.4 329.1" fill="none" stroke="#2a2624" stroke-width="0.50" opacity="0.8"/><path d="M500.8 350.9 L510.9 350.1 L520.9 348.9 L530.9 348.0 L540.7 346.2 L550.1 343.3 L560.0 341.8 L569.6 339.3 L579.5 337.9 L589.6 338.1 L599.7 338.7" fill="none" stroke="#2a2624" stroke-width="0.63" opacity="0.8"/><path d="M514.0 349.3 L522.9 348.6 L531.8 348.5 L540.2 346.3 L549.0 345.8 L557.3 343.3 L565.8 341.3 L573.4 337.9 L582.1 336.3 L590.8 335.0 L599.7 335.1" fill="none" stroke="#2a2624" stroke-width="0.65" opacity="0.8"/><path d="M504.7 350.3 L513.2 344.5 L519.6 337.4 L528.4 332.0 L535.5 325.3 L540.0 317.4 L541.3 308.9 L544.8 300.7 L551.5 293.8 L557.7 286.6 L564.8 279.9" fill="none" stroke="#2a2624" stroke-width="0.53" opacity="0.8"/><path d="M502.5 349.3 L514.0 349.1 L524.9 346.1 L536.3 345.1 L547.5 342.8 L557.9 339.1 L568.6 335.8 L578.6 331.5 L588.9 327.5 L597.5 321.8 L608.0 318.2" fill="none" stroke="#2a2624" stroke-width="0.56" opacity="0.8"/><path d="M512.8 354.9 L517.9 353.0 L521.8 349.9 L525.4 346.7 L529.5 343.7 L532.7 340.2 L536.0 336.7 L537.9 332.7 L539.7 328.7 L542.3 324.9 L544.7 321.0" fill="none" stroke="#2a2624" stroke-width="0.74" opacity="0.8"/><path d="M502.0 354.5 L491.0 349.1 L482.8 341.4 L474.8 333.7 L465.3 326.9 L454.9 320.8 L446.1 313.6 L437.3 306.3 L431.7 297.4 L423.0 290.0 L414.3 282.7" fill="none" stroke="#2a2624" stroke-width="0.83" opacity="0.8"/><path d="M501.4 349.8 L503.2 342.5 L507.5 335.8 L513.9 330.1 L518.7 323.5 L525.8 318.3 L530.4 311.7 L535.5 305.3 L543.1 300.5 L550.0 295.1 L558.7 291.5" fill="none" stroke="#2a2624" stroke-width="0.73" opacity="0.8"/><path d="M507.2 350.5 L499.7 349.4 L492.0 349.6 L484.4 348.7 L476.8 348.6 L469.4 350.2 L462.0 351.6 L455.3 354.4 L448.5 357.1 L441.2 358.7 L433.7 360.0" fill="none" stroke="#2a2624" stroke-width="0.63" opacity="0.8"/><path d="M501.6 352.9 L492.3 355.0 L483.0 356.8 L473.9 359.2 L465.1 362.3 L456.0 364.5 L447.8 368.3 L441.0 373.5 L432.4 376.8 L424.4 380.8 L415.4 383.4" fill="none" stroke="#2a2624" stroke-width="0.84" opacity="0.8"/><path d="M501.5 354.3 L499.6 350.3 L497.8 346.3 L496.0 342.3 L492.9 338.7 L489.7 335.3 L485.5 332.4 L481.4 329.5 L477.3 326.6 L472.9 324.0 L467.9 322.1" fill="none" stroke="#2a2624" stroke-width="0.60" opacity="0.8"/><path d="M503.8 354.2 L499.2 352.1 L495.5 349.2 L490.8 347.3 L487.0 344.4 L483.1 341.5 L480.2 338.2 L477.4 334.7 L475.3 331.0 L472.3 327.6 L470.1 323.9" fill="none" stroke="#2a2624" stroke-width="0.48" opacity="0.8"/><path d="M506.3 352.1 L502.7 350.2 L500.0 347.7 L496.4 345.9 L492.9 343.9 L489.0 342.5 L485.3 340.9 L482.0 338.7 L479.3 336.2 L475.6 334.4 L471.6 333.2" fill="none" stroke="#2a2624" stroke-width="0.70" opacity="0.8"/><path d="M509.9 353.2 L514.1 354.2 L518.5 354.9 L522.5 356.3 L526.6 357.6 L530.1 359.7 L534.2 360.8 L537.8 362.9 L541.5 364.8 L545.3 366.5 L549.6 367.3" fill="none" stroke="#2a2624" stroke-width="0.52" opacity="0.8"/><path d="M502.4 351.1 L508.5 343.8 L512.3 335.7 L514.0 327.2 L514.4 318.6 L518.5 310.5 L526.0 304.0 L535.1 298.8 L544.0 293.4 L553.0 288.1 L563.2 284.2" fill="none" stroke="#2a2624" stroke-width="0.85" opacity="0.8"/><path d="M503.2 352.8 L513.0 349.1 L523.7 347.0 L533.1 342.7 L543.2 339.5 L552.9 335.6 L561.1 330.1 L571.2 326.8 L581.7 324.5 L592.7 323.5 L602.9 320.5" fill="none" stroke="#2a2624" stroke-width="0.81" opacity="0.8"/><path d="M511.9 354.0 L525.7 355.6 L539.3 357.8 L553.1 359.6 L566.0 363.6 L577.5 369.5 L586.7 377.4 L597.2 384.2 L604.3 393.3 L611.1 402.4 L613.9 412.6" fill="none" stroke="#2a2624" stroke-width="0.46" opacity="0.8"/><path d="M504.0 354.0 L516.6 352.7 L528.5 349.4 L540.2 345.9 L550.9 340.8 L561.6 335.7 L573.7 333.1 L586.2 331.6 L598.9 331.5 L611.5 330.7 L624.1 331.8" fill="none" stroke="#2a2624" stroke-width="0.80" opacity="0.8"/><path d="M513.2 351.4 L518.0 341.3 L524.3 331.6 L533.4 323.3 L541.1 314.2 L549.7 305.6 L560.7 298.7 L573.4 293.6 L583.0 285.6 L592.5 277.5 L597.9 267.5" fill="none" stroke="#2a2624" stroke-width="0.46" opacity="0.8"/><path d="M509.7 351.7 L516.7 348.1 L522.7 343.4 L528.0 338.3 L534.7 334.3 L541.9 330.8 L548.3 326.4 L552.8 321.0 L556.1 315.0 L560.5 309.4 L564.6 303.7" fill="none" stroke="#2a2624" stroke-width="0.73" opacity="0.8"/><path d="M510.9 349.2 L516.0 348.1 L520.7 346.2 L524.9 343.7 L529.9 342.4 L534.7 340.7 L539.0 338.3 L544.0 336.9 L549.1 335.8 L554.5 335.8 L559.8 335.4" fill="none" stroke="#2a2624" stroke-width="0.65" opacity="0.8"/><path d="M515.8 350.1 L525.1 351.8 L534.7 351.8 L544.3 351.9 L553.3 349.6 L561.4 345.8 L570.7 344.0 L579.9 342.1 L589.5 341.6 L598.8 339.9 L607.8 337.5" fill="none" stroke="#2a2624" stroke-width="0.45" opacity="0.8"/><path d="M508.2 351.3 L514.5 342.3 L523.7 335.0 L534.1 328.5 L541.4 320.0 L549.8 312.0 L557.6 303.8 L568.6 297.9 L578.7 291.2 L589.8 285.4 L601.5 280.4" fill="none" stroke="#2a2624" stroke-width="0.59" opacity="0.8"/><path d="M514.5 352.0 L514.3 343.4 L517.8 335.2 L517.9 326.7 L520.6 318.3 L524.7 310.3 L529.2 302.4 L533.4 294.4 L539.3 287.1 L547.7 281.3 L557.2 276.5" fill="none" stroke="#2a2624" stroke-width="0.77" opacity="0.8"/><path d="M502.2 354.7 L494.8 353.4 L487.3 353.4 L479.7 353.1 L472.1 352.6 L464.7 353.8 L457.5 355.4 L450.0 356.0 L442.4 356.1 L434.9 357.1 L427.3 357.0" fill="none" stroke="#2a2624" stroke-width="0.55" opacity="0.8"/><path d="M515.7 352.9 L518.7 346.9 L522.8 341.1 L526.2 335.2 L532.0 330.4 L538.6 326.2 L545.9 322.8 L552.4 318.6 L557.4 313.3 L562.8 308.2 L569.5 304.2" fill="none" stroke="#2a2624" stroke-width="0.80" opacity="0.8"/><path d="M508.3 354.3 L504.4 351.3 L501.3 347.8 L497.2 345.0 L492.7 342.6 L487.4 341.4 L481.9 340.8 L476.4 340.5 L471.3 338.8 L467.2 336.1 L462.3 334.1" fill="none" stroke="#2a2624" stroke-width="0.55" opacity="0.8"/><path d="M505.1 351.6 L511.0 350.2 L516.5 348.1 L521.7 345.6 L526.7 342.9 L532.6 341.5 L538.1 339.4 L542.9 336.5 L548.6 334.7 L554.2 332.8 L560.2 331.9" fill="none" stroke="#2a2624" stroke-width="0.72" opacity="0.8"/><path d="M502.4 353.5 L508.5 350.3 L514.7 347.1 L521.3 344.6 L528.5 343.0 L535.2 340.6 L541.6 337.7 L548.8 336.3 L556.1 335.0 L563.0 332.9 L570.2 331.3" fill="none" stroke="#2a2624" stroke-width="0.53" opacity="0.8"/><path d="M513.2 352.4 L516.5 350.2 L520.6 348.8 L524.3 346.9 L527.5 344.6 L529.6 341.6 L531.9 338.8 L534.8 336.2 L538.1 334.0 L541.2 331.6 L544.9 329.8" fill="none" stroke="#2a2624" stroke-width="0.46" opacity="0.8"/><path d="M500 350 Q480 340 485 325 Q492 312 490 305 M505 352 Q470 372 450 380 Q430 386 425 384 M515 345 Q540 330 560 325 Q575 320 583 316 M512 348 Q525 320 530 300" fill="none" stroke="#1f1c1a" stroke-width="1.4"/><circle cx="489" cy="318" r="3" fill="none" stroke="#222" stroke-width="1.2"/><path d="M440 432 Q446 412 468 404 L498 398 Q516 412 542 402 Q570 408 582 432 Z" fill="url(#shirt)"/><path d="M498 398 L512 420 L528 400 Q520 412 512 414 Q504 410 498 398Z" fill="#9c948c" opacity="0.6"/><path d="M468 432 Q466 414 476 400 L490 404 Q483 420 486 432Z" fill="#bdb8b2"/><path d="M562 432 Q568 414 558 398 L546 402 Q554 420 550 432Z" fill="#b2ada7"/><defs><linearGradient id="fsh" x1="0" x2="1"><stop offset="0" stop-color="#c9a690"/><stop offset="0.55" stop-color="#b48c74"/><stop offset="1" stop-color="#6e5444"/></linearGradient></defs><path d="M494 372 Q494 356 512 355 Q530 356 531 372 Q532 392 524 402 Q516 410 508 408 Q498 402 495 390 Z" fill="url(#fsh)"/><path d="M497 392 Q503 408 512 409 Q522 406 527 394 Q520 402 512 402 Q503 401 497 392Z" fill="#4a3a32" opacity="0.75"/><path d="M499 372 Q504 369 509 372 M516 371 Q521 368 526 371" stroke="#3b2a22" stroke-width="1.3" fill="none"/><path d="M500 376 Q504 378 508 376 M517 375 Q521 377 525 375" stroke="#3b2a22" stroke-width="1" fill="none"/><path d="M512 378 Q510 386 508 388 Q512 390 515 388" stroke="#7a5a48" stroke-width="1" fill="none"/><path d="M505 396 Q512 394 519 396" stroke="#3a2620" stroke-width="1.2" fill="none"/><path d="M481.6 368.0 L489.2 365.4 L483.0 361.3 L491.4 360.5 L487.4 355.2 L495.7 356.3 L494.1 350.4 L501.5 353.3 L502.6 347.3 L508.4 351.7 L512.0 346.2 L515.6 351.7 L521.4 347.3 L522.5 353.3 L529.9 350.4 L528.3 356.3 L536.6 355.2 L532.6 360.5 L541.0 361.3 L534.8 365.4 L542.5 368.0 Q520 358 512 358 Q500 358 491 368Z" fill="#2a221e"/><path d="M474 408 Q470 392 478 380 Q486 368 496 366 Q502 366 503 371 Q499 374 497 380 L496 394 Q492 404 486 410Z" fill="#b08a72"/><path d="M481 384 L497 370 M480 390 L498 377" stroke="#8a6a58" stroke-width="0.8"/><path d="M552 410 Q556 394 548 382 Q540 370 530 368 Q525 369 526 374 Q530 377 531 383 L532 396 Q536 406 544 412Z" fill="#9e7a64"/><path d="M545 386 L530 373 M547 392 L531 380" stroke="#7a5a48" stroke-width="0.8"/></g></svg>
<div class="t" style="left:911px;top:329.5px;width:0;height:0;"><div class="t" style="left:-250px;top:-35px;width:500px;height:70px;line-height:70px;text-align:center;direction:rtl;font-size:40px;font-weight:bold;color:#00b050;transform:scale(0.844,1.25)">مفهوم القلق والتوتر</div></div>
<div class="a" style="left:591.5px;top:402px;width:188.5px;height:79.5px;background:#fe3a88;border:1.5px solid #cc2f6e;border-radius:11px"></div>
<div class="t" style="left:703.4px;top:440.5px;width:0;height:0;"><div class="t" style="left:-100px;top:-18px;width:200px;height:36px;line-height:36px;text-align:center;direction:rtl;font-size:26px;font-weight:bold;color:#000;transform:scale(0.857,1.22)">التوتر</div></div>
<div class="a" style="left:998px;top:400.5px;width:187.5px;height:78px;background:#2b9fbc;border-radius:13px"></div>
<div class="t" style="left:1092.2px;top:438.5px;width:0;height:0;"><div class="t" style="left:-100px;top:-18px;width:200px;height:36px;line-height:36px;text-align:center;direction:rtl;font-size:23px;font-weight:bold;color:#000;transform:scale(0.81,1.22)">القلق</div></div>
<div class="a" style="left:651.5px;top:503.5px;width:488.5px;height:58.5px;background:#d91e2a"></div>
<svg style="left:0;top:0" width="10" height="10"><path d="M896 471.8 L918.6 495 H907.4 V504 H884 V495 H873 Z" fill="#d91e2a"/></svg>
<div class="t" style="left:895.8px;top:534.5px;width:0;height:0;"><div class="t" style="left:-150px;top:-18px;width:300px;height:36px;line-height:36px;text-align:center;direction:rtl;font-size:21px;font-weight:bold;color:#000;transform:scale(0.874,1.3)">المرض الخفي</div></div>
<!-- text boxes -->
<div class="a" style="left:592px;top:574.5px;width:289px;height:309px;border:2px solid #e8408c;border-radius:38px;background:linear-gradient(180deg,#fffafc 0%,#fde6ee 18%,#fcc3d6 45%,#ff9dbb 68%,#ff88ad 80%,#ffa9c4 92%,#fcd9e5 100%)"></div>
<div class="a" style="left:898px;top:568px;width:298px;height:317px;border:1.5px solid #3f8ea8;border-radius:38px;box-shadow:0 3px 4px rgba(0,0,0,0.22);background:#c6e9f8;background-image:repeating-linear-gradient(90deg,rgba(255,255,255,0.0) 0px,rgba(255,255,255,0) 5px,rgba(150,200,225,0.35) 5px,rgba(150,200,225,0.35) 6px)"></div>
<div id="pinktext"></div>
<div class="ar" style="left:443.7px;top:582.4px;width:400px;font-size:19px;word-spacing:2.35px">•التوتر هو رد فعل فسيولوجي</div>
<div class="ar" style="left:434.7px;top:610.4px;width:400px;font-size:19px;word-spacing:4.30px">ونفسي ناتج عن التعامل مع</div>
<div class="ar" style="left:434.7px;top:636.3px;width:400px;font-size:20px;word-spacing:4.07px">ضغوط أو متطلبات تتجاوز</div>
<div class="ar" style="left:434.7px;top:663.2px;width:400px;font-size:20px;word-spacing:2.30px">قدرة الفرد على التكيف أو</div>
<div class="ar" style="left:434.7px;top:690.1px;width:400px;font-size:19px">التحمل.</div>
<div class="ar" style="left:443.7px;top:745.8px;width:400px;font-size:20px;word-spacing:14.07px">•يظهر التوتر عادة نتيجة</div>
<div class="ar" style="left:434.7px;top:772.7px;width:400px;font-size:19px;word-spacing:5.73px">مواقف مفاجئة أو مستمرة،</div>
<div class="ar" style="left:434.7px;top:799.6px;width:400px;font-size:20px;word-spacing:4.30px">وقد يؤثر على صحة الفرد</div>
<div class="ar" style="left:434.7px;top:826.6px;width:400px;font-size:19px;word-spacing:6.20px">وعلاقاته وأدائه.</div>
<!--/pt-->
<div id="bluetext"></div>
<div class="ar" style="left:770.8px;top:579.5px;width:400px;font-size:18px;word-spacing:3.56px">•تأثير داخلي يخلق حالة من عدم</div>
<div class="ar" style="left:761.9px;top:605.7px;width:400px;font-size:20px;word-spacing:3.63px">التوازن النفسي أو الجسمي</div>
<div class="ar" style="left:761.9px;top:632.7px;width:400px;font-size:18px;word-spacing:3.73px">داخل الإنسان وينجم عن تفاعل</div>
<div class="ar" style="left:761.9px;top:659.6px;width:400px;font-size:19px;word-spacing:4.23px">عوامل خارجية تنشأ من البيئة</div>
<div class="ar" style="left:761.9px;top:686.5px;width:400px;font-size:19px;word-spacing:1.73px">المحيطة أو عوامل داخلية.</div>
<div class="ar" style="left:770.8px;top:742.2px;width:400px;font-size:20px;word-spacing:15.27px">•يُعتبر القلق أحيانًا <u class='rd'>طبيعيًا</u></div>
<div class="ar" style="left:761.9px;top:769.1px;width:400px;font-size:20px;word-spacing:3.98px"><u class='rd'>ومفيدًا </u> إذا كان يساعد على</div>
<div class="ar" style="left:761.9px;top:796.1px;width:400px;font-size:20px;word-spacing:24.95px">التحفيز واتخاذ إجراءات</div>
<div class="ar" style="left:761.9px;top:823.0px;width:400px;font-size:20px;word-spacing:17.97px">إيجابية، ولكنه قد يصبح</div>
<div class="ar" style="left:761.9px;top:849.9px;width:400px;font-size:19px;word-spacing:-0.70px">مشكلة إذا تجاوز <u class='rd'>حده الطبيعي</u></div>
<!--/bt-->
<!-- curved arrows -->
<svg style="left:0;top:0" width="10" height="10">
 <defs>
  <linearGradient id="ag" x1="0" y1="0" x2="0" y2="1"><stop offset="0" stop-color="#c9c9c9"/><stop offset="0.47" stop-color="#cdcdcd"/><stop offset="0.53" stop-color="#ffffff"/><stop offset="1" stop-color="#ffffff"/></linearGradient>
 </defs>
 <path d="M1188 448 C1232 451 1261 515 1259 588 C1257 645 1238 690 1210 721 L1206 727.6 L1195.5 710.6 L1206.6 693.2 L1208 700 C1234 678 1254 635 1256 588 C1257 520 1228 470 1188 466.6 Z" fill="url(#ag)" stroke="#ee7f45" stroke-width="1.1"/>
 <path d="M580 448 C536 451 508 512 508 575 C508 632 530 673 565 690 L562 679 L579 700.8 L562 713.8 L564 706 C528 690 511 640 511 575 C511 515 540 470 580 466.6 Z" fill="url(#ag)" stroke="#ee7f45" stroke-width="1.1"/>
</svg>
<!-- cursor -->
<svg style="left:0;top:0" width="10" height="10"><path d="M1360.5 427.5 V444 L1364 440.5 L1367 447 L1369.5 446 L1366.5 439.5 L1371.5 439.5 Z" fill="#fff" stroke="#000" stroke-width="1"/></svg>

<!-- THUMBS -->
<div class="a" style="left:24px;top:246px;width:202px;height:665px;overflow:hidden"><div class="t" style="left:13.0px;top:18.3px;font-size:19px;color:#4a4a4a">1</div><div class="t" style="left:13.0px;top:120.1px;font-size:19px;color:#4a4a4a">2</div><div class="t" style="left:13.0px;top:223.3px;font-size:19px;color:#d9694a">3</div><svg style="left:10px;top:244px" width="14" height="11" viewBox="0 0 18 14"><path d="M11 0.5 L12.7 4.6 L17 4.9 L13.7 7.7 L14.8 12 L11 9.6 L7.2 12 L8.3 7.7 L5 4.9 L9.3 4.6Z" fill="#555"/><path d="M0 4 H4 M1 7 H5 M0 10 H4" stroke="#777" stroke-width="1"/></svg><div class="t" style="left:13.0px;top:324.9px;font-size:19px;color:#4a4a4a">4</div><svg style="left:10px;top:345.6px" width="14" height="11" viewBox="0 0 18 14"><path d="M11 0.5 L12.7 4.6 L17 4.9 L13.7 7.7 L14.8 12 L11 9.6 L7.2 12 L8.3 7.7 L5 4.9 L9.3 4.6Z" fill="#555"/><path d="M0 4 H4 M1 7 H5 M0 10 H4" stroke="#777" stroke-width="1"/></svg><div class="t" style="left:13.0px;top:426.9px;font-size:19px;color:#4a4a4a">5</div><svg style="left:10px;top:447.6px" width="14" height="11" viewBox="0 0 18 14"><path d="M11 0.5 L12.7 4.6 L17 4.9 L13.7 7.7 L14.8 12 L11 9.6 L7.2 12 L8.3 7.7 L5 4.9 L9.3 4.6Z" fill="#555"/><path d="M0 4 H4 M1 7 H5 M0 10 H4" stroke="#777" stroke-width="1"/></svg><div class="t" style="left:13.0px;top:530.0px;font-size:19px;color:#4a4a4a">6</div><svg style="left:10px;top:550.7px" width="14" height="11" viewBox="0 0 18 14"><path d="M11 0.5 L12.7 4.6 L17 4.9 L13.7 7.7 L14.8 12 L11 9.6 L7.2 12 L8.3 7.7 L5 4.9 L9.3 4.6Z" fill="#555"/><path d="M0 4 H4 M1 7 H5 M0 10 H4" stroke="#777" stroke-width="1"/></svg><div class="t" style="left:13.0px;top:632.3px;font-size:19px;color:#4a4a4a">7</div><svg style="left:10px;top:653px" width="14" height="11" viewBox="0 0 18 14"><path d="M11 0.5 L12.7 4.6 L17 4.9 L13.7 7.7 L14.8 12 L11 9.6 L7.2 12 L8.3 7.7 L5 4.9 L9.3 4.6Z" fill="#555"/><path d="M0 4 H4 M1 7 H5 M0 10 H4" stroke="#777" stroke-width="1"/></svg><div class="a" style="left:40.7px;top:22.0px;width:139.3px;height:79.0px;background:#fff;border:1px solid #d6d6d6"></div><div class="a" style="left:42.5px;top:23.5px;width:136.5px;height:76.5px;border:1.6px solid #333;border-radius:6px;background:#f7f7f7"></div><div class="a" style="left:43.5px;top:39.0px;width:134.5px;height:18.0px;background:#2aa0bd"></div><div class="a" style="left:56.0px;top:42.5px;width:110.0px;height:2.2px;background:rgba(20,40,60,0.45)"></div><div class="a" style="left:88.0px;top:49.5px;width:42.0px;height:2.2px;background:rgba(20,40,60,0.45)"></div><div class="a" style="left:98.0px;top:64.0px;width:22.0px;height:1.6px;background:#b5b5b5"></div><div class="a" style="left:92.0px;top:69.2px;width:34.0px;height:1.6px;background:#b5b5b5"></div><div class="a" style="left:96.0px;top:74.4px;width:26.0px;height:1.6px;background:#b5b5b5"></div><div class="a" style="left:100.0px;top:79.6px;width:18.0px;height:1.6px;background:#b5b5b5"></div><div class="a" style="left:94.0px;top:84.8px;width:30.0px;height:1.6px;background:#b5b5b5"></div><div class="a" style="left:40.7px;top:123.8px;width:139.3px;height:79.0px;background:#d5dfee;border:1px solid #d0d6de"></div><div class="t" style="left:76.0px;top:125.3px;width:66px;text-align:center;direction:rtl;font-size:6px;font-weight:bold;color:#00b050">مقدمة</div><div class="a" style="left:86.0px;top:133.8px;width:80.0px;height:1.6px;background:#9a9aa0"></div><div class="a" style="left:48.0px;top:139.4px;width:118.0px;height:1.6px;background:#9a9aa0"></div><div class="a" style="left:48.0px;top:145.0px;width:108.0px;height:1.6px;background:#9a9aa0"></div><div class="a" style="left:48.0px;top:150.6px;width:118.0px;height:1.6px;background:#9a9aa0"></div><div class="a" style="left:148.0px;top:156.2px;width:8.0px;height:1.6px;background:#9a9aa0"></div><svg style="left:46px;top:162.60000000000002px" width="54" height="36"><defs><linearGradient id="tg2" x1="0" x2="1"><stop offset="0" stop-color="#d8d2cc"/><stop offset="1" stop-color="#e8e8ea"/></linearGradient></defs><rect width="54" height="36" fill="url(#tg2)"/><ellipse cx="25" cy="16" rx="6" ry="7" fill="#5a4a40"/><path d="M12 36 Q16 22 25 22 Q36 22 38 36Z" fill="#6e7076"/><rect x="2" y="6" width="9" height="4" fill="#fff"/><rect x="40" y="24" width="12" height="10" fill="#f4f4f4"/><path d="M42 8 Q50 10 54 4" stroke="#c9a38a" stroke-width="2" fill="none"/></svg><div class="a" style="left:38.7px;top:224.1px;width:143.0px;height:82.8px;background:#e8693f"></div><div class="a" style="left:41.5px;top:227.0px;width:137.5px;height:77.2px;overflow:hidden;background:#d5dfee"><!--MINI--><div class="a" style="left:0;top:0;width:1089px;height:613px;transform-origin:0 0;transform:scale(0.12626) translate(-335.5px,-283.5px)">
<svg style="left:0;top:0" width="10" height="10" ><defs><radialGradient id="mpbg" cx="0.52" cy="0.45" r="0.62"><stop offset="0" stop-color="#d2cec9"/><stop offset="0.5" stop-color="#bdb8b3"/><stop offset="1" stop-color="#77726e"/></radialGradient><clipPath id="mpclip"><rect x="341.5" y="289" width="246.5" height="142.5"/></clipPath><radialGradient id="mskin" cx="0.5" cy="0.4" r="0.6"><stop offset="0" stop-color="#c9a28a"/><stop offset="1" stop-color="#8f6f5c"/></radialGradient><linearGradient id="mshirt" x1="0" y1="0" x2="0" y2="1"><stop offset="0" stop-color="#c2bdb7"/><stop offset="1" stop-color="#d6d1cc"/></linearGradient></defs><g clip-path="url(#mpclip)"><rect x="341.5" y="289" width="246.5" height="142.5" fill="url(#mpbg)"/><path d="M465.9 364.4 L466.6 362.8 L469.0 359.9 L468.5 358.2" fill="none" stroke="#3a3633" stroke-width="0.6" opacity="0.49"/><path d="M484.1 393.0 L485.5 391.5 L489.0 389.9 L491.4 389.5 L491.8 391.0 L490.0 392.4 L490.4 394.1 L493.0 396.5" fill="none" stroke="#3a3633" stroke-width="0.6" opacity="0.38"/><path d="M411.6 318.4 L408.7 318.8 L406.1 318.1 L402.8 316.8 L399.1 315.9 L397.1 316.3 L395.9 319.5 L397.7 320.8" fill="none" stroke="#3a3633" stroke-width="0.6" opacity="0.52"/><path d="M446.7 379.5 L444.5 380.8 L442.7 380.3 L441.2 379.9" fill="none" stroke="#3a3633" stroke-width="0.6" opacity="0.60"/><path d="M486.6 295.6 L487.2 293.3 L488.1 290.0 L486.6 289.2 L483.5 290.1 L483.8 293.4" fill="none" stroke="#3a3633" stroke-width="0.6" opacity="0.44"/><path d="M406.6 318.0 L405.1 316.1 L406.7 314.3 L409.2 313.1 L409.6 310.9 L411.6 309.5 L413.7 311.3" fill="none" stroke="#3a3633" stroke-width="0.6" opacity="0.37"/><path d="M443.8 362.8 L442.9 364.7 L442.4 367.1 L438.6 367.7 L438.0 369.6 L439.1 371.3 L440.8 373.8" fill="none" stroke="#3a3633" stroke-width="0.6" opacity="0.42"/><path d="M537.3 346.0 L537.0 347.8 L533.2 348.8 L530.0 348.0 L526.3 347.6 L526.3 344.4 L526.7 341.9 L526.2 339.3" fill="none" stroke="#3a3633" stroke-width="0.6" opacity="0.48"/><path d="M455.3 351.7 L454.2 353.2 L455.7 355.1 L458.7 353.0" fill="none" stroke="#3a3633" stroke-width="0.6" opacity="0.58"/><path d="M505.0 368.3 L504.1 369.8 L502.2 373.3 L501.2 375.4 L503.4 377.9 L503.3 380.6" fill="none" stroke="#3a3633" stroke-width="0.6" opacity="0.61"/><path d="M442.9 342.4 L443.3 339.5 L440.5 339.0 L441.1 335.4 L442.6 333.8 L443.3 332.0" fill="none" stroke="#3a3633" stroke-width="0.6" opacity="0.65"/><path d="M386.4 331.6 L383.8 333.8 L381.8 333.6 L379.9 335.2 L378.0 334.7" fill="none" stroke="#3a3633" stroke-width="0.6" opacity="0.52"/><path d="M495.5 303.4 L493.2 304.6 L490.8 301.4 L492.6 299.7 L492.4 297.7 L490.7 296.7 L488.4 293.7 L489.6 291.2" fill="none" stroke="#3a3633" stroke-width="0.6" opacity="0.59"/><path d="M487.1 329.8 L488.2 326.6 L488.8 324.7 L490.9 323.9 L494.2 326.0 L496.6 326.7 L496.2 330.0" fill="none" stroke="#3a3633" stroke-width="0.6" opacity="0.38"/><path d="M502.0 360.6 L504.9 359.9 L508.5 358.6 L508.9 355.8 L505.5 355.2" fill="none" stroke="#3a3633" stroke-width="0.6" opacity="0.63"/><path d="M553.1 383.0 L552.4 385.0 L553.4 387.0 L556.2 387.8 L558.5 386.7" fill="none" stroke="#3a3633" stroke-width="0.6" opacity="0.36"/><path d="M523.4 326.0 L521.3 324.1 L522.2 320.5 L520.6 319.4 L517.7 317.2 L517.5 314.2 L518.9 312.9 L518.0 310.0" fill="none" stroke="#3a3633" stroke-width="0.6" opacity="0.35"/><path d="M557.1 366.8 L556.3 365.2 L555.7 363.2 L552.9 361.3 L550.5 359.6 L550.0 355.9 L549.0 353.0" fill="none" stroke="#3a3633" stroke-width="0.6" opacity="0.53"/><path d="M395.8 340.5 L393.6 338.8 L390.8 339.1 L389.0 335.8 L391.9 333.3 L391.6 330.7 L390.8 328.4 L388.2 326.5" fill="none" stroke="#3a3633" stroke-width="0.6" opacity="0.49"/><path d="M490.9 376.4 L489.1 378.9 L488.7 381.0 L490.9 382.5 L491.3 384.2" fill="none" stroke="#3a3633" stroke-width="0.6" opacity="0.70"/><path d="M522.5 393.2 L520.1 393.5 L517.9 394.5 L518.2 396.9 L519.8 399.0 L519.8 401.4 L519.7 403.7" fill="none" stroke="#3a3633" stroke-width="0.6" opacity="0.73"/><path d="M573.5 400.4 L575.7 400.6 L576.0 402.6 L573.8 405.4" fill="none" stroke="#3a3633" stroke-width="0.6" opacity="0.68"/><path d="M423.4 371.3 L422.1 370.1 L419.6 372.1 L418.6 373.5 L415.8 372.0 L415.6 370.3 L417.0 369.5" fill="none" stroke="#3a3633" stroke-width="0.6" opacity="0.69"/><path d="M432.0 354.9 L430.8 353.8 L430.2 350.1 L432.2 349.5 L433.4 345.9 L435.2 343.7" fill="none" stroke="#3a3633" stroke-width="0.6" opacity="0.39"/><path d="M402.6 364.0 L401.0 363.8 L400.6 366.5 L397.8 366.1" fill="none" stroke="#3a3633" stroke-width="0.6" opacity="0.41"/><path d="M403.8 363.2 L402.1 359.9 L404.0 358.7 L404.3 356.6 L401.5 354.2 L401.3 352.4 L405.2 351.9" fill="none" stroke="#3a3633" stroke-width="0.6" opacity="0.68"/><path d="M556.8 349.8 L556.3 348.1 L559.0 345.6 L561.2 345.2 L562.4 343.3 L563.1 341.6 L563.7 339.5" fill="none" stroke="#3a3633" stroke-width="0.6" opacity="0.73"/><path d="M548.2 336.8 L549.8 338.0 L551.5 338.2 L554.1 336.4 L554.6 333.0 L551.4 331.5" fill="none" stroke="#3a3633" stroke-width="0.6" opacity="0.36"/><path d="M432.9 325.3 L436.3 327.3 L436.0 329.2 L432.7 329.9 L429.3 329.5" fill="none" stroke="#3a3633" stroke-width="0.6" opacity="0.62"/><path d="M435.1 346.1 L432.3 348.5 L429.7 346.9 L428.7 343.5 L425.9 343.1" fill="none" stroke="#3a3633" stroke-width="0.6" opacity="0.53"/><path d="M513.6 300.4 L513.0 298.9 L513.0 295.0 L512.0 292.6 L510.5 293.0" fill="none" stroke="#3a3633" stroke-width="0.6" opacity="0.54"/><path d="M481.5 374.7 L479.1 373.3 L476.6 371.5 L474.1 373.8" fill="none" stroke="#3a3633" stroke-width="0.6" opacity="0.41"/><path d="M518.6 358.5 L516.0 356.8 L512.7 355.2 L510.4 358.1 L510.4 359.8" fill="none" stroke="#3a3633" stroke-width="0.6" opacity="0.58"/><path d="M503.8 393.7 L502.3 394.9 L500.3 396.7 L499.1 395.4 L496.3 395.7 L494.5 394.6" fill="none" stroke="#3a3633" stroke-width="0.6" opacity="0.51"/><path d="M434.7 335.0 L436.1 332.8 L440.0 332.9 L442.2 332.6 L444.0 329.2 L442.8 326.5 L440.0 326.5" fill="none" stroke="#3a3633" stroke-width="0.6" opacity="0.73"/><path d="M548.5 397.1 L546.9 395.8 L548.0 393.3 L546.7 392.6" fill="none" stroke="#3a3633" stroke-width="0.6" opacity="0.52"/><path d="M435.6 354.8 L437.2 355.7 L439.5 355.5 L441.6 354.2 L442.9 355.7 L445.4 353.4" fill="none" stroke="#3a3633" stroke-width="0.6" opacity="0.41"/><path d="M530.2 360.0 L531.0 357.6 L530.3 356.1 L526.8 356.5" fill="none" stroke="#3a3633" stroke-width="0.6" opacity="0.43"/><path d="M518.3 333.7 L519.9 336.7 L518.9 339.0 L521.9 340.6 L525.5 341.2 L527.4 341.9 L529.5 338.7 L530.3 335.7" fill="none" stroke="#3a3633" stroke-width="0.6" opacity="0.36"/><path d="M523.3 313.0 L522.8 310.3 L521.4 308.6 L521.7 304.6 L519.8 302.2 L517.0 301.5 L515.1 301.6 L514.3 303.5" fill="none" stroke="#3a3633" stroke-width="0.6" opacity="0.71"/><path d="M441.2 345.5 L443.2 343.4 L443.1 341.5 L443.3 339.2 L442.2 335.8 L440.7 335.4 L440.6 332.9" fill="none" stroke="#3a3633" stroke-width="0.6" opacity="0.64"/><path d="M490.9 374.2 L488.3 371.2 L485.7 372.1 L482.1 371.8 L480.6 373.4 L480.7 375.9 L481.6 379.6" fill="none" stroke="#3a3633" stroke-width="0.6" opacity="0.68"/><path d="M488.1 339.3 L487.7 342.0 L491.3 343.2 L490.9 346.0 L490.9 348.7 L489.2 349.9 L489.9 353.7" fill="none" stroke="#3a3633" stroke-width="0.6" opacity="0.35"/><path d="M519.0 292.5 L516.7 289.9 L515.4 291.1 L514.0 291.9 L510.2 291.3 L507.8 289.7 L504.6 288.5" fill="none" stroke="#3a3633" stroke-width="0.6" opacity="0.34"/><path d="M495.3 372.6 L493.1 372.0 L489.3 371.5 L486.2 369.4" fill="none" stroke="#3a3633" stroke-width="0.6" opacity="0.51"/><path d="M484.0 373.5 L483.8 371.5 L486.6 370.2 L486.2 368.2 L485.1 366.0 L483.6 363.1" fill="none" stroke="#3a3633" stroke-width="0.6" opacity="0.62"/><path d="M444.2 374.1 L446.1 376.1 L450.0 375.5 L452.6 373.1 L452.5 371.1 L454.1 369.5" fill="none" stroke="#3a3633" stroke-width="0.6" opacity="0.73"/><path d="M444.6 345.7 L443.1 346.3 L439.3 346.8 L439.3 348.3 L438.5 350.7 L436.8 351.8 L434.4 354.0" fill="none" stroke="#3a3633" stroke-width="0.6" opacity="0.44"/><path d="M496.9 355.1 L500.8 355.2 L501.9 356.4 L502.4 358.8 L503.8 360.7" fill="none" stroke="#3a3633" stroke-width="0.6" opacity="0.38"/><path d="M524.6 345.6 L522.0 347.8 L520.6 350.9 L521.1 354.4" fill="none" stroke="#3a3633" stroke-width="0.6" opacity="0.34"/><path d="M469.9 320.9 L468.1 322.5 L466.8 321.7 L463.4 320.8 L462.7 319.3 L461.1 319.9 L459.9 318.1" fill="none" stroke="#3a3633" stroke-width="0.6" opacity="0.64"/><path d="M520.2 324.4 L523.5 325.3 L526.0 328.1 L529.2 328.8 L532.3 330.5 L531.7 332.1 L529.9 332.4 L527.6 331.0" fill="none" stroke="#3a3633" stroke-width="0.6" opacity="0.65"/><path d="M491.6 326.4 L489.7 323.7 L491.0 320.5 L492.6 318.8" fill="none" stroke="#3a3633" stroke-width="0.6" opacity="0.44"/><path d="M417.9 395.6 L419.8 395.9 L422.9 395.5 L425.7 394.9 L426.4 392.4" fill="none" stroke="#3a3633" stroke-width="0.6" opacity="0.35"/><path d="M549.2 368.3 L550.1 371.5 L551.0 373.4 L552.9 375.7 L553.4 379.0 L550.8 380.8 L551.7 384.3" fill="none" stroke="#3a3633" stroke-width="0.6" opacity="0.43"/><path d="M431.5 330.0 L431.0 328.1 L429.0 327.2 L429.4 325.2 L427.4 324.5" fill="none" stroke="#3a3633" stroke-width="0.6" opacity="0.41"/><path d="M401.4 335.9 L400.4 337.4 L398.5 340.4 L394.8 340.1 L394.4 342.3 L396.1 343.3 L394.8 345.9" fill="none" stroke="#3a3633" stroke-width="0.6" opacity="0.72"/><path d="M403.4 399.8 L400.7 398.1 L399.1 400.8 L396.8 401.6 L397.4 403.9 L401.4 403.3" fill="none" stroke="#3a3633" stroke-width="0.6" opacity="0.32"/><path d="M435.4 364.8 L432.0 365.5 L430.3 365.5 L429.7 367.9" fill="none" stroke="#3a3633" stroke-width="0.6" opacity="0.55"/><path d="M464.6 332.3 L466.2 333.7 L470.1 334.2 L472.7 332.9 L474.2 330.8 L478.0 331.8" fill="none" stroke="#3a3633" stroke-width="0.6" opacity="0.46"/><path d="M508.9 403.0 L509.8 404.6 L511.5 404.3 L513.9 404.5" fill="none" stroke="#3a3633" stroke-width="0.6" opacity="0.65"/><path d="M492.3 354.0 L495.1 352.8 L496.9 350.7 L496.1 348.7 L494.8 345.1 L492.1 345.1 L489.9 341.9" fill="none" stroke="#3a3633" stroke-width="0.6" opacity="0.39"/><path d="M572.1 410.0 L574.4 407.9 L576.0 407.4 L579.0 408.6 L578.8 411.7 L576.0 412.8 L574.0 412.8" fill="none" stroke="#3a3633" stroke-width="0.6" opacity="0.51"/><path d="M465.3 340.6 L466.6 339.3 L466.6 336.0 L468.1 335.5 L471.5 335.2" fill="none" stroke="#3a3633" stroke-width="0.6" opacity="0.32"/><path d="M494.5 328.8 L495.1 325.4 L496.4 323.6 L496.1 321.2 L494.6 318.9 L493.0 318.9 L492.9 316.3 L492.2 313.3" fill="none" stroke="#3a3633" stroke-width="0.6" opacity="0.67"/><path d="M463.4 353.3 L464.9 355.4 L465.8 356.7 L466.1 358.4 L464.1 361.3 L463.2 362.6" fill="none" stroke="#3a3633" stroke-width="0.6" opacity="0.53"/><path d="M382.8 409.8 L380.3 411.9 L378.4 411.3 L379.1 408.7" fill="none" stroke="#3a3633" stroke-width="0.6" opacity="0.73"/><path d="M508.5 333.5 L506.4 332.5 L505.8 330.7 L507.5 329.4 L509.3 330.1" fill="none" stroke="#3a3633" stroke-width="0.6" opacity="0.53"/><path d="M512.9 332.5 L514.6 334.2 L517.1 333.9 L519.2 334.5 L521.5 333.8 L523.2 335.2 L523.3 336.8 L519.8 338.6" fill="none" stroke="#3a3633" stroke-width="0.6" opacity="0.50"/><path d="M396.7 337.2 L398.6 339.7 L401.5 341.6 L405.4 340.9 L407.8 341.1 L409.4 343.2" fill="none" stroke="#3a3633" stroke-width="0.6" opacity="0.38"/><path d="M479.3 333.1 L478.6 329.2 L481.9 327.2 L484.4 329.4 L484.6 331.4 L486.6 333.7" fill="none" stroke="#3a3633" stroke-width="0.6" opacity="0.49"/><path d="M468.7 354.0 L467.3 353.3 L466.3 355.5 L468.2 357.1 L471.1 356.6 L473.1 356.8 L475.4 358.1 L478.5 355.7" fill="none" stroke="#3a3633" stroke-width="0.6" opacity="0.41"/><path d="M494.6 358.8 L492.8 357.6 L491.1 360.2 L489.5 362.0 L487.0 362.8 L485.4 359.9" fill="none" stroke="#3a3633" stroke-width="0.6" opacity="0.41"/><path d="M493.6 338.5 L492.2 339.9 L490.7 339.0 L488.7 336.6 L486.2 336.9 L483.1 337.0 L480.8 335.9" fill="none" stroke="#3a3633" stroke-width="0.6" opacity="0.58"/><path d="M460.1 344.3 L459.9 342.7 L462.8 341.0 L465.4 338.9 L466.8 337.4 L465.8 335.6 L463.7 336.5" fill="none" stroke="#3a3633" stroke-width="0.6" opacity="0.64"/><path d="M469.7 316.0 L467.4 312.9 L469.1 311.5 L472.1 313.8 L474.3 312.1 L473.7 308.4 L475.4 307.2" fill="none" stroke="#3a3633" stroke-width="0.6" opacity="0.37"/><path d="M510.9 332.4 L510.8 336.1 L509.3 339.0 L506.1 341.2 L503.3 343.5 L499.6 343.7 L496.4 344.5 L494.2 344.6" fill="none" stroke="#3a3633" stroke-width="0.6" opacity="0.40"/><path d="M464.1 334.3 L463.3 332.8 L463.1 330.9 L466.3 330.4 L466.2 328.6" fill="none" stroke="#3a3633" stroke-width="0.6" opacity="0.59"/><path d="M499.9 348.8 L500.7 350.6 L498.3 352.1 L494.6 352.2 L492.3 349.9 L490.4 349.0 L489.0 349.8 L486.7 346.8" fill="none" stroke="#3a3633" stroke-width="0.6" opacity="0.64"/><path d="M558.3 378.1 L556.7 378.9 L554.8 378.1 L552.3 378.7 L552.7 380.8 L555.2 382.9 L557.4 383.6" fill="none" stroke="#3a3633" stroke-width="0.6" opacity="0.73"/><path d="M372.6 343.3 L372.8 341.7 L373.1 340.0 L373.2 338.3" fill="none" stroke="#3a3633" stroke-width="0.6" opacity="0.55"/><path d="M439.6 330.9 L438.9 334.2 L437.4 334.0 L434.7 333.6 L433.8 331.8 L432.7 329.7 L433.8 327.9 L435.9 328.8" fill="none" stroke="#3a3633" stroke-width="0.6" opacity="0.40"/><path d="M459.8 302.6 L463.0 305.0 L464.1 306.4 L465.8 306.9" fill="none" stroke="#3a3633" stroke-width="0.6" opacity="0.72"/><path d="M550.7 305.5 L549.3 307.3 L548.1 309.9 L550.4 313.1" fill="none" stroke="#3a3633" stroke-width="0.6" opacity="0.58"/><path d="M506.9 338.2 L505.7 336.1 L504.1 335.2 L504.2 332.0 L505.6 330.7 L507.5 327.9 L508.9 326.7 L511.4 324.0" fill="none" stroke="#3a3633" stroke-width="0.6" opacity="0.41"/><path d="M496.7 375.0 L494.9 374.7 L493.0 376.1 L491.4 377.1 L490.5 378.9 L487.5 377.6 L485.0 380.6 L486.3 382.6" fill="none" stroke="#3a3633" stroke-width="0.6" opacity="0.74"/><path d="M446.6 355.0 L443.0 354.4 L441.5 354.3 L440.5 351.9" fill="none" stroke="#3a3633" stroke-width="0.6" opacity="0.40"/><path d="M525.8 341.2 L528.0 342.3 L529.2 345.9 L530.8 348.4 L530.1 350.9 L532.1 353.5" fill="none" stroke="#3a3633" stroke-width="0.6" opacity="0.70"/><path d="M529.8 299.1 L528.1 297.8 L527.2 294.2 L525.0 293.0 L524.2 291.3 L526.0 289.2 L523.4 286.7" fill="none" stroke="#3a3633" stroke-width="0.6" opacity="0.53"/><path d="M518.7 324.1 L519.0 325.9 L520.7 327.0 L521.9 330.7 L524.1 331.4 L524.5 334.0 L526.9 335.3" fill="none" stroke="#3a3633" stroke-width="0.6" opacity="0.31"/><path d="M494.0 309.8 L495.1 312.8 L497.2 315.4 L501.0 314.2 L502.1 313.0 L502.3 310.5 L499.7 310.3" fill="none" stroke="#3a3633" stroke-width="0.6" opacity="0.49"/><path d="M463.6 311.4 L464.9 313.6 L461.8 316.0 L459.4 312.9 L458.1 311.5" fill="none" stroke="#3a3633" stroke-width="0.6" opacity="0.72"/><path d="M569.4 373.5 L568.1 376.9 L570.4 379.1 L569.4 382.5 L569.4 386.4 L567.1 388.6 L564.5 388.1 L563.5 386.3" fill="none" stroke="#3a3633" stroke-width="0.6" opacity="0.62"/><path d="M452.7 305.7 L452.4 302.6 L450.7 300.5 L450.2 298.9 L451.8 297.8 L452.6 295.5" fill="none" stroke="#3a3633" stroke-width="0.6" opacity="0.34"/><path d="M435.2 331.7 L437.6 333.7 L438.6 332.5 L441.2 334.3 L442.9 333.9 L443.4 331.9 L445.5 330.8 L445.5 327.1" fill="none" stroke="#3a3633" stroke-width="0.6" opacity="0.66"/><path d="M537.1 414.6 L535.8 411.1 L537.8 408.1 L536.5 405.1" fill="none" stroke="#3a3633" stroke-width="0.6" opacity="0.54"/><path d="M477.0 304.2 L476.0 301.9 L477.7 299.7 L479.7 297.9 L482.4 299.7 L484.3 299.2 L487.6 299.5 L488.8 297.5" fill="none" stroke="#3a3633" stroke-width="0.6" opacity="0.61"/><path d="M433.8 345.5 L430.4 347.3 L431.2 350.2 L430.9 351.8 L429.3 354.6 L427.1 353.8 L427.9 351.2" fill="none" stroke="#3a3633" stroke-width="0.6" opacity="0.52"/><path d="M491.6 339.0 L489.2 336.3 L486.7 335.1 L483.7 333.5 L481.3 334.5" fill="none" stroke="#3a3633" stroke-width="0.6" opacity="0.49"/><path d="M382.9 321.3 L383.0 324.1 L384.9 326.1 L382.8 328.3 L380.5 328.1 L378.5 329.1 L375.4 329.7" fill="none" stroke="#3a3633" stroke-width="0.6" opacity="0.65"/><path d="M565.3 360.2 L567.5 359.0 L567.3 357.4 L569.3 355.7 L570.9 355.9 L573.8 356.3 L575.6 355.9 L578.7 356.9" fill="none" stroke="#3a3633" stroke-width="0.6" opacity="0.69"/><path d="M493.5 350.4 L491.8 351.2 L492.9 354.4 L490.3 356.2 L488.4 359.2" fill="none" stroke="#3a3633" stroke-width="0.6" opacity="0.65"/><path d="M440.7 333.8 L442.1 334.4 L444.5 336.2 L443.5 338.7 L442.0 341.9 L439.5 342.6 L437.2 341.6" fill="none" stroke="#3a3633" stroke-width="0.6" opacity="0.33"/><path d="M448.5 298.8 L451.1 298.5 L451.6 295.5 L450.3 294.1 L449.2 295.1" fill="none" stroke="#3a3633" stroke-width="0.6" opacity="0.61"/><path d="M583.4 413.5 L584.6 412.6 L586.7 412.7 L588.1 414.2" fill="none" stroke="#3a3633" stroke-width="0.6" opacity="0.32"/><path d="M534.7 296.5 L535.7 299.0 L533.9 300.2 L531.9 297.5 L530.7 298.4 L527.2 299.0 L527.0 301.2 L525.6 302.6" fill="none" stroke="#3a3633" stroke-width="0.6" opacity="0.69"/><path d="M460.8 346.1 L458.1 346.4 L456.6 350.0 L459.4 352.7 L462.7 351.5 L465.9 350.2 L467.8 349.0 L470.0 349.6" fill="none" stroke="#3a3633" stroke-width="0.6" opacity="0.43"/><path d="M422.5 306.8 L421.8 303.8 L425.3 302.9 L427.6 303.1 L431.2 302.5 L434.0 300.8 L437.6 300.0 L439.2 301.5" fill="none" stroke="#3a3633" stroke-width="0.6" opacity="0.30"/><path d="M475.3 384.7 L473.4 384.9 L471.7 381.4 L467.8 381.4" fill="none" stroke="#3a3633" stroke-width="0.6" opacity="0.66"/><path d="M389.0 325.5 L388.3 328.3 L386.4 329.0 L382.9 327.5 L380.2 328.7 L377.6 328.3 L376.1 329.9 L372.6 329.8" fill="none" stroke="#3a3633" stroke-width="0.6" opacity="0.51"/><path d="M564.9 381.1 L564.4 378.3 L561.5 376.2 L558.7 376.1 L557.5 377.7" fill="none" stroke="#3a3633" stroke-width="0.6" opacity="0.34"/><path d="M495.6 315.5 L492.9 315.0 L492.0 316.3 L490.0 314.8 L487.5 316.6 L485.7 316.0" fill="none" stroke="#3a3633" stroke-width="0.6" opacity="0.57"/><path d="M442.6 383.1 L445.1 380.4 L447.6 378.7 L447.7 374.9" fill="none" stroke="#3a3633" stroke-width="0.6" opacity="0.43"/><path d="M529.1 368.7 L530.1 366.8 L528.4 365.7 L526.9 366.4 L527.7 369.2 L525.7 370.9 L522.9 368.3 L520.5 370.1" fill="none" stroke="#3a3633" stroke-width="0.6" opacity="0.48"/><path d="M581.5 410.8 L582.7 412.0 L581.3 414.4 L583.0 417.6 L584.6 418.9 L585.0 420.8 L581.3 422.1 L581.9 424.9" fill="none" stroke="#3a3633" stroke-width="0.6" opacity="0.31"/><path d="M517.1 330.7 L516.7 332.5 L513.3 334.4 L511.1 334.3 L507.9 333.2 L506.5 335.1 L506.7 336.9" fill="none" stroke="#3a3633" stroke-width="0.6" opacity="0.52"/><path d="M499.9 369.5 L502.5 372.2 L502.2 374.0 L500.6 374.6" fill="none" stroke="#3a3633" stroke-width="0.6" opacity="0.58"/><path d="M416.1 390.2 L418.6 390.1 L418.6 388.5 L420.9 388.3" fill="none" stroke="#3a3633" stroke-width="0.6" opacity="0.41"/><path d="M519.3 369.1 L520.5 371.4 L518.8 373.3 L519.7 375.7" fill="none" stroke="#3a3633" stroke-width="0.6" opacity="0.41"/><path d="M550.6 352.9 L551.5 354.4 L553.0 356.7 L555.8 356.2 L559.1 357.1" fill="none" stroke="#3a3633" stroke-width="0.6" opacity="0.72"/><path d="M382.9 318.5 L381.2 320.5 L381.4 322.5 L383.4 324.1 L385.1 324.8" fill="none" stroke="#3a3633" stroke-width="0.6" opacity="0.67"/><path d="M510.4 342.1 L511.1 339.9 L510.0 338.9 L510.5 336.2 L508.7 334.4 L509.7 332.6 L510.9 331.2" fill="none" stroke="#3a3633" stroke-width="0.6" opacity="0.38"/><path d="M487.3 359.6 L488.3 362.9 L490.1 363.3 L492.2 365.5 L494.5 365.1 L493.9 361.9 L493.4 358.3 L496.0 357.3" fill="none" stroke="#3a3633" stroke-width="0.6" opacity="0.46"/><path d="M464.4 398.2 L463.2 394.6 L461.8 391.2 L460.0 390.4" fill="none" stroke="#3a3633" stroke-width="0.6" opacity="0.67"/><path d="M457.9 361.8 L455.7 361.0 L456.3 357.2 L454.0 356.4 L450.8 358.0 L448.6 355.4 L449.9 352.7 L452.1 353.1" fill="none" stroke="#3a3633" stroke-width="0.6" opacity="0.35"/><path d="M472.9 304.0 L474.0 302.2 L471.9 300.0 L469.7 300.5 L465.8 300.8 L465.9 304.6 L464.5 306.2 L461.5 305.5" fill="none" stroke="#3a3633" stroke-width="0.6" opacity="0.51"/><path d="M484.4 386.1 L482.8 386.5 L482.5 389.2 L482.2 391.4" fill="none" stroke="#3a3633" stroke-width="0.6" opacity="0.35"/><path d="M455.2 356.5 L452.7 358.1 L450.9 357.6 L449.8 353.9 L448.3 351.9" fill="none" stroke="#3a3633" stroke-width="0.6" opacity="0.68"/><path d="M425.5 338.9 L426.8 337.3 L427.3 334.7 L430.7 335.1 L431.2 338.7 L429.8 339.6" fill="none" stroke="#3a3633" stroke-width="0.6" opacity="0.53"/><path d="M480.3 384.8 L478.5 385.6 L477.3 387.3 L475.5 388.1 L473.6 389.7 L471.9 387.7" fill="none" stroke="#3a3633" stroke-width="0.6" opacity="0.32"/><path d="M424.8 307.6 L426.2 306.0 L428.1 304.2 L429.8 305.6" fill="none" stroke="#3a3633" stroke-width="0.6" opacity="0.44"/><path d="M463.3 329.6 L463.8 328.0 L465.9 324.8 L467.0 322.2 L470.8 322.5 L472.9 323.2 L474.5 326.1 L476.9 327.1" fill="none" stroke="#3a3633" stroke-width="0.6" opacity="0.61"/><path d="M489.6 382.0 L486.8 381.5 L484.5 380.1 L482.4 380.2 L480.8 382.5 L480.1 385.4" fill="none" stroke="#3a3633" stroke-width="0.6" opacity="0.31"/><path d="M414.2 405.4 L415.5 407.2 L414.4 408.9 L415.5 409.9 L417.4 412.3 L420.3 413.5 L423.5 415.1 L426.9 415.1" fill="none" stroke="#3a3633" stroke-width="0.6" opacity="0.53"/><path d="M562.6 341.2 L564.0 339.2 L566.8 338.1 L569.4 340.5 L571.8 342.9 L571.7 346.3 L572.0 349.8" fill="none" stroke="#3a3633" stroke-width="0.6" opacity="0.62"/><path d="M504.7 334.9 L506.0 332.3 L504.3 330.5 L505.7 329.2" fill="none" stroke="#3a3633" stroke-width="0.6" opacity="0.68"/><path d="M466.0 397.1 L466.5 399.2 L468.1 401.0 L469.9 403.4 L470.2 404.9 L467.9 408.1 L467.3 410.3" fill="none" stroke="#3a3633" stroke-width="0.6" opacity="0.54"/><path d="M499.2 306.6 L501.1 309.9 L504.3 311.6 L504.3 315.5 L506.4 317.0" fill="none" stroke="#3a3633" stroke-width="0.6" opacity="0.71"/><path d="M497.1 345.8 L494.3 346.5 L492.3 348.7 L490.5 351.8 L488.0 352.5 L486.6 353.2 L483.9 352.8" fill="none" stroke="#3a3633" stroke-width="0.6" opacity="0.30"/><path d="M516.1 356.4 L514.3 358.7 L511.3 360.9 L509.5 358.9 L507.0 357.0 L508.5 355.2 L510.9 352.6 L510.3 350.4" fill="none" stroke="#3a3633" stroke-width="0.6" opacity="0.74"/><path d="M510.3 304.5 L511.3 308.0 L507.7 309.0 L506.0 309.9 L505.0 312.5 L504.3 314.3" fill="none" stroke="#3a3633" stroke-width="0.6" opacity="0.38"/><path d="M428.8 307.3 L427.4 307.8 L428.5 310.9 L429.1 314.6" fill="none" stroke="#3a3633" stroke-width="0.6" opacity="0.48"/><path d="M487.9 348.9 L490.7 349.4 L493.4 347.7 L496.9 345.9 L499.4 345.3" fill="none" stroke="#3a3633" stroke-width="0.6" opacity="0.35"/><path d="M531.3 398.5 L534.3 396.0 L536.3 394.3 L538.4 391.4" fill="none" stroke="#3a3633" stroke-width="0.6" opacity="0.59"/><path d="M451.1 299.2 L452.8 300.0 L454.5 299.5 L456.1 301.9 L458.4 303.2" fill="none" stroke="#3a3633" stroke-width="0.6" opacity="0.47"/><path d="M359.0 297.2 L358.3 299.1 L360.3 301.3 L361.8 301.0 L363.3 303.2 L364.9 304.6 L363.5 308.3 L366.2 309.9" fill="none" stroke="#3a3633" stroke-width="0.6" opacity="0.60"/><path d="M431.1 325.1 L433.1 328.1 L434.9 327.4 L436.1 326.4 L438.3 327.6 L440.6 327.7 L441.3 330.0" fill="none" stroke="#3a3633" stroke-width="0.6" opacity="0.59"/><path d="M535.9 335.4 L536.3 333.5 L535.3 331.6 L532.4 332.8 L531.3 334.3 L529.6 334.8 L527.6 337.8 L529.1 339.9" fill="none" stroke="#3a3633" stroke-width="0.6" opacity="0.68"/><path d="M491.0 323.9 L490.0 327.7 L492.4 330.7 L493.7 332.4 L495.0 333.6 L495.4 335.7 L492.7 337.0" fill="none" stroke="#3a3633" stroke-width="0.6" opacity="0.47"/><path d="M481.8 397.0 L481.2 398.6 L477.9 399.0 L476.7 398.0" fill="none" stroke="#3a3633" stroke-width="0.6" opacity="0.62"/><path d="M485.9 350.2 L487.1 348.6 L485.8 345.1 L482.0 345.7 L479.7 343.3" fill="none" stroke="#3a3633" stroke-width="0.6" opacity="0.39"/><path d="M475.4 329.0 L476.5 331.3 L473.9 333.5 L470.7 331.7 L469.0 333.1 L470.8 335.7 L471.0 338.1" fill="none" stroke="#3a3633" stroke-width="0.6" opacity="0.49"/><path d="M433.9 295.5 L435.3 298.2 L437.1 298.3 L437.7 301.6 L436.9 303.0 L438.5 304.1 L440.6 303.2" fill="none" stroke="#3a3633" stroke-width="0.6" opacity="0.47"/><path d="M526.0 353.0 L525.0 351.2 L523.7 348.7 L526.1 346.7 L529.5 344.9" fill="none" stroke="#3a3633" stroke-width="0.6" opacity="0.35"/><path d="M571.2 299.9 L572.7 297.0 L570.8 295.8 L570.5 293.4" fill="none" stroke="#3a3633" stroke-width="0.6" opacity="0.71"/><path d="M401.2 376.2 L402.3 378.1 L406.1 377.0 L409.4 375.1 L412.7 375.5 L414.0 378.3 L414.8 379.7 L414.7 382.2" fill="none" stroke="#3a3633" stroke-width="0.6" opacity="0.53"/><path d="M505.9 336.3 L509.4 336.2 L511.3 336.4 L513.4 333.7" fill="none" stroke="#3a3633" stroke-width="0.6" opacity="0.41"/><path d="M505.0 375.5 L507.7 373.8 L509.9 372.2 L511.4 372.3 L512.9 373.4 L514.4 376.3" fill="none" stroke="#3a3633" stroke-width="0.6" opacity="0.36"/><path d="M460.8 296.2 L460.5 299.6 L463.1 301.4 L464.6 303.5" fill="none" stroke="#3a3633" stroke-width="0.6" opacity="0.64"/><path d="M493.2 328.6 L492.9 330.2 L490.7 330.4 L490.2 332.7 L488.3 332.4 L485.4 332.5" fill="none" stroke="#3a3633" stroke-width="0.6" opacity="0.43"/><path d="M464.3 340.9 L464.1 344.2 L461.2 344.2 L460.4 346.7 L460.1 348.7 L459.8 350.2 L456.6 350.1" fill="none" stroke="#3a3633" stroke-width="0.6" opacity="0.58"/><path d="M553.5 323.1 L556.7 323.9 L557.4 321.5 L555.6 319.9 L557.2 317.6" fill="none" stroke="#3a3633" stroke-width="0.6" opacity="0.70"/><path d="M469.4 328.9 L470.7 327.0 L469.2 323.8 L467.2 322.5 L465.4 320.8 L465.8 318.8" fill="none" stroke="#3a3633" stroke-width="0.6" opacity="0.32"/><path d="M409.4 323.2 L413.2 323.8 L415.9 324.2 L417.2 322.4 L418.5 321.3 L420.4 321.1 L424.2 320.1" fill="none" stroke="#3a3633" stroke-width="0.6" opacity="0.34"/><path d="M537.3 355.2 L540.7 353.8 L543.2 356.1 L545.1 357.2 L546.6 359.6 L548.3 361.2" fill="none" stroke="#3a3633" stroke-width="0.6" opacity="0.50"/><path d="M507.2 332.1 L504.1 333.1 L501.5 333.3 L498.7 333.2 L495.9 333.7 L494.0 333.3 L491.0 333.6" fill="none" stroke="#3a3633" stroke-width="0.6" opacity="0.34"/><path d="M440.5 393.5 L441.2 391.0 L442.8 389.3 L443.7 385.7 L441.9 385.1 L440.2 383.1 L437.4 384.4" fill="none" stroke="#3a3633" stroke-width="0.6" opacity="0.47"/><path d="M430.1 325.8 L428.0 325.8 L425.4 328.8 L426.3 332.1 L429.6 333.6 L430.8 335.1 L431.2 338.4 L433.4 339.8" fill="none" stroke="#3a3633" stroke-width="0.6" opacity="0.54"/><path d="M539.9 318.5 L541.7 318.5 L544.5 318.6 L546.2 322.1" fill="none" stroke="#3a3633" stroke-width="0.6" opacity="0.58"/><path d="M544.1 333.7 L540.2 334.2 L539.0 336.6 L540.8 338.2 L541.9 340.5 L543.4 340.0 L547.1 341.2" fill="none" stroke="#3a3633" stroke-width="0.6" opacity="0.51"/><path d="M501.6 359.1 L505.2 358.4 L509.0 358.5 L509.7 360.3" fill="none" stroke="#3a3633" stroke-width="0.6" opacity="0.64"/><path d="M429.3 399.2 L426.8 399.4 L423.8 396.9 L423.6 395.3 L423.8 393.6 L424.9 390.3" fill="none" stroke="#3a3633" stroke-width="0.6" opacity="0.35"/><path d="M553.6 319.2 L552.6 320.5 L550.6 318.9 L550.6 316.2 L548.5 315.8" fill="none" stroke="#3a3633" stroke-width="0.6" opacity="0.37"/><path d="M581.6 312.6 L581.1 310.5 L584.4 309.8 L586.0 307.7 L582.9 305.2" fill="none" stroke="#3a3633" stroke-width="0.6" opacity="0.52"/><path d="M466.1 346.0 L464.5 342.8 L464.8 340.3 L464.8 338.4" fill="none" stroke="#3a3633" stroke-width="0.6" opacity="0.68"/><path d="M392.4 392.9 L389.7 392.2 L387.9 392.9 L385.9 392.8" fill="none" stroke="#3a3633" stroke-width="0.6" opacity="0.67"/><path d="M473.0 311.3 L471.3 312.9 L470.0 314.5 L470.2 318.1 L469.4 321.1 L467.9 322.1" fill="none" stroke="#3a3633" stroke-width="0.6" opacity="0.47"/><path d="M435.3 383.8 L436.1 382.5 L438.4 379.9 L441.7 381.1 L443.9 383.3" fill="none" stroke="#3a3633" stroke-width="0.6" opacity="0.46"/><path d="M460.7 411.4 L462.9 410.9 L465.6 412.8 L468.1 414.7 L470.9 415.2" fill="none" stroke="#3a3633" stroke-width="0.6" opacity="0.48"/><path d="M526.3 357.8 L524.6 361.1 L520.7 361.5 L520.0 363.4 L516.8 363.4 L514.4 364.1 L511.2 362.0" fill="none" stroke="#3a3633" stroke-width="0.6" opacity="0.56"/><path d="M534.3 392.6 L533.6 396.4 L534.9 400.0 L535.0 401.7 L537.6 403.0 L536.5 405.2 L534.0 405.8 L533.0 404.4" fill="none" stroke="#3a3633" stroke-width="0.6" opacity="0.52"/><path d="M515.6 326.9 L513.3 328.9 L513.2 330.4 L515.8 330.8" fill="none" stroke="#3a3633" stroke-width="0.6" opacity="0.70"/><path d="M466.8 388.9 L467.5 392.8 L467.3 394.4 L464.0 396.1 L463.0 397.6" fill="none" stroke="#3a3633" stroke-width="0.6" opacity="0.38"/><path d="M370.8 327.2 L368.4 327.3 L366.2 325.1 L363.3 323.7" fill="none" stroke="#3a3633" stroke-width="0.6" opacity="0.45"/><path d="M533.2 358.9 L535.9 358.2 L538.0 358.4 L539.5 358.3 L540.3 361.1 L538.7 361.5 L535.4 361.2 L533.9 362.0" fill="none" stroke="#3a3633" stroke-width="0.6" opacity="0.37"/><path d="M538.6 395.7 L541.3 396.6 L543.7 398.2 L545.1 400.9 L547.9 402.7 L551.1 402.0" fill="none" stroke="#3a3633" stroke-width="0.6" opacity="0.64"/><path d="M487.7 312.7 L488.5 310.5 L489.4 308.5 L488.3 305.8 L484.8 306.0 L484.6 304.2 L485.3 301.8" fill="none" stroke="#3a3633" stroke-width="0.6" opacity="0.74"/><path d="M551.0 324.5 L553.1 326.5 L556.8 325.6 L558.3 324.4 L557.8 321.1 L559.6 320.4 L558.6 317.1 L555.1 315.4" fill="none" stroke="#3a3633" stroke-width="0.6" opacity="0.52"/><path d="M446.9 318.7 L444.9 315.8 L442.2 317.4 L444.0 320.5 L441.7 322.7 L441.0 324.7 L441.3 328.4" fill="none" stroke="#3a3633" stroke-width="0.6" opacity="0.47"/><path d="M491.1 346.5 L489.3 345.6 L488.4 342.6 L485.2 340.3 L482.4 341.0" fill="none" stroke="#3a3633" stroke-width="0.6" opacity="0.37"/><path d="M470.1 408.0 L468.9 407.1 L469.6 405.0 L468.9 402.1 L470.8 401.4 L470.0 398.0" fill="none" stroke="#3a3633" stroke-width="0.6" opacity="0.68"/><path d="M478.5 333.4 L475.7 331.0 L477.1 329.3 L475.9 328.1 L476.9 326.9 L478.5 327.7 L479.2 329.4" fill="none" stroke="#3a3633" stroke-width="0.6" opacity="0.38"/><path d="M470.2 329.9 L466.3 329.1 L465.7 331.1 L462.7 332.2 L463.4 334.9 L465.7 336.0 L466.8 334.9" fill="none" stroke="#3a3633" stroke-width="0.6" opacity="0.75"/><path d="M434.2 416.3 L432.4 418.5 L434.0 419.8 L436.1 422.0 L438.5 425.2 L440.3 428.3 L438.9 429.3" fill="none" stroke="#3a3633" stroke-width="0.6" opacity="0.74"/><path d="M483.5 359.5 L482.0 358.7 L480.4 360.9 L479.4 363.7" fill="none" stroke="#3a3633" stroke-width="0.6" opacity="0.46"/><path d="M563.8 348.9 L561.5 348.2 L557.5 348.3 L556.0 346.8 L553.5 345.4 L551.6 345.2 L549.6 342.1 L550.9 338.6" fill="none" stroke="#3a3633" stroke-width="0.6" opacity="0.59"/><path d="M484.4 389.7 L487.6 392.2 L487.1 395.3 L490.0 396.4 L491.4 393.5 L491.9 390.6 L493.7 388.7 L496.2 388.0" fill="none" stroke="#3a3633" stroke-width="0.6" opacity="0.56"/><path d="M401.7 354.1 L397.7 353.7 L395.5 355.7 L393.0 355.6 L391.1 354.0 L389.0 351.8" fill="none" stroke="#3a3633" stroke-width="0.6" opacity="0.60"/><path d="M508.7 350.3 L503.1 343.3 L496.1 337.0 L491.7 329.5 L487.1 322.1 L484.1 314.2 L481.3 306.3 L478.3 298.5 L473.3 291.2 L466.0 285.0 L461.5 277.6" fill="none" stroke="#2a2624" stroke-width="0.66" opacity="0.8"/><path d="M513.0 350.4 L511.6 343.2 L512.4 335.8 L512.9 328.5 L514.3 321.2 L517.9 314.4 L523.9 308.6 L531.6 304.1 L537.1 298.0 L541.9 291.5 L548.5 286.1" fill="none" stroke="#2a2624" stroke-width="0.81" opacity="0.8"/><path d="M504.0 349.6 L498.4 348.9 L493.1 347.3 L487.9 345.7 L482.5 344.2 L476.9 343.9 L471.2 343.9 L465.8 342.4 L460.8 340.4 L455.7 338.6 L450.5 336.8" fill="none" stroke="#2a2624" stroke-width="0.80" opacity="0.8"/><path d="M510.9 351.2 L515.3 348.6 L519.1 345.4 L522.4 342.0 L525.3 338.3 L527.7 334.5 L528.2 330.3 L527.6 326.1 L527.3 321.9 L525.3 317.9 L522.1 314.4" fill="none" stroke="#2a2624" stroke-width="0.76" opacity="0.8"/><path d="M503.9 354.0 L497.3 351.3 L491.0 348.0 L486.0 343.8 L480.0 340.4 L473.7 337.2 L468.4 333.2 L463.6 328.8 L458.2 324.8 L451.5 322.2 L444.6 319.9" fill="none" stroke="#2a2624" stroke-width="0.58" opacity="0.8"/><path d="M506.5 352.9 L512.4 349.7 L517.9 346.1 L522.9 342.2 L528.2 338.5 L534.8 336.2 L540.5 332.8 L547.3 331.0 L554.4 330.0 L561.4 328.5 L568.5 327.7" fill="none" stroke="#2a2624" stroke-width="0.56" opacity="0.8"/><path d="M506.1 352.2 L493.8 351.4 L482.3 348.1 L471.8 343.3 L459.7 341.3 L447.9 338.8 L436.0 336.5 L424.0 334.4 L413.0 330.3 L401.6 326.6 L390.2 323.1" fill="none" stroke="#2a2624" stroke-width="0.85" opacity="0.8"/><path d="M508.2 353.9 L507.4 346.9 L508.1 339.9 L508.2 332.8 L505.3 326.1 L503.6 319.2 L502.2 312.2 L502.6 305.2 L504.8 298.3 L504.4 291.3 L502.2 284.4" fill="none" stroke="#2a2624" stroke-width="0.44" opacity="0.8"/><path d="M501.4 353.5 L506.1 351.9 L509.8 349.3 L514.0 347.1 L518.6 345.4 L523.2 343.6 L526.8 340.9 L530.8 338.6 L534.7 336.1 L538.7 333.7 L543.6 332.6" fill="none" stroke="#2a2624" stroke-width="0.81" opacity="0.8"/><path d="M505.3 352.1 L509.9 349.6 L515.2 348.4 L520.3 346.6 L524.9 344.2 L529.0 341.4 L532.4 338.0 L536.8 335.4 L541.4 333.0 L545.9 330.5 L550.3 327.9" fill="none" stroke="#2a2624" stroke-width="0.43" opacity="0.8"/><path d="M512.8 354.1 L502.7 347.4 L490.9 342.4 L477.7 340.3 L464.5 338.0 L451.1 336.6 L437.6 335.5 L424.2 334.4 L410.8 332.7 L397.3 331.9 L384.4 329.1" fill="none" stroke="#2a2624" stroke-width="0.50" opacity="0.8"/><path d="M500.8 350.9 L510.9 350.1 L520.9 348.9 L530.9 348.0 L540.7 346.2 L550.1 343.3 L560.0 341.8 L569.6 339.3 L579.5 337.9 L589.6 338.1 L599.7 338.7" fill="none" stroke="#2a2624" stroke-width="0.63" opacity="0.8"/><path d="M514.0 349.3 L522.9 348.6 L531.8 348.5 L540.2 346.3 L549.0 345.8 L557.3 343.3 L565.8 341.3 L573.4 337.9 L582.1 336.3 L590.8 335.0 L599.7 335.1" fill="none" stroke="#2a2624" stroke-width="0.65" opacity="0.8"/><path d="M504.7 350.3 L513.2 344.5 L519.6 337.4 L528.4 332.0 L535.5 325.3 L540.0 317.4 L541.3 308.9 L544.8 300.7 L551.5 293.8 L557.7 286.6 L564.8 279.9" fill="none" stroke="#2a2624" stroke-width="0.53" opacity="0.8"/><path d="M502.5 349.3 L514.0 349.1 L524.9 346.1 L536.3 345.1 L547.5 342.8 L557.9 339.1 L568.6 335.8 L578.6 331.5 L588.9 327.5 L597.5 321.8 L608.0 318.2" fill="none" stroke="#2a2624" stroke-width="0.56" opacity="0.8"/><path d="M512.8 354.9 L517.9 353.0 L521.8 349.9 L525.4 346.7 L529.5 343.7 L532.7 340.2 L536.0 336.7 L537.9 332.7 L539.7 328.7 L542.3 324.9 L544.7 321.0" fill="none" stroke="#2a2624" stroke-width="0.74" opacity="0.8"/><path d="M502.0 354.5 L491.0 349.1 L482.8 341.4 L474.8 333.7 L465.3 326.9 L454.9 320.8 L446.1 313.6 L437.3 306.3 L431.7 297.4 L423.0 290.0 L414.3 282.7" fill="none" stroke="#2a2624" stroke-width="0.83" opacity="0.8"/><path d="M501.4 349.8 L503.2 342.5 L507.5 335.8 L513.9 330.1 L518.7 323.5 L525.8 318.3 L530.4 311.7 L535.5 305.3 L543.1 300.5 L550.0 295.1 L558.7 291.5" fill="none" stroke="#2a2624" stroke-width="0.73" opacity="0.8"/><path d="M507.2 350.5 L499.7 349.4 L492.0 349.6 L484.4 348.7 L476.8 348.6 L469.4 350.2 L462.0 351.6 L455.3 354.4 L448.5 357.1 L441.2 358.7 L433.7 360.0" fill="none" stroke="#2a2624" stroke-width="0.63" opacity="0.8"/><path d="M501.6 352.9 L492.3 355.0 L483.0 356.8 L473.9 359.2 L465.1 362.3 L456.0 364.5 L447.8 368.3 L441.0 373.5 L432.4 376.8 L424.4 380.8 L415.4 383.4" fill="none" stroke="#2a2624" stroke-width="0.84" opacity="0.8"/><path d="M501.5 354.3 L499.6 350.3 L497.8 346.3 L496.0 342.3 L492.9 338.7 L489.7 335.3 L485.5 332.4 L481.4 329.5 L477.3 326.6 L472.9 324.0 L467.9 322.1" fill="none" stroke="#2a2624" stroke-width="0.60" opacity="0.8"/><path d="M503.8 354.2 L499.2 352.1 L495.5 349.2 L490.8 347.3 L487.0 344.4 L483.1 341.5 L480.2 338.2 L477.4 334.7 L475.3 331.0 L472.3 327.6 L470.1 323.9" fill="none" stroke="#2a2624" stroke-width="0.48" opacity="0.8"/><path d="M506.3 352.1 L502.7 350.2 L500.0 347.7 L496.4 345.9 L492.9 343.9 L489.0 342.5 L485.3 340.9 L482.0 338.7 L479.3 336.2 L475.6 334.4 L471.6 333.2" fill="none" stroke="#2a2624" stroke-width="0.70" opacity="0.8"/><path d="M509.9 353.2 L514.1 354.2 L518.5 354.9 L522.5 356.3 L526.6 357.6 L530.1 359.7 L534.2 360.8 L537.8 362.9 L541.5 364.8 L545.3 366.5 L549.6 367.3" fill="none" stroke="#2a2624" stroke-width="0.52" opacity="0.8"/><path d="M502.4 351.1 L508.5 343.8 L512.3 335.7 L514.0 327.2 L514.4 318.6 L518.5 310.5 L526.0 304.0 L535.1 298.8 L544.0 293.4 L553.0 288.1 L563.2 284.2" fill="none" stroke="#2a2624" stroke-width="0.85" opacity="0.8"/><path d="M503.2 352.8 L513.0 349.1 L523.7 347.0 L533.1 342.7 L543.2 339.5 L552.9 335.6 L561.1 330.1 L571.2 326.8 L581.7 324.5 L592.7 323.5 L602.9 320.5" fill="none" stroke="#2a2624" stroke-width="0.81" opacity="0.8"/><path d="M511.9 354.0 L525.7 355.6 L539.3 357.8 L553.1 359.6 L566.0 363.6 L577.5 369.5 L586.7 377.4 L597.2 384.2 L604.3 393.3 L611.1 402.4 L613.9 412.6" fill="none" stroke="#2a2624" stroke-width="0.46" opacity="0.8"/><path d="M504.0 354.0 L516.6 352.7 L528.5 349.4 L540.2 345.9 L550.9 340.8 L561.6 335.7 L573.7 333.1 L586.2 331.6 L598.9 331.5 L611.5 330.7 L624.1 331.8" fill="none" stroke="#2a2624" stroke-width="0.80" opacity="0.8"/><path d="M513.2 351.4 L518.0 341.3 L524.3 331.6 L533.4 323.3 L541.1 314.2 L549.7 305.6 L560.7 298.7 L573.4 293.6 L583.0 285.6 L592.5 277.5 L597.9 267.5" fill="none" stroke="#2a2624" stroke-width="0.46" opacity="0.8"/><path d="M509.7 351.7 L516.7 348.1 L522.7 343.4 L528.0 338.3 L534.7 334.3 L541.9 330.8 L548.3 326.4 L552.8 321.0 L556.1 315.0 L560.5 309.4 L564.6 303.7" fill="none" stroke="#2a2624" stroke-width="0.73" opacity="0.8"/><path d="M510.9 349.2 L516.0 348.1 L520.7 346.2 L524.9 343.7 L529.9 342.4 L534.7 340.7 L539.0 338.3 L544.0 336.9 L549.1 335.8 L554.5 335.8 L559.8 335.4" fill="none" stroke="#2a2624" stroke-width="0.65" opacity="0.8"/><path d="M515.8 350.1 L525.1 351.8 L534.7 351.8 L544.3 351.9 L553.3 349.6 L561.4 345.8 L570.7 344.0 L579.9 342.1 L589.5 341.6 L598.8 339.9 L607.8 337.5" fill="none" stroke="#2a2624" stroke-width="0.45" opacity="0.8"/><path d="M508.2 351.3 L514.5 342.3 L523.7 335.0 L534.1 328.5 L541.4 320.0 L549.8 312.0 L557.6 303.8 L568.6 297.9 L578.7 291.2 L589.8 285.4 L601.5 280.4" fill="none" stroke="#2a2624" stroke-width="0.59" opacity="0.8"/><path d="M514.5 352.0 L514.3 343.4 L517.8 335.2 L517.9 326.7 L520.6 318.3 L524.7 310.3 L529.2 302.4 L533.4 294.4 L539.3 287.1 L547.7 281.3 L557.2 276.5" fill="none" stroke="#2a2624" stroke-width="0.77" opacity="0.8"/><path d="M502.2 354.7 L494.8 353.4 L487.3 353.4 L479.7 353.1 L472.1 352.6 L464.7 353.8 L457.5 355.4 L450.0 356.0 L442.4 356.1 L434.9 357.1 L427.3 357.0" fill="none" stroke="#2a2624" stroke-width="0.55" opacity="0.8"/><path d="M515.7 352.9 L518.7 346.9 L522.8 341.1 L526.2 335.2 L532.0 330.4 L538.6 326.2 L545.9 322.8 L552.4 318.6 L557.4 313.3 L562.8 308.2 L569.5 304.2" fill="none" stroke="#2a2624" stroke-width="0.80" opacity="0.8"/><path d="M508.3 354.3 L504.4 351.3 L501.3 347.8 L497.2 345.0 L492.7 342.6 L487.4 341.4 L481.9 340.8 L476.4 340.5 L471.3 338.8 L467.2 336.1 L462.3 334.1" fill="none" stroke="#2a2624" stroke-width="0.55" opacity="0.8"/><path d="M505.1 351.6 L511.0 350.2 L516.5 348.1 L521.7 345.6 L526.7 342.9 L532.6 341.5 L538.1 339.4 L542.9 336.5 L548.6 334.7 L554.2 332.8 L560.2 331.9" fill="none" stroke="#2a2624" stroke-width="0.72" opacity="0.8"/><path d="M502.4 353.5 L508.5 350.3 L514.7 347.1 L521.3 344.6 L528.5 343.0 L535.2 340.6 L541.6 337.7 L548.8 336.3 L556.1 335.0 L563.0 332.9 L570.2 331.3" fill="none" stroke="#2a2624" stroke-width="0.53" opacity="0.8"/><path d="M513.2 352.4 L516.5 350.2 L520.6 348.8 L524.3 346.9 L527.5 344.6 L529.6 341.6 L531.9 338.8 L534.8 336.2 L538.1 334.0 L541.2 331.6 L544.9 329.8" fill="none" stroke="#2a2624" stroke-width="0.46" opacity="0.8"/><path d="M500 350 Q480 340 485 325 Q492 312 490 305 M505 352 Q470 372 450 380 Q430 386 425 384 M515 345 Q540 330 560 325 Q575 320 583 316 M512 348 Q525 320 530 300" fill="none" stroke="#1f1c1a" stroke-width="1.4"/><circle cx="489" cy="318" r="3" fill="none" stroke="#222" stroke-width="1.2"/><path d="M440 432 Q446 412 468 404 L498 398 Q516 412 542 402 Q570 408 582 432 Z" fill="url(#mshirt)"/><path d="M498 398 L512 420 L528 400 Q520 412 512 414 Q504 410 498 398Z" fill="#9c948c" opacity="0.6"/><path d="M468 432 Q466 414 476 400 L490 404 Q483 420 486 432Z" fill="#bdb8b2"/><path d="M562 432 Q568 414 558 398 L546 402 Q554 420 550 432Z" fill="#b2ada7"/><defs><linearGradient id="fsh" x1="0" x2="1"><stop offset="0" stop-color="#c9a690"/><stop offset="0.55" stop-color="#b48c74"/><stop offset="1" stop-color="#6e5444"/></linearGradient></defs><path d="M494 372 Q494 356 512 355 Q530 356 531 372 Q532 392 524 402 Q516 410 508 408 Q498 402 495 390 Z" fill="url(#fsh)"/><path d="M497 392 Q503 408 512 409 Q522 406 527 394 Q520 402 512 402 Q503 401 497 392Z" fill="#4a3a32" opacity="0.75"/><path d="M499 372 Q504 369 509 372 M516 371 Q521 368 526 371" stroke="#3b2a22" stroke-width="1.3" fill="none"/><path d="M500 376 Q504 378 508 376 M517 375 Q521 377 525 375" stroke="#3b2a22" stroke-width="1" fill="none"/><path d="M512 378 Q510 386 508 388 Q512 390 515 388" stroke="#7a5a48" stroke-width="1" fill="none"/><path d="M505 396 Q512 394 519 396" stroke="#3a2620" stroke-width="1.2" fill="none"/><path d="M481.6 368.0 L489.2 365.4 L483.0 361.3 L491.4 360.5 L487.4 355.2 L495.7 356.3 L494.1 350.4 L501.5 353.3 L502.6 347.3 L508.4 351.7 L512.0 346.2 L515.6 351.7 L521.4 347.3 L522.5 353.3 L529.9 350.4 L528.3 356.3 L536.6 355.2 L532.6 360.5 L541.0 361.3 L534.8 365.4 L542.5 368.0 Q520 358 512 358 Q500 358 491 368Z" fill="#2a221e"/><path d="M474 408 Q470 392 478 380 Q486 368 496 366 Q502 366 503 371 Q499 374 497 380 L496 394 Q492 404 486 410Z" fill="#b08a72"/><path d="M481 384 L497 370 M480 390 L498 377" stroke="#8a6a58" stroke-width="0.8"/><path d="M552 410 Q556 394 548 382 Q540 370 530 368 Q525 369 526 374 Q530 377 531 383 L532 396 Q536 406 544 412Z" fill="#9e7a64"/><path d="M545 386 L530 373 M547 392 L531 380" stroke="#7a5a48" stroke-width="0.8"/></g></svg>
<div class="t" style="left:911px;top:329.5px;width:0;height:0;"><div class="t" style="left:-250px;top:-35px;width:500px;height:70px;line-height:70px;text-align:center;direction:rtl;font-size:40px;font-weight:bold;color:#00b050;transform:scale(0.844,1.25)">مفهوم القلق والتوتر</div></div>
<div class="a" style="left:591.5px;top:402px;width:188.5px;height:79.5px;background:#fe3a88;border:1.5px solid #cc2f6e;border-radius:11px"></div>
<div class="t" style="left:703.4px;top:440.5px;width:0;height:0;"><div class="t" style="left:-100px;top:-18px;width:200px;height:36px;line-height:36px;text-align:center;direction:rtl;font-size:26px;font-weight:bold;color:#000;transform:scale(0.857,1.22)">التوتر</div></div>
<div class="a" style="left:998px;top:400.5px;width:187.5px;height:78px;background:#2b9fbc;border-radius:13px"></div>
<div class="t" style="left:1092.2px;top:438.5px;width:0;height:0;"><div class="t" style="left:-100px;top:-18px;width:200px;height:36px;line-height:36px;text-align:center;direction:rtl;font-size:23px;font-weight:bold;color:#000;transform:scale(0.81,1.22)">القلق</div></div>
<div class="a" style="left:651.5px;top:503.5px;width:488.5px;height:58.5px;background:#d91e2a"></div>
<svg style="left:0;top:0" width="10" height="10"><path d="M896 471.8 L918.6 495 H907.4 V504 H884 V495 H873 Z" fill="#d91e2a"/></svg>
<div class="t" style="left:895.8px;top:534.5px;width:0;height:0;"><div class="t" style="left:-150px;top:-18px;width:300px;height:36px;line-height:36px;text-align:center;direction:rtl;font-size:21px;font-weight:bold;color:#000;transform:scale(0.874,1.3)">المرض الخفي</div></div>
<!-- text boxes -->
<div class="a" style="left:592px;top:574.5px;width:289px;height:309px;border:2px solid #e8408c;border-radius:38px;background:linear-gradient(180deg,#fffafc 0%,#fde6ee 18%,#fcc3d6 45%,#ff9dbb 68%,#ff88ad 80%,#ffa9c4 92%,#fcd9e5 100%)"></div>
<div class="a" style="left:898px;top:568px;width:298px;height:317px;border:1.5px solid #3f8ea8;border-radius:38px;box-shadow:0 3px 4px rgba(0,0,0,0.22);background:#c6e9f8;background-image:repeating-linear-gradient(90deg,rgba(255,255,255,0.0) 0px,rgba(255,255,255,0) 5px,rgba(150,200,225,0.35) 5px,rgba(150,200,225,0.35) 6px)"></div>

<div class="ar" style="left:443.7px;top:582.4px;width:400px;font-size:19px;word-spacing:2.35px">•التوتر هو رد فعل فسيولوجي</div>
<div class="ar" style="left:434.7px;top:610.4px;width:400px;font-size:19px;word-spacing:4.30px">ونفسي ناتج عن التعامل مع</div>
<div class="ar" style="left:434.7px;top:636.3px;width:400px;font-size:20px;word-spacing:4.07px">ضغوط أو متطلبات تتجاوز</div>
<div class="ar" style="left:434.7px;top:663.2px;width:400px;font-size:20px;word-spacing:2.30px">قدرة الفرد على التكيف أو</div>
<div class="ar" style="left:434.7px;top:690.1px;width:400px;font-size:19px">التحمل.</div>
<div class="ar" style="left:443.7px;top:745.8px;width:400px;font-size:20px;word-spacing:14.07px">•يظهر التوتر عادة نتيجة</div>
<div class="ar" style="left:434.7px;top:772.7px;width:400px;font-size:19px;word-spacing:5.73px">مواقف مفاجئة أو مستمرة،</div>
<div class="ar" style="left:434.7px;top:799.6px;width:400px;font-size:20px;word-spacing:4.30px">وقد يؤثر على صحة الفرد</div>
<div class="ar" style="left:434.7px;top:826.6px;width:400px;font-size:19px;word-spacing:6.20px">وعلاقاته وأدائه.</div>


<div class="ar" style="left:770.8px;top:579.5px;width:400px;font-size:18px;word-spacing:3.56px">•تأثير داخلي يخلق حالة من عدم</div>
<div class="ar" style="left:761.9px;top:605.7px;width:400px;font-size:20px;word-spacing:3.63px">التوازن النفسي أو الجسمي</div>
<div class="ar" style="left:761.9px;top:632.7px;width:400px;font-size:18px;word-spacing:3.73px">داخل الإنسان وينجم عن تفاعل</div>
<div class="ar" style="left:761.9px;top:659.6px;width:400px;font-size:19px;word-spacing:4.23px">عوامل خارجية تنشأ من البيئة</div>
<div class="ar" style="left:761.9px;top:686.5px;width:400px;font-size:19px;word-spacing:1.73px">المحيطة أو عوامل داخلية.</div>
<div class="ar" style="left:770.8px;top:742.2px;width:400px;font-size:20px;word-spacing:15.27px">•يُعتبر القلق أحيانًا <u class='rd'>طبيعيًا</u></div>
<div class="ar" style="left:761.9px;top:769.1px;width:400px;font-size:20px;word-spacing:3.98px"><u class='rd'>ومفيدًا </u> إذا كان يساعد على</div>
<div class="ar" style="left:761.9px;top:796.1px;width:400px;font-size:20px;word-spacing:24.95px">التحفيز واتخاذ إجراءات</div>
<div class="ar" style="left:761.9px;top:823.0px;width:400px;font-size:20px;word-spacing:17.97px">إيجابية، ولكنه قد يصبح</div>
<div class="ar" style="left:761.9px;top:849.9px;width:400px;font-size:19px;word-spacing:-0.70px">مشكلة إذا تجاوز <u class='rd'>حده الطبيعي</u></div>

<!-- curved arrows -->
<svg style="left:0;top:0" width="10" height="10">
 <defs>
  <linearGradient id="mag" x1="0" y1="0" x2="0" y2="1"><stop offset="0" stop-color="#c9c9c9"/><stop offset="0.47" stop-color="#cdcdcd"/><stop offset="0.53" stop-color="#ffffff"/><stop offset="1" stop-color="#ffffff"/></linearGradient>
 </defs>
 <path d="M1188 448 C1232 451 1261 515 1259 588 C1257 645 1238 690 1210 721 L1206 727.6 L1195.5 710.6 L1206.6 693.2 L1208 700 C1234 678 1254 635 1256 588 C1257 520 1228 470 1188 466.6 Z" fill="url(#mag)" stroke="#ee7f45" stroke-width="1.1"/>
 <path d="M580 448 C536 451 508 512 508 575 C508 632 530 673 565 690 L562 679 L579 700.8 L562 713.8 L564 706 C528 690 511 640 511 575 C511 515 540 470 580 466.6 Z" fill="url(#mag)" stroke="#ee7f45" stroke-width="1.1"/>
</svg>
</div><!--/MINI--></div><div class="a" style="left:40.7px;top:328.6px;width:139.3px;height:79.0px;background:#c9dcf5;border:1px solid #d0d6de"></div><div class="t" style="left:60.0px;top:329.6px;width:100px;text-align:center;direction:rtl;font-size:7px;font-weight:bold;color:#1aa97a">خصائص القلق و التوتر</div><div class="a" style="left:54.5px;top:340.1px;width:54.0px;height:27.0px;background:#fff;border:1px solid #d2338a"></div><div class="a" style="left:112.5px;top:340.1px;width:64.0px;height:27.0px;background:#fff;border:1px solid #d2338a"></div><div class="a" style="left:60.0px;top:344.6px;width:44.0px;height:1.0px;background:#aaa"></div><div class="a" style="left:118.0px;top:344.6px;width:54.0px;height:1.0px;background:#aaa"></div><div class="a" style="left:60.0px;top:349.6px;width:44.0px;height:1.0px;background:#aaa"></div><div class="a" style="left:118.0px;top:349.6px;width:54.0px;height:1.0px;background:#aaa"></div><div class="a" style="left:60.0px;top:354.6px;width:44.0px;height:1.0px;background:#aaa"></div><div class="a" style="left:118.0px;top:354.6px;width:54.0px;height:1.0px;background:#aaa"></div><div class="a" style="left:60.0px;top:359.6px;width:44.0px;height:1.0px;background:#aaa"></div><div class="a" style="left:118.0px;top:359.6px;width:54.0px;height:1.0px;background:#aaa"></div><svg style="left:76px;top:367.6px" width="80" height="8"><path d="M0 0 h6 v3 h3 l-6 4 l-6 -4 h3z" transform="translate(3,0)" fill="#d2338a"/><path d="M0 0 h6 v3 h3 l-6 4 l-6 -4 h3z" transform="translate(63,0)" fill="#d2338a"/></svg><div class="a" style="left:55.5px;top:375.6px;width:53.0px;height:12.0px;background:#fff;border:1px solid #d2338a"></div><div class="a" style="left:116.0px;top:375.6px;width:58.0px;height:12.0px;background:#fff;border:1px solid #d2338a"></div><div class="a" style="left:55.5px;top:389.6px;width:121.0px;height:16.0px;background:#fff;border:1px solid #d2338a"></div><div class="a" style="left:62.0px;top:392.6px;width:108.0px;height:1.2px;background:#aaa"></div><div class="a" style="left:102.0px;top:396.1px;width:10.0px;height:1.5px;background:#e0206a"></div><div class="a" style="left:62.0px;top:399.6px;width:108.0px;height:1.4px;background:#e0306a"></div><div class="a" style="left:62.0px;top:378.6px;width:42.0px;height:1.2px;background:#aaa"></div><div class="a" style="left:122.0px;top:378.6px;width:46.0px;height:1.2px;background:#aaa"></div><div class="a" style="left:62.0px;top:382.6px;width:42.0px;height:1.2px;background:#aaa"></div><div class="a" style="left:122.0px;top:382.6px;width:46.0px;height:1.2px;background:#aaa"></div><div class="a" style="left:40.7px;top:430.6px;width:139.3px;height:79.0px;background:#c6daf6;border:1px solid #d0d6de"></div><div class="t" style="left:60.0px;top:432.1px;width:100px;text-align:center;direction:rtl;font-size:6px;font-weight:bold;color:#00b050">مصادر القلق و التوتر</div><svg style="left:-24px;top:-246px" width="10" height="10" style="overflow:visible"><ellipse cx="88" cy="700.6" rx="13" ry="5.5" fill="#5b80b8" stroke="#1e2e4a" stroke-width="0.8"/><ellipse cx="112" cy="691.6" rx="13" ry="5.5" fill="#5b80b8" stroke="#1e2e4a" stroke-width="0.8"/><ellipse cx="146" cy="696.6" rx="13" ry="5.5" fill="#5b80b8" stroke="#1e2e4a" stroke-width="0.8"/><ellipse cx="152" cy="710.6" rx="13" ry="5.5" fill="#5b80b8" stroke="#1e2e4a" stroke-width="0.8"/><ellipse cx="88" cy="717.6" rx="13" ry="5.5" fill="#5b80b8" stroke="#1e2e4a" stroke-width="0.8"/><ellipse cx="153" cy="724.6" rx="13" ry="5.5" fill="#5b80b8" stroke="#1e2e4a" stroke-width="0.8"/><ellipse cx="91" cy="732.6" rx="13" ry="5.5" fill="#5b80b8" stroke="#1e2e4a" stroke-width="0.8"/><ellipse cx="148" cy="733.6" rx="13" ry="5.5" fill="#5b80b8" stroke="#1e2e4a" stroke-width="0.8"/><rect x="124" y="704.6" width="12" height="20" fill="#3a5fa8"/><rect x="124" y="708.6" width="12" height="4" fill="#9acd32"/><rect x="124" y="716.6" width="12" height="4" fill="#c2185b"/><path d="M128 724.6 L126 740.6 M134 724.6 L136 740.6" stroke="#333" stroke-width="1.2"/><circle cx="140" cy="710.6" r="2.5" fill="#f0e0d0" stroke="#333" stroke-width="0.5"/><line x1="100" y1="702.6" x2="122" y2="709.6" stroke="#222" stroke-width="1.3" stroke-dasharray="1.2 2"/><line x1="112" y1="697.6" x2="124" y2="704.6" stroke="#222" stroke-width="1.3" stroke-dasharray="1.2 2"/><line x1="140" y1="700.6" x2="136" y2="706.6" stroke="#222" stroke-width="1.3" stroke-dasharray="1.2 2"/><line x1="139" y1="710.6" x2="142" y2="712.6" stroke="#222" stroke-width="1.3" stroke-dasharray="1.2 2"/><line x1="100" y1="717.6" x2="123" y2="716.6" stroke="#222" stroke-width="1.3" stroke-dasharray="1.2 2"/><line x1="140" y1="718.6" x2="140" y2="723.6" stroke="#222" stroke-width="1.3" stroke-dasharray="1.2 2"/><line x1="102" y1="729.6" x2="123" y2="722.6" stroke="#222" stroke-width="1.3" stroke-dasharray="1.2 2"/><line x1="136" y1="727.6" x2="137" y2="729.6" stroke="#222" stroke-width="1.3" stroke-dasharray="1.2 2"/></svg><div class="a" style="left:40.7px;top:533.7px;width:139.3px;height:79.0px;background:#c6daf6;border:1px solid #d0d6de"></div><div class="t" style="left:60.0px;top:535.2px;width:100px;text-align:center;direction:rtl;font-size:6px;font-weight:bold;color:#00b050">الأعراض</div><div class="a" style="left:136.0px;top:546.2px;width:36.0px;height:2.2px;background:#8a8a8a"></div><div class="a" style="left:126.0px;top:552.0px;width:46.0px;height:1.7px;background:#8a8a8a"></div><div class="a" style="left:48.0px;top:557.8px;width:124.0px;height:1.7px;background:#8a8a8a"></div><div class="a" style="left:48.0px;top:563.6px;width:124.0px;height:1.7px;background:#8a8a8a"></div><div class="a" style="left:48.0px;top:569.4px;width:124.0px;height:1.7px;background:#8a8a8a"></div><div class="a" style="left:116.0px;top:575.2px;width:56.0px;height:2.2px;background:#8a8a8a"></div><div class="a" style="left:48.0px;top:581.0px;width:124.0px;height:1.7px;background:#8a8a8a"></div><div class="a" style="left:116.0px;top:586.8px;width:56.0px;height:1.7px;background:#8a8a8a"></div><div class="a" style="left:50.0px;top:592.6px;width:122.0px;height:1.7px;background:#8a8a8a"></div><div class="a" style="left:66.0px;top:598.4px;width:106.0px;height:1.7px;background:#8a8a8a"></div><div class="a" style="left:40.7px;top:636.0px;width:139.3px;height:79.0px;background:#c6daf6;border:1px solid #d0d6de"></div><div class="t" style="left:60.0px;top:637.5px;width:100px;text-align:center;direction:rtl;font-size:6px;font-weight:bold;color:#00b050">أبرز الأعراض</div><div class="a" style="left:89.0px;top:651.0px;width:83.0px;height:1.6px;background:#8a8a8a"></div><div class="a" style="left:48.0px;top:657.0px;width:124.0px;height:1.6px;background:#8a8a8a"></div><div class="a" style="left:66.0px;top:663.0px;width:106.0px;height:1.6px;background:#8a8a8a"></div></div>
<!--/THUMBS-->
<!-- status bar -->
<div class="a" style="left:24px;top:911px;width:1478px;height:1px;background:#d8d8d8"></div>
<div class="a" style="left:24px;top:912px;width:1478px;height:25px;background:#f3f2f1"></div>
<div class="t" style="left:30.5px;top:919px;font-size:12px;color:#444">Slide 3 of 18</div>
<svg style="left:0;top:0" width="10" height="10" fill="none" stroke="#777" stroke-width="1"><path d="M113.5 918.5 H120 V930.5 H113.5Z M120 918.5 H127.5 V930.5 H120"/><path d="M122 928 L129 921 L130.5 922.5 L123.5 929.5Z" fill="#fff"/></svg>
<div class="t" style="left:143.5px;top:919px;font-size:12px;letter-spacing:-0.2px;color:#444">English (United States)</div>
<svg style="left:0;top:0" width="10" height="10" fill="none" stroke="#888" stroke-width="1.1"><path d="M989 924 H1002 M990 927.5 H1001 M991 931 H1000"/><path d="M992 921.5 l3.5 -3 l3.5 3" fill="#888"/></svg>
<div class="t" style="left:1007.5px;top:919px;font-size:11.5px;color:#444">Notes</div>
<svg style="left:0;top:0" width="10" height="10"><path d="M1055 917 H1072 V927 H1062 L1058 931 V927 H1055Z" fill="#555"/></svg>
<div class="t" style="left:1074.5px;top:919px;font-size:12px;color:#444">Comments</div>
<div class="a" style="left:1151px;top:912px;width:34px;height:25px;background:#c8c8c8"></div>
<svg style="left:0;top:0" width="10" height="10" fill="none" stroke="#777" stroke-width="1">
 <rect x="1160.5" y="917.5" width="14" height="14"/><rect x="1163.5" y="920.5" width="8" height="6"/><rect x="1165.5" y="922" width="4" height="3"/>
 <rect x="1195.5" y="918.5" width="6" height="5"/><rect x="1203.5" y="918.5" width="6" height="5"/><rect x="1195.5" y="925.5" width="6" height="5"/><rect x="1203.5" y="925.5" width="6" height="5"/>
 <path d="M1230.5 918.5 H1237 V930.5 H1230.5Z M1237 918.5 H1244.5 V930.5 H1237 M1232 921 H1235 M1232 924 H1235 M1239 921 H1243 M1239 924 H1243"/>
 <path d="M1265 918.5 H1279 M1266.5 918.5 V927.5 H1277.5 V918.5 M1272 927.5 V931 M1268 931.5 H1276"/><rect x="1269" y="920.5" width="6" height="4"/>
 <line x1="1294" y1="924.5" x2="1302.5" y2="924.5" stroke="#555" stroke-width="2"/>
 <line x1="1307" y1="924.5" x2="1420" y2="924.5" stroke="#aaa"/>
 <line x1="1364" y1="921.5" x2="1364" y2="927.5" stroke="#aaa"/>
 <line x1="1425" y1="924.5" x2="1434" y2="924.5" stroke="#555" stroke-width="2"/><line x1="1429.5" y1="920" x2="1429.5" y2="929" stroke="#555" stroke-width="2"/>
 <rect x="1482" y="918" width="13" height="13" stroke="#999"/>
</svg>
<div class="a" style="left:1345px;top:918px;width:6px;height:13px;background:#555"></div>
<div class="t" style="left:1444px;top:919px;font-size:11.5px;color:#444">74%</div>


<!-- ============ RIGHT PANEL ============ -->
<div class="a" style="left:1511px;top:56px;width:407px;height:891px;background:#0d0d0d"></div>
<!-- tile 1 -->
<div class="a" style="left:1536px;top:289px;width:382px;height:216px;border:3px solid #00ef92;border-radius:10px;overflow:hidden;background:#e6e7e5">
<svg style="left:-1539px;top:-292px" width="1918" height="947">
 <defs>
  <filter id="bl8" x="-50%" y="-50%" width="200%" height="200%"><feGaussianBlur stdDeviation="9"/></filter>
  <filter id="bl3" x="-50%" y="-50%" width="200%" height="200%"><feGaussianBlur stdDeviation="2.5"/></filter>
  <filter id="bl1" x="-20%" y="-20%" width="140%" height="140%"><feGaussianBlur stdDeviation="1"/></filter>
  <linearGradient id="v1bg" x1="0" y1="0" x2="1" y2="0"><stop offset="0" stop-color="#d6d9d9"/><stop offset="0.5" stop-color="#ecedeb"/><stop offset="1" stop-color="#e8e6e2"/></linearGradient>
  <radialGradient id="face1" cx="0.5" cy="0.4" r="0.62"><stop offset="0" stop-color="#c0a094"/><stop offset="0.7" stop-color="#ab887c"/><stop offset="1" stop-color="#8a6c62"/></radialGradient>
 </defs>
 <rect x="1539" y="292" width="376" height="210" fill="url(#v1bg)"/>
 <g filter="url(#bl8)">
  <rect x="1539" y="292" width="376" height="40" fill="#dadcdc"/>
  <path d="M1600 380 Q1640 365 1700 400 L1700 440 Q1650 445 1605 440 Z" fill="#8f938e"/>
  <ellipse cx="1690" cy="375" rx="40" ry="18" fill="#b9d2cf"/>
  <rect x="1832" y="292" width="34" height="210" fill="#c8c0b2"/>
  <rect x="1866" y="300" width="49" height="110" fill="#f4f4f2"/>
  <ellipse cx="1900" cy="470" rx="35" ry="50" fill="#7f7a72"/>
  <ellipse cx="1650" cy="495" rx="50" ry="20" fill="#c9b8b0"/>
 </g>
 <g filter="url(#bl1)">
  <path d="M1605 502 Q1622 472 1670 460 L1772 454 Q1832 466 1858 502 Z" fill="#a9b5c1"/>
  <path d="M1758 462 Q1800 466 1830 492 L1838 502 H1790 Z" fill="#bac4ce"/>
  <path d="M1698 480 Q1720 500 1748 478 L1750 502 H1696 Z" fill="#8e6e62"/>
  <ellipse cx="1681" cy="438" rx="5" ry="11" fill="#a07c6c"/><ellipse cx="1759" cy="438" rx="5" ry="11" fill="#9a7666"/>
  <path d="M1683 422 Q1681 382 1720 380 Q1759 382 1758 422 Q1760 466 1742 484 Q1720 498 1699 484 Q1681 466 1683 422 Z" fill="url(#face1)"/>
  <path d="M1683 410 Q1684 378 1720 377 Q1757 378 1757 410 L1754 404 Q1748 386 1720 386 Q1692 386 1686 404 Z" fill="#2e2624"/>
  <rect x="1686" y="410" width="31" height="19" rx="7" fill="none" stroke="#958aa6" stroke-width="1.8"/>
  <rect x="1721" y="408" width="32" height="19" rx="7" fill="none" stroke="#958aa6" stroke-width="1.8"/>
  <path d="M1694 421 Q1702 424 1710 421 M1728 419 Q1736 422 1744 419" stroke="#4a3630" stroke-width="1.5" fill="none"/>
  <path d="M1712 431 Q1710 440 1706 444 Q1714 448 1722 444" stroke="#8a6658" stroke-width="1.4" fill="none"/>
  <path d="M1703 456 Q1719 449 1736 455 Q1720 467 1703 456Z" fill="#5e3c38"/>
  <path d="M1708 455 Q1719 451 1731 454 L1730 456.5 Q1719 455 1709 457.5Z" fill="#d6cac6"/>
 </g>
</svg>
</div>
<div class="a" style="left:1541px;top:477px;width:175px;height:24px;background:rgba(50,50,50,0.8);border-radius:7px"></div>
<div class="t" style="left:1545px;top:481px;font-size:16px;letter-spacing:-0.15px;color:#fff">Abderrahim benlahcene</div>
<!-- tile 2 -->
<div class="a" style="left:1537px;top:505px;width:380px;height:213px;border-radius:0 0 9px 9px;overflow:hidden;background:#bdbdbd">
<svg style="left:-1537px;top:-505px" width="1918" height="947">
 <defs>
  <linearGradient id="v2bg" x1="0" y1="0" x2="1" y2="0"><stop offset="0" stop-color="#b8b8b8"/><stop offset="0.5" stop-color="#c3c3c3"/><stop offset="1" stop-color="#cdcdcd"/></linearGradient>
  <radialGradient id="face2" cx="0.5" cy="0.45" r="0.6"><stop offset="0" stop-color="#dcbcae"/><stop offset="1" stop-color="#b89484"/></radialGradient>
 </defs>
 <rect x="1537" y="505" width="380" height="213" fill="url(#v2bg)"/>
 <g filter="url(#bl8)">
  <rect x="1590" y="520" width="60" height="80" fill="#a6a6a2"/>
  <rect x="1640" y="515" width="12" height="60" fill="#7d7d78"/>
  <ellipse cx="1700" cy="600" rx="40" ry="25" fill="#8e8e8e"/>
  <ellipse cx="1620" cy="650" rx="25" ry="15" fill="#9a9a9a"/>
  <rect x="1780" y="505" width="137" height="213" fill="#c4c4c4"/>
 </g>
 <g filter="url(#bl1)">
  <path d="M1603 718 Q1608 672 1640 652 Q1675 638 1700 632 L1745 632 Q1790 642 1815 675 Q1830 700 1832 718 Z" fill="#141414"/>
  <path d="M1688 652 Q1668 612 1676 572 Q1688 538 1720 538 Q1752 538 1762 575 Q1768 620 1752 655 Q1720 682 1688 652 Z" fill="#191919"/>
  <path d="M1694 600 Q1692 556 1720 552 Q1748 556 1746 600 Q1745 632 1720 640 Q1696 632 1694 600 Z" fill="url(#face2)"/>
  <path d="M1692 580 Q1696 548 1720 546 Q1744 548 1748 580 Q1740 560 1720 558 Q1700 560 1692 580Z" fill="#191919"/>
  <path d="M1701 578 Q1707 575 1713 578 M1727 578 Q1733 575 1739 578" stroke="#3a2a28" stroke-width="1.4" fill="none"/>
  <rect x="1698" y="582" width="21" height="13" rx="4" fill="none" stroke="#d8c4cc" stroke-width="1.3"/>
  <rect x="1722" y="582" width="21" height="13" rx="4" fill="none" stroke="#d8c4cc" stroke-width="1.3"/>
  <path d="M1704 589 Q1708 587 1712 589 M1728 589 Q1732 587 1736 589" stroke="#4a5a50" stroke-width="1.6" fill="none"/>
  <path d="M1719 596 Q1717 606 1715 609 Q1720 611 1724 609" stroke="#a88070" stroke-width="1.2" fill="none"/>
  <path d="M1710 619 Q1720 615 1730 619 Q1720 624 1710 619Z" fill="#8a4a48"/>
  <path d="M1701 718 L1706 681 L1730 681 L1740 718 Z" fill="#d4ad8a"/>
 </g>
</svg>
</div>
<div class="a" style="left:1541px;top:690px;width:120px;height:25px;background:rgba(38,38,38,0.78);border-radius:7px"></div>
<svg style="left:0;top:0" width="10" height="10" fill="none" stroke="#f04a50" stroke-width="1.5"><path d="M1551 696 Q1551 693 1554 693 Q1557 693 1557 696 V703 Q1557 706 1554 706 Q1551 706 1551 703Z" fill="#f04a50" stroke="none"/><path d="M1548 703 Q1548 708.5 1554 708.5 Q1560 708.5 1560 703 M1554 708.5 V711 M1550 711.5 H1558"/><line x1="1546" y1="712" x2="1562" y2="692" stroke="#f04a50"/></svg>
<div class="t" style="left:1567px;top:695px;font-size:16px;color:#fff">Doaa Al Salti</div>
<svg style="left:0;top:0" width="10" height="10" stroke="#8a8a8a" stroke-width="1.6"><line x1="1524.5" y1="521" x2="1524.5" y2="553"/><line x1="1529.5" y1="521" x2="1529.5" y2="553"/></svg>

</body></html>
